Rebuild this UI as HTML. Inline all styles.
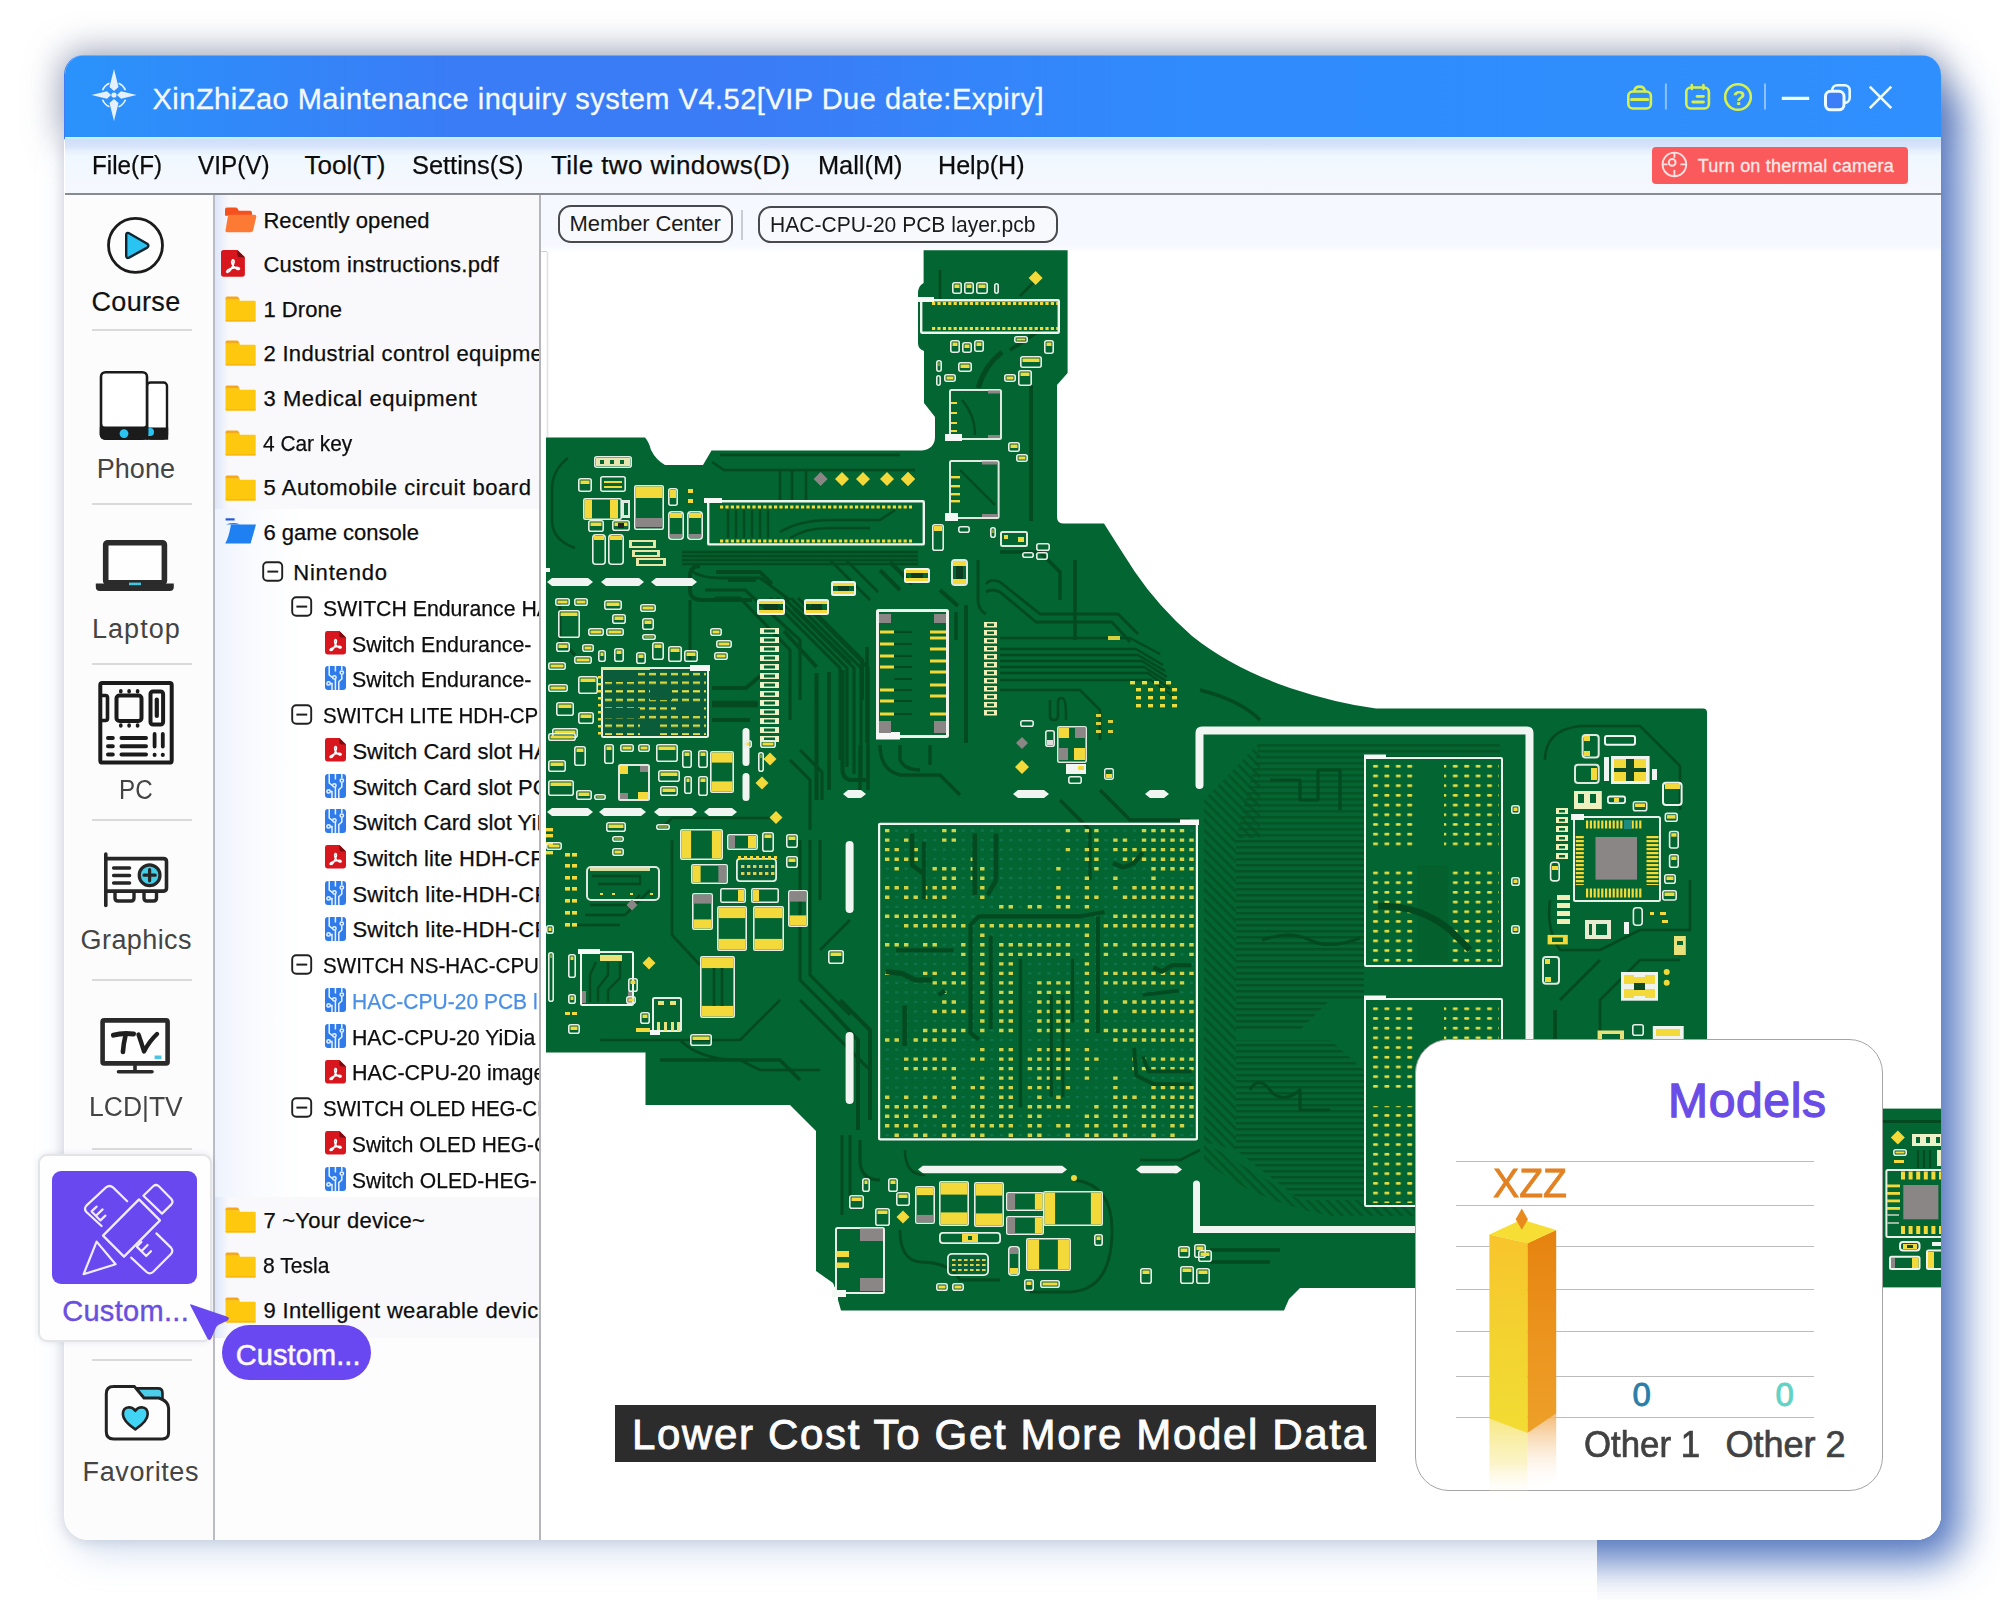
<!DOCTYPE html>
<html><head><meta charset="utf-8"><title>XinZhiZao</title>
<style>
html,body{margin:0;padding:0;}
body{width:2000px;height:1600px;background:#fff;position:relative;overflow:hidden;font-family:"Liberation Sans",sans-serif;}
.t{position:absolute;white-space:nowrap;font-family:"Liberation Sans",sans-serif;}
.b{position:absolute;box-sizing:border-box;}
svg{position:absolute;overflow:visible;}
</style></head><body>
<!-- shadows -->
<div class="b" style="left:64.00px;top:55.00px;width:1877.00px;height:84.00px;border-radius:20px 20px 0 0;box-shadow:0 -1px 34px 3px rgba(75,90,130,.58);background:#3a7df6;"></div>
<div class="b" style="left:64.00px;top:140.00px;width:1877.00px;height:1400.00px;border-radius:0 0 25px 24px;box-shadow:10px 12px 36px 0px rgba(150,178,220,.40),0 1px 13px 0 rgba(105,112,135,.30);background:#fff;"></div>
<div class="b" style="left:1900px;top:0;width:100px;height:1600px;overflow:hidden;"><div class="b" style="left:-503.00px;top:80.00px;width:544.00px;height:1460.00px;border-radius:0 20px 25px 0;box-shadow:12px 14px 40px 8px rgba(60,100,184,.8);background:#fff;"></div></div>
<div class="b" style="left:1597px;top:1500px;width:303px;height:100px;overflow:hidden;"><div class="b" style="left:-200.00px;top:-1420.00px;width:544.00px;height:1460.00px;border-radius:0 20px 25px 0;box-shadow:12px 14px 40px 8px rgba(60,100,184,.8);background:#fff;"></div></div>
<div class="b" id="win" style="left:64.5px;top:54.5px;width:1876.5px;height:1485.5px;border-radius:20px 20px 25px 24px;overflow:hidden;background:#fff;">
<div class="b" style="left:-64.5px;top:-54.5px;width:2000px;height:1600px;">
<div class="b" style="left:64.00px;top:54.00px;width:1877.00px;height:83.50px;background:linear-gradient(90deg,#2a93fb 0%,#3189f9 9%,#3a7cf6 21%,#3b7bf6 36%,#3584f9 48%,#308bfc 60%,#2f8ffd 100%);"></div>
<div class="b" style="left:64.00px;top:54.50px;width:1877.00px;height:1.50px;background:rgba(150,200,255,.55);"></div>
<div class="b" style="left:64.00px;top:137.50px;width:1877.00px;height:56.00px;background:linear-gradient(180deg,#cfddf8 0px,#d6e3fa 8px,#e6f0fd 13px,#eff7ff 18px,#f3f8fe 30px,#f5f8fe 100%);"></div>
<div class="b" style="left:64.00px;top:137.30px;width:1877.00px;height:2.00px;background:#cdeeff;"></div>
<div class="b" style="left:64.00px;top:192.80px;width:1877.00px;height:2.20px;background:#888b90;"></div>
<div class="b" style="left:64.00px;top:195.00px;width:149.00px;height:1345.00px;background:#fcfcfd;"></div>
<div class="b" style="left:212.60px;top:195.00px;width:2.00px;height:1345.00px;background:#b9bcc4;"></div>
<div class="b" style="left:214.60px;top:195.00px;width:325.00px;height:1345.00px;background:#f9f9fb;"></div>
<div class="b" style="left:539.20px;top:195.00px;width:2.00px;height:1345.00px;background:#b4b6bb;"></div>
<div class="b" style="left:541.20px;top:195.00px;width:1400.00px;height:58.00px;background:linear-gradient(180deg,#f5f8fe 0,#f5f8fe 50px,#ffffff 58px);"></div>
<div class="b" style="left:541.20px;top:253.00px;width:1400.00px;height:1287.00px;background:#fff;"></div>
<div class="b" style="left:541.20px;top:251.20px;width:6.00px;height:1.20px;background:#cfd1d6;"></div>
<div class="b" style="left:545.60px;top:252.00px;width:3.00px;height:185.00px;background:linear-gradient(90deg,rgba(225,226,230,0),rgba(222,224,228,.9) 50%,rgba(235,236,240,0));"></div>
<div class="t" style="left:152.50px;top:81.65px;font-size:29px;line-height:34.80px;color:#f4f9ff;letter-spacing:0.496px;-webkit-text-stroke:0.3px #f4f9ff;">XinZhiZao Maintenance inquiry system V4.52[VIP Due date:Expiry]</div>
<svg style="left:90px;top:68px" width="48" height="54" viewBox="0 0 48 54">
<g fill="#e6f1ff">
<path d="M24 1 L28.5 19 L24 23 L19.5 19 Z"/>
<path d="M24 53 L28.5 35 L24 31 L19.5 35 Z"/>
<path d="M1.5 27 L17 23.2 L21 27 L17 30.8 Z"/>
<path d="M46.5 27 L31 23.2 L27 27 L31 30.8 Z"/>
<circle cx="24" cy="27" r="2.6"/>
</g>
<g fill="none" stroke="#e6f1ff" stroke-width="1.7">
<path d="M12.6 22.2 A12.6 12.6 0 0 1 19.4 15.2"/>
<path d="M28.6 15.2 A12.6 12.6 0 0 1 35.4 22.2"/>
<path d="M35.4 31.8 A12.6 12.6 0 0 1 28.6 38.8"/>
<path d="M19.4 38.8 A12.6 12.6 0 0 1 12.6 31.8"/>
</g></svg>
<svg style="left:1620px;top:78px" width="290" height="40" viewBox="1620 78 290 40">
<g fill="none" stroke="#d6f04e" stroke-width="2.6" stroke-linejoin="round" stroke-linecap="round">
<rect x="1628.3" y="91.5" width="22.6" height="17" rx="4.5"/>
<path d="M1634.3 91 a5.4 5.4 0 0 1 10.6 0"/>
<path d="M1631.5 99.5 h16.2" stroke-width="3"/>
<rect x="1686.3" y="87.5" width="22.6" height="21" rx="4.5"/>
<path d="M1691.8 85 v4 M1703.4 85 v4" stroke-width="2.6"/>
<path d="M1697 96.3 h6.5 M1692.8 102 h10.7" stroke-width="2.8"/>
<circle cx="1738" cy="97" r="12.8"/>
</g>
<path d="M1665.9 83.5 v26" stroke="#8cc0ff" stroke-width="2"/>
<path d="M1765 83.5 v26" stroke="#8cc0ff" stroke-width="2"/>
<g fill="none" stroke="#ecfbff" stroke-linecap="butt">
<path d="M1781.8 98.3 h27.4" stroke-width="3.2"/>
<rect x="1832.2" y="85.3" width="17.5" height="17.5" rx="5" stroke-width="2.6"/>
<rect x="1825.5" y="91.3" width="18.5" height="18.5" rx="5" stroke-width="3" fill="#3c7df8"/>
<path d="M1869.8 86.6 L1891.3 108.2 M1891.3 86.6 L1869.8 108.2" stroke-width="2.6"/>
</g>
</svg>
<div class="t" style="left:1732.60px;top:85.12px;font-size:21px;line-height:25.20px;color:#d6f04e;letter-spacing:0.000px;font-weight:bold;">?</div>
<div class="t" style="left:91.50px;top:149.79px;font-size:26px;line-height:31.20px;color:#0c0c0c;letter-spacing:0.000px;-webkit-text-stroke:0.25px #0c0c0c;"><span style="display:inline-block;transform:scaleX(0.9322);transform-origin:0 50%;">File(F)</span></div>
<div class="t" style="left:198.00px;top:149.79px;font-size:26px;line-height:31.20px;color:#0c0c0c;letter-spacing:0.000px;-webkit-text-stroke:0.25px #0c0c0c;"><span style="display:inline-block;transform:scaleX(0.9338);transform-origin:0 50%;">VIP(V)</span></div>
<div class="t" style="left:304.50px;top:149.79px;font-size:26px;line-height:31.20px;color:#0c0c0c;letter-spacing:0.018px;-webkit-text-stroke:0.25px #0c0c0c;">Tool(T)</div>
<div class="t" style="left:412.00px;top:149.79px;font-size:26px;line-height:31.20px;color:#0c0c0c;letter-spacing:0.000px;-webkit-text-stroke:0.25px #0c0c0c;"><span style="display:inline-block;transform:scaleX(0.9769);transform-origin:0 50%;">Settins(S)</span></div>
<div class="t" style="left:551.00px;top:149.79px;font-size:26px;line-height:31.20px;color:#0c0c0c;letter-spacing:0.409px;-webkit-text-stroke:0.25px #0c0c0c;">Tile two windows(D)</div>
<div class="t" style="left:817.50px;top:149.79px;font-size:26px;line-height:31.20px;color:#0c0c0c;letter-spacing:0.000px;-webkit-text-stroke:0.25px #0c0c0c;"><span style="display:inline-block;transform:scaleX(0.9753);transform-origin:0 50%;">Mall(M)</span></div>
<div class="t" style="left:938.00px;top:149.79px;font-size:26px;line-height:31.20px;color:#0c0c0c;letter-spacing:0.000px;-webkit-text-stroke:0.25px #0c0c0c;"><span style="display:inline-block;transform:scaleX(0.9658);transform-origin:0 50%;">Help(H)</span></div>
<div class="b" style="left:1652.20px;top:147.20px;width:255.60px;height:36.60px;background:#fa5a5b;border-radius:4px;"></div>
<svg style="left:1660px;top:150px" width="30" height="30" viewBox="1660 150 30 30">
<g fill="none" stroke="#ffe3e3" stroke-width="1.9">
<circle cx="1674.4" cy="164.4" r="11.8"/>
<circle cx="1672.2" cy="162.4" r="3.4"/>
<path d="M1674.4 152.6 v5.2 M1674.4 170 v6.2 M1662.6 164.4 h5 M1680.4 164.4 h5.8"/>
</g></svg>
<div class="t" style="left:1697.70px;top:155.76px;font-size:18px;line-height:21.60px;color:#ffe9e9;letter-spacing:0.219px;-webkit-text-stroke:0.3px #ffe9e9;">Turn on thermal camera</div>
<div class="b" style="left:558.30px;top:205.30px;width:174.60px;height:37.40px;border:2px solid #47494d;border-radius:13px;background:#f7f9fd;"></div>
<div class="t" style="left:569.60px;top:211.38px;font-size:22px;line-height:26.40px;color:#1a1a1a;letter-spacing:-0.136px;">Member Center</div>
<div class="b" style="left:741.20px;top:209.50px;width:2.00px;height:30.50px;background:#c9cbd0;"></div>
<div class="b" style="left:757.80px;top:206.00px;width:299.80px;height:37.40px;border:2px solid #47494d;border-radius:13px;background:#f7f9fd;"></div>
<div class="t" style="left:769.80px;top:211.58px;font-size:22px;line-height:26.40px;color:#1a1a1a;letter-spacing:0.000px;"><span style="display:inline-block;transform:scaleX(0.9566);transform-origin:0 50%;">HAC-CPU-20 PCB layer.pcb</span></div>
<!-- sidebar -->
<div class="b" style="left:92.00px;top:328.80px;width:100.00px;height:2.00px;background:#dadada;"></div>
<div class="b" style="left:92.00px;top:502.80px;width:100.00px;height:2.00px;background:#dadada;"></div>
<div class="b" style="left:92.00px;top:662.60px;width:100.00px;height:2.00px;background:#dadada;"></div>
<div class="b" style="left:92.00px;top:818.70px;width:100.00px;height:2.00px;background:#dadada;"></div>
<div class="b" style="left:92.00px;top:978.90px;width:100.00px;height:2.00px;background:#dadada;"></div>
<div class="b" style="left:92.00px;top:1147.80px;width:100.00px;height:2.00px;background:#dadada;"></div>
<div class="b" style="left:92.00px;top:1358.80px;width:100.00px;height:2.00px;background:#dadada;"></div>
<svg style="left:100px;top:210px" width="72" height="72" viewBox="100 210 72 72">
<circle cx="135.5" cy="245.3" r="27" fill="#fdfdfd" stroke="#1b1b1b" stroke-width="2.8"/>
<path d="M126.2 235 L126.2 256 Q126.4 258.8 129 257.6 L147.2 247.6 Q149.6 245.6 147.2 243.8 L129 233.2 Q126.4 232 126.2 235 Z" fill="#29c4f2" stroke="#0d2530" stroke-width="2.4" stroke-linejoin="round"/>
</svg>
<div class="t" style="left:91.50px;top:285.84px;font-size:27px;line-height:32.40px;color:#111;letter-spacing:0.333px;-webkit-text-stroke:0.2px #111;">Course</div>
<svg style="left:96px;top:368px" width="78" height="76" viewBox="96 368 78 76">
<rect x="147" y="382.5" width="20" height="56" rx="3.5" fill="#fff" stroke="#1b1b1b" stroke-width="2.4"/>
<rect x="146" y="427.5" width="22.2" height="12.2" fill="#1b1b1b"/>
<path d="M148 428 h2 a4 4 0 0 1 0 8 h-2z" fill="#29c4f2"/>
<rect x="101" y="372.2" width="46" height="66.4" rx="4.5" fill="#fff" stroke="#1b1b1b" stroke-width="2.6"/>
<path d="M99.8 427 h48.4 v12.8 h-43.5 a5 5 0 0 1 -5 -5 z" fill="#1b1b1b"/>
<path d="M101.5 424 q0 3.2 3.4 3.2 h38.5 q3.4 0 3.4 -3.2" fill="none" stroke="#1b1b1b" stroke-width="1.4"/>
<circle cx="124" cy="433.6" r="4.4" fill="#29c4f2"/>
</svg>
<div class="t" style="left:96.70px;top:452.84px;font-size:27px;line-height:32.40px;color:#444;letter-spacing:0.057px;">Phone</div>
<svg style="left:94px;top:536px" width="84" height="60" viewBox="94 536 84 60">
<rect x="105.7" y="542.7" width="58.7" height="40" rx="2" fill="#fefefe" stroke="#2b2b2b" stroke-width="5.6"/>
<path d="M95.8 583.4 h78 v3.6 q0 4 -4 4 h-70 q-4 0 -4 -4 z" fill="#2b2b2b"/>
<rect x="129" y="582.6" width="12" height="2.6" fill="#41c8e0"/>
</svg>
<div class="t" style="left:92.00px;top:613.04px;font-size:27px;line-height:32.40px;color:#444;letter-spacing:1.044px;">Laptop</div>
<svg style="left:96px;top:678px" width="80" height="90" viewBox="96 678 80 90">
<g fill="none" stroke="#1b1b1b" stroke-linecap="round" stroke-linejoin="round">
<rect x="100.3" y="683" width="71.4" height="79.6" rx="2" stroke-width="4"/>
<path d="M101 695.5 h4.5 a2 2 0 0 1 2 2 v21 a2 2 0 0 1 -2 2 h-4.5" stroke-width="3.6"/>
<rect x="116.5" y="695.5" width="25" height="25.5" rx="3" stroke-width="4"/>
<rect x="150.5" y="691.5" width="12.6" height="33" rx="2.5" stroke-width="4"/>
<path d="M156.8 699.5 v16.5" stroke-width="4.2"/>
<path d="M120.8 690.8 v1 M129.1 690.8 v1 M137.6 690.8 v1 M120.8 725 v1 M129.1 725 v1 M137.6 725 v1" stroke-width="3.6"/>
<path d="M108 738 h4.8 M108 746.3 h4.8 M108 754.6 h4.8" stroke-width="4"/>
<path d="M121.5 738 h24.5 M121.5 746.3 h24.5 M121.5 754.6 h24.5" stroke-width="4"/>
<path d="M154.6 734 v12.5 M162.8 734 v12.5" stroke-width="3.8"/>
<path d="M154.6 754.8 v.2 M162.8 754.8 v.2" stroke-width="4"/>
</g></svg>
<div class="t" style="left:118.80px;top:773.94px;font-size:27px;line-height:32.40px;color:#444;letter-spacing:0.000px;"><span style="display:inline-block;transform:scaleX(0.8958);transform-origin:0 50%;">PC</span></div>
<svg style="left:100px;top:848px" width="72" height="64" viewBox="100 848 72 64">
<g fill="none" stroke="#262626" stroke-linecap="round" stroke-linejoin="round">
<path d="M105.8 854 v51.5" stroke-width="3.6"/>
<path d="M106 858.6 h57.5 q3 0 3 3 v26.5 q0 3 -3 3 h-57.5" stroke-width="3.6"/>
<path d="M113.6 868 h16 M113.6 875.5 h16 M113.6 883 h16" stroke-width="3.4"/>
<path d="M115 892 v6 q0 3 3 3 h13 q3 0 3 -3 v-6 M144 892 v6 q0 3 3 3 h6.5 q3 0 3 -3 v-6" stroke-width="3.4"/>
</g>
<circle cx="149.6" cy="875.2" r="10.4" fill="#43cde6" stroke="#262626" stroke-width="3.2"/>
<path d="M149.6 869.6 v11.2 M144 875.2 h11.2" stroke="#262626" stroke-width="3.2" stroke-linecap="round"/>
</svg>
<div class="t" style="left:80.60px;top:923.84px;font-size:27px;line-height:32.40px;color:#444;letter-spacing:0.409px;">Graphics</div>
<svg style="left:96px;top:1014px" width="80" height="64" viewBox="96 1014 80 64">
<rect x="102.6" y="1020.4" width="65" height="43" rx="1.5" fill="#fefefe" stroke="#2a2a2a" stroke-width="4.6"/>
<path d="M135 1065 v6.5 M118.5 1071.8 h33.5" stroke="#2a2a2a" stroke-width="3.6" stroke-linecap="round"/>
<g fill="none" stroke="#1f1f1f" stroke-linecap="round" stroke-linejoin="round">
<path d="M113.5 1035.2 q9 -2.6 20 -1.2" stroke-width="5"/>
<path d="M125.5 1035.5 q-2 8 -2.6 16.5" stroke-width="4.6"/>
<path d="M138.5 1034.5 q3 8.5 5.5 17 q5.5 -10.5 13 -17.5" stroke-width="4.4"/>
</g>
<rect x="154.6" y="1055.5" width="6.8" height="3.6" fill="#4cc4e2"/>
</svg>
<div class="t" style="left:88.90px;top:1090.84px;font-size:27px;line-height:32.40px;color:#444;letter-spacing:0.000px;"><span style="display:inline-block;transform:scaleX(0.9819);transform-origin:0 50%;">LCD|TV</span></div>
<svg style="left:100px;top:1380px" width="76" height="66" viewBox="100 1380 76 66">
<path d="M136.5 1388.4 h21.5 q4.5 0 4.5 4.5 v8 h-17 z" fill="#4ccdea" stroke="#222" stroke-width="2.6" stroke-linejoin="round"/>
<path d="M113.5 1386.6 h21 l9.5 11.4 h15 q9.6 3.4 9.6 10 v24.6 q0 6.4 -6.4 6.4 h-48.7 q-7.2 0 -7.2 -7.2 v-38 q0 -7.2 7.2 -7.2 z" fill="#fdfdfd" stroke="#222" stroke-width="3" stroke-linejoin="round"/>
<path d="M135.3 1429.4 q-12.4 -8.4 -12.4 -15.2 q0 -6.6 6 -7 q4 0 6.4 3.6 q2.4 -3.6 6.4 -3.6 q6 .4 6 7 q0 6.8 -12.4 15.2 z" fill="#42d4f4" stroke="#222" stroke-width="2.6" stroke-linejoin="round"/>
</svg>
<div class="t" style="left:82.60px;top:1455.84px;font-size:27px;line-height:32.40px;color:#444;letter-spacing:0.609px;">Favorites</div>
<!-- tree -->
<div class="b" style="left:214.60px;top:508.50px;width:324.60px;height:688.50px;background:linear-gradient(90deg,#eef3fd 0px,#fafbfe 40px,#ffffff 90px);"></div>
<div class="b" style="left:214.60px;top:195.00px;width:14.00px;height:313.50px;background:linear-gradient(90deg,rgba(214,226,250,.8),rgba(214,226,250,0));"></div>
<div class="b" style="left:214.60px;top:1197.00px;width:14.00px;height:343.00px;background:linear-gradient(90deg,rgba(214,226,250,.8),rgba(214,226,250,0));"></div>
<div class="b" style="left:214.60px;top:1338.00px;width:324.60px;height:202.00px;background:#fdfdfe;"></div>
<svg style="left:224px;top:207px" width="33" height="26" viewBox="0 0 33 26">
<path d="M1 2.6 q0 -2 2 -2 h8.4 q1.6 0 2.4 1.4 l1 1.8 h11.2 q2 0 2 2 v3 h-27z" fill="#f5511e"/>
<path d="M5.6 7.8 h24.8 q2.4 0 1.8 2.4 l-3 13 q-.6 2 -2.6 2 h-23.2 q-2.4 0 -1.8 -2.4 l2.2 -13 q.4 -2 1.8 -2z" fill="#fd7a35"/>
</svg>
<div class="t" style="left:263.40px;top:207.58px;font-size:22px;line-height:26.40px;color:#0d0d0d;letter-spacing:0.077px;-webkit-text-stroke:0.25px #0d0d0d;width:275.20px;overflow:hidden;">Recently opened</div>
<svg style="left:220.5px;top:250.4px" width="23.9" height="26.8" viewBox="0 0 21 23.5">
<path d="M2.4 0 h12 l6.6 6.4 v14.7 q0 2.4 -2.4 2.4 h-16.2 q-2.4 0 -2.4 -2.4 v-18.7 q0 -2.4 2.4 -2.4z" fill="#d8161e"/>
<path d="M14.4 0 l6.6 6.4 h-4.6 q-2 0 -2 -2z" fill="#7c0c10"/>
<path d="M10.2 8.6 q1.6 -.2 1.2 2.2 q-.4 2.6 -2.6 6.2 q-1.6 2.6 -3.2 2.6 q-1.2 -.4 .2 -1.8 q2.2 -1.8 6.6 -2.4 q3.4 -.4 3.8 .8 q0 1.2 -2 .6 q-2.4 -1 -4.2 -4.2 q-1 -2.6 .2 -4z" fill="none" stroke="#fff" stroke-width="1.5" stroke-linejoin="round"/>
</svg>
<div class="t" style="left:263.40px;top:252.18px;font-size:22px;line-height:26.40px;color:#0d0d0d;letter-spacing:0.251px;-webkit-text-stroke:0.25px #0d0d0d;width:275.20px;overflow:hidden;">Custom instructions.pdf</div>
<svg style="left:224.8px;top:295.79999999999995px" width="31" height="26" viewBox="0 0 31 26">
<path d="M0.5 2 q0 -1.6 1.6 -1.6 h9.6 q1.4 0 2 1.4 l1 2 h-14.2z" fill="#f6a71c"/>
<path d="M0.5 3.2 h13.2 l1.4 1.6 h14.6 q1 0 1 1 v18.6 q0 1 -1 1 h-28.2 q-1 0 -1 -1z" fill="#fec80f"/>
<path d="M0.5 24 h30.2 v.4 q0 1 -1 1 h-28.2 q-1 0 -1 -1z" fill="#f9b80f"/>
</svg>
<div class="t" style="left:263.40px;top:296.68px;font-size:22px;line-height:26.40px;color:#0d0d0d;letter-spacing:0.055px;-webkit-text-stroke:0.25px #0d0d0d;width:275.20px;overflow:hidden;">1 Drone</div>
<svg style="left:224.8px;top:340.4px" width="31" height="26" viewBox="0 0 31 26">
<path d="M0.5 2 q0 -1.6 1.6 -1.6 h9.6 q1.4 0 2 1.4 l1 2 h-14.2z" fill="#f6a71c"/>
<path d="M0.5 3.2 h13.2 l1.4 1.6 h14.6 q1 0 1 1 v18.6 q0 1 -1 1 h-28.2 q-1 0 -1 -1z" fill="#fec80f"/>
<path d="M0.5 24 h30.2 v.4 q0 1 -1 1 h-28.2 q-1 0 -1 -1z" fill="#f9b80f"/>
</svg>
<div class="t" style="left:263.40px;top:341.28px;font-size:22px;line-height:26.40px;color:#0d0d0d;letter-spacing:0.341px;-webkit-text-stroke:0.25px #0d0d0d;width:275.20px;overflow:hidden;">2 Industrial control equipment</div>
<svg style="left:224.8px;top:385.2px" width="31" height="26" viewBox="0 0 31 26">
<path d="M0.5 2 q0 -1.6 1.6 -1.6 h9.6 q1.4 0 2 1.4 l1 2 h-14.2z" fill="#f6a71c"/>
<path d="M0.5 3.2 h13.2 l1.4 1.6 h14.6 q1 0 1 1 v18.6 q0 1 -1 1 h-28.2 q-1 0 -1 -1z" fill="#fec80f"/>
<path d="M0.5 24 h30.2 v.4 q0 1 -1 1 h-28.2 q-1 0 -1 -1z" fill="#f9b80f"/>
</svg>
<div class="t" style="left:263.40px;top:386.08px;font-size:22px;line-height:26.40px;color:#0d0d0d;letter-spacing:0.583px;-webkit-text-stroke:0.25px #0d0d0d;width:275.20px;overflow:hidden;">3 Medical equipment</div>
<svg style="left:224.8px;top:430.2px" width="31" height="26" viewBox="0 0 31 26">
<path d="M0.5 2 q0 -1.6 1.6 -1.6 h9.6 q1.4 0 2 1.4 l1 2 h-14.2z" fill="#f6a71c"/>
<path d="M0.5 3.2 h13.2 l1.4 1.6 h14.6 q1 0 1 1 v18.6 q0 1 -1 1 h-28.2 q-1 0 -1 -1z" fill="#fec80f"/>
<path d="M0.5 24 h30.2 v.4 q0 1 -1 1 h-28.2 q-1 0 -1 -1z" fill="#f9b80f"/>
</svg>
<div class="t" style="left:263.40px;top:431.08px;font-size:22px;line-height:26.40px;color:#0d0d0d;letter-spacing:0.000px;-webkit-text-stroke:0.25px #0d0d0d;width:275.20px;overflow:hidden;"><span style="display:inline-block;transform:scaleX(0.9475);transform-origin:0 50%;">4 Car key</span></div>
<svg style="left:224.8px;top:474.59999999999997px" width="31" height="26" viewBox="0 0 31 26">
<path d="M0.5 2 q0 -1.6 1.6 -1.6 h9.6 q1.4 0 2 1.4 l1 2 h-14.2z" fill="#f6a71c"/>
<path d="M0.5 3.2 h13.2 l1.4 1.6 h14.6 q1 0 1 1 v18.6 q0 1 -1 1 h-28.2 q-1 0 -1 -1z" fill="#fec80f"/>
<path d="M0.5 24 h30.2 v.4 q0 1 -1 1 h-28.2 q-1 0 -1 -1z" fill="#f9b80f"/>
</svg>
<div class="t" style="left:263.40px;top:475.48px;font-size:22px;line-height:26.40px;color:#0d0d0d;letter-spacing:0.578px;-webkit-text-stroke:0.25px #0d0d0d;width:275.20px;overflow:hidden;">5 Automobile circuit board</div>
<svg style="left:224px;top:518px" width="33" height="28" viewBox="0 0 33 28">
<path d="M1.6 1.4 h9" stroke="#2456d8" stroke-width="2.2"/>
<path d="M2 6.4 q8 -2.6 14 0 h-14z" fill="#2c7ae8"/>
<path d="M7 6.4 h25 l-5.4 19 h-25.4 q3.6 -6 5.8 -19z" fill="#1f80f2"/>
</svg>
<div class="t" style="left:263.40px;top:519.88px;font-size:22px;line-height:26.40px;color:#0d0d0d;letter-spacing:0.021px;-webkit-text-stroke:0.25px #0d0d0d;width:275.20px;overflow:hidden;">6 game console</div>
<svg style="left:261.59999999999997px;top:560.6999999999999px" width="22" height="22" viewBox="0 0 22 22">
<rect x="1.2" y="1.2" width="19" height="18.6" rx="4" fill="#fff" stroke="#202020" stroke-width="1.9"/>
<path d="M5.4 10.6 h10.8" stroke="#202020" stroke-width="2"/></svg>
<div class="t" style="left:293.20px;top:560.18px;font-size:22px;line-height:26.40px;color:#0d0d0d;letter-spacing:0.818px;-webkit-text-stroke:0.25px #0d0d0d;width:245.40px;overflow:hidden;">Nintendo</div>
<svg style="left:291.2px;top:596.43px" width="22" height="22" viewBox="0 0 22 22">
<rect x="1.2" y="1.2" width="19" height="18.6" rx="4" fill="#fff" stroke="#202020" stroke-width="1.9"/>
<path d="M5.4 10.6 h10.8" stroke="#202020" stroke-width="2"/></svg>
<div class="t" style="left:322.60px;top:595.91px;font-size:22px;line-height:26.40px;color:#0d0d0d;letter-spacing:0.000px;-webkit-text-stroke:0.25px #0d0d0d;width:216.00px;overflow:hidden;"><span style="display:inline-block;transform:scaleX(0.9660);transform-origin:0 50%;">SWITCH Endurance HAC-CPU-01</span></div>
<svg style="left:324.8px;top:630.96px" width="21.0" height="23.5" viewBox="0 0 21 23.5">
<path d="M2.4 0 h12 l6.6 6.4 v14.7 q0 2.4 -2.4 2.4 h-16.2 q-2.4 0 -2.4 -2.4 v-18.7 q0 -2.4 2.4 -2.4z" fill="#d8161e"/>
<path d="M14.4 0 l6.6 6.4 h-4.6 q-2 0 -2 -2z" fill="#7c0c10"/>
<path d="M10.2 8.6 q1.6 -.2 1.2 2.2 q-.4 2.6 -2.6 6.2 q-1.6 2.6 -3.2 2.6 q-1.2 -.4 .2 -1.8 q2.2 -1.8 6.6 -2.4 q3.4 -.4 3.8 .8 q0 1.2 -2 .6 q-2.4 -1 -4.2 -4.2 q-1 -2.6 .2 -4z" fill="none" stroke="#fff" stroke-width="1.5" stroke-linejoin="round"/>
</svg>
<div class="t" style="left:352.40px;top:631.64px;font-size:22px;line-height:26.40px;color:#0d0d0d;letter-spacing:0.000px;-webkit-text-stroke:0.25px #0d0d0d;width:186.20px;overflow:hidden;"><span style="display:inline-block;transform:scaleX(0.9720);transform-origin:0 50%;">Switch Endurance-</span></div>
<svg style="left:324.8px;top:666.4899999999999px" width="21" height="24" viewBox="0 0 21 24">
<rect x="0" y="0" width="21" height="24" rx="3" fill="#2f7be9"/>
<g fill="none" stroke="#e8f2ff" stroke-width="1.5">
<path d="M4.2 0 v9 l3.4 2.6"/><path d="M10.4 0 v5.6 M10.4 13 v11"/><path d="M16.8 0 v4"/>
<path d="M16.8 9 v4 l-3 2.6 v8.4"/><path d="M7 24 v-6.6 h-2"/>
<circle cx="9.4" cy="11.4" r="1.7"/><circle cx="16.8" cy="6.6" r="1.7"/><circle cx="3.6" cy="17.4" r="1.7"/>
</g></svg>
<div class="t" style="left:352.40px;top:667.37px;font-size:22px;line-height:26.40px;color:#0d0d0d;letter-spacing:0.000px;-webkit-text-stroke:0.25px #0d0d0d;width:186.20px;overflow:hidden;"><span style="display:inline-block;transform:scaleX(0.9720);transform-origin:0 50%;">Switch Endurance-</span></div>
<svg style="left:291.2px;top:703.6199999999999px" width="22" height="22" viewBox="0 0 22 22">
<rect x="1.2" y="1.2" width="19" height="18.6" rx="4" fill="#fff" stroke="#202020" stroke-width="1.9"/>
<path d="M5.4 10.6 h10.8" stroke="#202020" stroke-width="2"/></svg>
<div class="t" style="left:322.60px;top:703.10px;font-size:22px;line-height:26.40px;color:#0d0d0d;letter-spacing:0.000px;-webkit-text-stroke:0.25px #0d0d0d;width:216.00px;overflow:hidden;"><span style="display:inline-block;transform:scaleX(0.9320);transform-origin:0 50%;">SWITCH LITE HDH-CPU-01</span></div>
<svg style="left:324.8px;top:738.15px" width="21.0" height="23.5" viewBox="0 0 21 23.5">
<path d="M2.4 0 h12 l6.6 6.4 v14.7 q0 2.4 -2.4 2.4 h-16.2 q-2.4 0 -2.4 -2.4 v-18.7 q0 -2.4 2.4 -2.4z" fill="#d8161e"/>
<path d="M14.4 0 l6.6 6.4 h-4.6 q-2 0 -2 -2z" fill="#7c0c10"/>
<path d="M10.2 8.6 q1.6 -.2 1.2 2.2 q-.4 2.6 -2.6 6.2 q-1.6 2.6 -3.2 2.6 q-1.2 -.4 .2 -1.8 q2.2 -1.8 6.6 -2.4 q3.4 -.4 3.8 .8 q0 1.2 -2 .6 q-2.4 -1 -4.2 -4.2 q-1 -2.6 .2 -4z" fill="none" stroke="#fff" stroke-width="1.5" stroke-linejoin="round"/>
</svg>
<div class="t" style="left:352.40px;top:738.83px;font-size:22px;line-height:26.40px;color:#0d0d0d;letter-spacing:0.033px;-webkit-text-stroke:0.25px #0d0d0d;width:186.20px;overflow:hidden;">Switch Card slot HAC</div>
<svg style="left:324.8px;top:773.68px" width="21" height="24" viewBox="0 0 21 24">
<rect x="0" y="0" width="21" height="24" rx="3" fill="#2f7be9"/>
<g fill="none" stroke="#e8f2ff" stroke-width="1.5">
<path d="M4.2 0 v9 l3.4 2.6"/><path d="M10.4 0 v5.6 M10.4 13 v11"/><path d="M16.8 0 v4"/>
<path d="M16.8 9 v4 l-3 2.6 v8.4"/><path d="M7 24 v-6.6 h-2"/>
<circle cx="9.4" cy="11.4" r="1.7"/><circle cx="16.8" cy="6.6" r="1.7"/><circle cx="3.6" cy="17.4" r="1.7"/>
</g></svg>
<div class="t" style="left:352.40px;top:774.56px;font-size:22px;line-height:26.40px;color:#0d0d0d;letter-spacing:0.033px;-webkit-text-stroke:0.25px #0d0d0d;width:186.20px;overflow:hidden;">Switch Card slot PCB</div>
<svg style="left:324.8px;top:809.41px" width="21" height="24" viewBox="0 0 21 24">
<rect x="0" y="0" width="21" height="24" rx="3" fill="#2f7be9"/>
<g fill="none" stroke="#e8f2ff" stroke-width="1.5">
<path d="M4.2 0 v9 l3.4 2.6"/><path d="M10.4 0 v5.6 M10.4 13 v11"/><path d="M16.8 0 v4"/>
<path d="M16.8 9 v4 l-3 2.6 v8.4"/><path d="M7 24 v-6.6 h-2"/>
<circle cx="9.4" cy="11.4" r="1.7"/><circle cx="16.8" cy="6.6" r="1.7"/><circle cx="3.6" cy="17.4" r="1.7"/>
</g></svg>
<div class="t" style="left:352.40px;top:810.29px;font-size:22px;line-height:26.40px;color:#0d0d0d;letter-spacing:0.031px;-webkit-text-stroke:0.25px #0d0d0d;width:186.20px;overflow:hidden;">Switch Card slot YiDian</div>
<svg style="left:324.8px;top:845.34px" width="21.0" height="23.5" viewBox="0 0 21 23.5">
<path d="M2.4 0 h12 l6.6 6.4 v14.7 q0 2.4 -2.4 2.4 h-16.2 q-2.4 0 -2.4 -2.4 v-18.7 q0 -2.4 2.4 -2.4z" fill="#d8161e"/>
<path d="M14.4 0 l6.6 6.4 h-4.6 q-2 0 -2 -2z" fill="#7c0c10"/>
<path d="M10.2 8.6 q1.6 -.2 1.2 2.2 q-.4 2.6 -2.6 6.2 q-1.6 2.6 -3.2 2.6 q-1.2 -.4 .2 -1.8 q2.2 -1.8 6.6 -2.4 q3.4 -.4 3.8 .8 q0 1.2 -2 .6 q-2.4 -1 -4.2 -4.2 q-1 -2.6 .2 -4z" fill="none" stroke="#fff" stroke-width="1.5" stroke-linejoin="round"/>
</svg>
<div class="t" style="left:352.40px;top:846.02px;font-size:22px;line-height:26.40px;color:#0d0d0d;letter-spacing:0.115px;-webkit-text-stroke:0.25px #0d0d0d;width:186.20px;overflow:hidden;">Switch lite HDH-CPU</div>
<svg style="left:324.8px;top:880.87px" width="21" height="24" viewBox="0 0 21 24">
<rect x="0" y="0" width="21" height="24" rx="3" fill="#2f7be9"/>
<g fill="none" stroke="#e8f2ff" stroke-width="1.5">
<path d="M4.2 0 v9 l3.4 2.6"/><path d="M10.4 0 v5.6 M10.4 13 v11"/><path d="M16.8 0 v4"/>
<path d="M16.8 9 v4 l-3 2.6 v8.4"/><path d="M7 24 v-6.6 h-2"/>
<circle cx="9.4" cy="11.4" r="1.7"/><circle cx="16.8" cy="6.6" r="1.7"/><circle cx="3.6" cy="17.4" r="1.7"/>
</g></svg>
<div class="t" style="left:352.40px;top:881.75px;font-size:22px;line-height:26.40px;color:#0d0d0d;letter-spacing:0.289px;-webkit-text-stroke:0.25px #0d0d0d;width:186.20px;overflow:hidden;">Switch lite-HDH-CPU</div>
<svg style="left:324.8px;top:916.5999999999999px" width="21" height="24" viewBox="0 0 21 24">
<rect x="0" y="0" width="21" height="24" rx="3" fill="#2f7be9"/>
<g fill="none" stroke="#e8f2ff" stroke-width="1.5">
<path d="M4.2 0 v9 l3.4 2.6"/><path d="M10.4 0 v5.6 M10.4 13 v11"/><path d="M16.8 0 v4"/>
<path d="M16.8 9 v4 l-3 2.6 v8.4"/><path d="M7 24 v-6.6 h-2"/>
<circle cx="9.4" cy="11.4" r="1.7"/><circle cx="16.8" cy="6.6" r="1.7"/><circle cx="3.6" cy="17.4" r="1.7"/>
</g></svg>
<div class="t" style="left:352.40px;top:917.48px;font-size:22px;line-height:26.40px;color:#0d0d0d;letter-spacing:0.289px;-webkit-text-stroke:0.25px #0d0d0d;width:186.20px;overflow:hidden;">Switch lite-HDH-CPU</div>
<svg style="left:291.2px;top:953.7299999999999px" width="22" height="22" viewBox="0 0 22 22">
<rect x="1.2" y="1.2" width="19" height="18.6" rx="4" fill="#fff" stroke="#202020" stroke-width="1.9"/>
<path d="M5.4 10.6 h10.8" stroke="#202020" stroke-width="2"/></svg>
<div class="t" style="left:322.60px;top:953.21px;font-size:22px;line-height:26.40px;color:#0d0d0d;letter-spacing:0.000px;-webkit-text-stroke:0.25px #0d0d0d;width:216.00px;overflow:hidden;"><span style="display:inline-block;transform:scaleX(0.9350);transform-origin:0 50%;">SWITCH NS-HAC-CPU-20</span></div>
<svg style="left:324.8px;top:988.06px" width="21" height="24" viewBox="0 0 21 24">
<rect x="0" y="0" width="21" height="24" rx="3" fill="#2f7be9"/>
<g fill="none" stroke="#e8f2ff" stroke-width="1.5">
<path d="M4.2 0 v9 l3.4 2.6"/><path d="M10.4 0 v5.6 M10.4 13 v11"/><path d="M16.8 0 v4"/>
<path d="M16.8 9 v4 l-3 2.6 v8.4"/><path d="M7 24 v-6.6 h-2"/>
<circle cx="9.4" cy="11.4" r="1.7"/><circle cx="16.8" cy="6.6" r="1.7"/><circle cx="3.6" cy="17.4" r="1.7"/>
</g></svg>
<div class="t" style="left:352.40px;top:988.94px;font-size:22px;line-height:26.40px;color:#4a8fe6;letter-spacing:0.000px;-webkit-text-stroke:0.25px #4a8fe6;width:186.20px;overflow:hidden;"><span style="display:inline-block;transform:scaleX(0.9550);transform-origin:0 50%;">HAC-CPU-20 PCB l</span></div>
<svg style="left:324.8px;top:1023.7899999999998px" width="21" height="24" viewBox="0 0 21 24">
<rect x="0" y="0" width="21" height="24" rx="3" fill="#2f7be9"/>
<g fill="none" stroke="#e8f2ff" stroke-width="1.5">
<path d="M4.2 0 v9 l3.4 2.6"/><path d="M10.4 0 v5.6 M10.4 13 v11"/><path d="M16.8 0 v4"/>
<path d="M16.8 9 v4 l-3 2.6 v8.4"/><path d="M7 24 v-6.6 h-2"/>
<circle cx="9.4" cy="11.4" r="1.7"/><circle cx="16.8" cy="6.6" r="1.7"/><circle cx="3.6" cy="17.4" r="1.7"/>
</g></svg>
<div class="t" style="left:352.40px;top:1024.67px;font-size:22px;line-height:26.40px;color:#0d0d0d;letter-spacing:0.000px;-webkit-text-stroke:0.25px #0d0d0d;width:186.20px;overflow:hidden;"><span style="display:inline-block;transform:scaleX(0.9670);transform-origin:0 50%;">HAC-CPU-20 YiDia</span></div>
<svg style="left:324.8px;top:1059.7199999999998px" width="21.0" height="23.5" viewBox="0 0 21 23.5">
<path d="M2.4 0 h12 l6.6 6.4 v14.7 q0 2.4 -2.4 2.4 h-16.2 q-2.4 0 -2.4 -2.4 v-18.7 q0 -2.4 2.4 -2.4z" fill="#d8161e"/>
<path d="M14.4 0 l6.6 6.4 h-4.6 q-2 0 -2 -2z" fill="#7c0c10"/>
<path d="M10.2 8.6 q1.6 -.2 1.2 2.2 q-.4 2.6 -2.6 6.2 q-1.6 2.6 -3.2 2.6 q-1.2 -.4 .2 -1.8 q2.2 -1.8 6.6 -2.4 q3.4 -.4 3.8 .8 q0 1.2 -2 .6 q-2.4 -1 -4.2 -4.2 q-1 -2.6 .2 -4z" fill="none" stroke="#fff" stroke-width="1.5" stroke-linejoin="round"/>
</svg>
<div class="t" style="left:352.40px;top:1060.40px;font-size:22px;line-height:26.40px;color:#0d0d0d;letter-spacing:0.000px;-webkit-text-stroke:0.25px #0d0d0d;width:186.20px;overflow:hidden;"><span style="display:inline-block;transform:scaleX(0.9770);transform-origin:0 50%;">HAC-CPU-20 image</span></div>
<svg style="left:291.2px;top:1096.6499999999999px" width="22" height="22" viewBox="0 0 22 22">
<rect x="1.2" y="1.2" width="19" height="18.6" rx="4" fill="#fff" stroke="#202020" stroke-width="1.9"/>
<path d="M5.4 10.6 h10.8" stroke="#202020" stroke-width="2"/></svg>
<div class="t" style="left:322.60px;top:1096.13px;font-size:22px;line-height:26.40px;color:#0d0d0d;letter-spacing:0.000px;-webkit-text-stroke:0.25px #0d0d0d;width:216.00px;overflow:hidden;"><span style="display:inline-block;transform:scaleX(0.9320);transform-origin:0 50%;">SWITCH OLED HEG-CPU</span></div>
<svg style="left:324.8px;top:1131.1799999999998px" width="21.0" height="23.5" viewBox="0 0 21 23.5">
<path d="M2.4 0 h12 l6.6 6.4 v14.7 q0 2.4 -2.4 2.4 h-16.2 q-2.4 0 -2.4 -2.4 v-18.7 q0 -2.4 2.4 -2.4z" fill="#d8161e"/>
<path d="M14.4 0 l6.6 6.4 h-4.6 q-2 0 -2 -2z" fill="#7c0c10"/>
<path d="M10.2 8.6 q1.6 -.2 1.2 2.2 q-.4 2.6 -2.6 6.2 q-1.6 2.6 -3.2 2.6 q-1.2 -.4 .2 -1.8 q2.2 -1.8 6.6 -2.4 q3.4 -.4 3.8 .8 q0 1.2 -2 .6 q-2.4 -1 -4.2 -4.2 q-1 -2.6 .2 -4z" fill="none" stroke="#fff" stroke-width="1.5" stroke-linejoin="round"/>
</svg>
<div class="t" style="left:352.40px;top:1131.86px;font-size:22px;line-height:26.40px;color:#0d0d0d;letter-spacing:0.000px;-webkit-text-stroke:0.25px #0d0d0d;width:186.20px;overflow:hidden;"><span style="display:inline-block;transform:scaleX(0.9480);transform-origin:0 50%;">Switch OLED HEG-CPU</span></div>
<svg style="left:324.8px;top:1166.71px" width="21" height="24" viewBox="0 0 21 24">
<rect x="0" y="0" width="21" height="24" rx="3" fill="#2f7be9"/>
<g fill="none" stroke="#e8f2ff" stroke-width="1.5">
<path d="M4.2 0 v9 l3.4 2.6"/><path d="M10.4 0 v5.6 M10.4 13 v11"/><path d="M16.8 0 v4"/>
<path d="M16.8 9 v4 l-3 2.6 v8.4"/><path d="M7 24 v-6.6 h-2"/>
<circle cx="9.4" cy="11.4" r="1.7"/><circle cx="16.8" cy="6.6" r="1.7"/><circle cx="3.6" cy="17.4" r="1.7"/>
</g></svg>
<div class="t" style="left:352.40px;top:1167.59px;font-size:22px;line-height:26.40px;color:#0d0d0d;letter-spacing:0.000px;-webkit-text-stroke:0.25px #0d0d0d;width:186.20px;overflow:hidden;"><span style="display:inline-block;transform:scaleX(0.9570);transform-origin:0 50%;">Switch OLED-HEG-</span></div>
<svg style="left:224.8px;top:1207.2px" width="31" height="26" viewBox="0 0 31 26">
<path d="M0.5 2 q0 -1.6 1.6 -1.6 h9.6 q1.4 0 2 1.4 l1 2 h-14.2z" fill="#f6a71c"/>
<path d="M0.5 3.2 h13.2 l1.4 1.6 h14.6 q1 0 1 1 v18.6 q0 1 -1 1 h-28.2 q-1 0 -1 -1z" fill="#fec80f"/>
<path d="M0.5 24 h30.2 v.4 q0 1 -1 1 h-28.2 q-1 0 -1 -1z" fill="#f9b80f"/>
</svg>
<div class="t" style="left:263.40px;top:1208.08px;font-size:22px;line-height:26.40px;color:#0d0d0d;letter-spacing:0.235px;-webkit-text-stroke:0.25px #0d0d0d;width:275.20px;overflow:hidden;">7 ~Your device~</div>
<svg style="left:224.8px;top:1251.8000000000002px" width="31" height="26" viewBox="0 0 31 26">
<path d="M0.5 2 q0 -1.6 1.6 -1.6 h9.6 q1.4 0 2 1.4 l1 2 h-14.2z" fill="#f6a71c"/>
<path d="M0.5 3.2 h13.2 l1.4 1.6 h14.6 q1 0 1 1 v18.6 q0 1 -1 1 h-28.2 q-1 0 -1 -1z" fill="#fec80f"/>
<path d="M0.5 24 h30.2 v.4 q0 1 -1 1 h-28.2 q-1 0 -1 -1z" fill="#f9b80f"/>
</svg>
<div class="t" style="left:263.40px;top:1252.68px;font-size:22px;line-height:26.40px;color:#0d0d0d;letter-spacing:0.000px;-webkit-text-stroke:0.25px #0d0d0d;width:275.20px;overflow:hidden;"><span style="display:inline-block;transform:scaleX(0.9594);transform-origin:0 50%;">8 Tesla</span></div>
<svg style="left:224.8px;top:1297.1000000000001px" width="31" height="26" viewBox="0 0 31 26">
<path d="M0.5 2 q0 -1.6 1.6 -1.6 h9.6 q1.4 0 2 1.4 l1 2 h-14.2z" fill="#f6a71c"/>
<path d="M0.5 3.2 h13.2 l1.4 1.6 h14.6 q1 0 1 1 v18.6 q0 1 -1 1 h-28.2 q-1 0 -1 -1z" fill="#fec80f"/>
<path d="M0.5 24 h30.2 v.4 q0 1 -1 1 h-28.2 q-1 0 -1 -1z" fill="#f9b80f"/>
</svg>
<div class="t" style="left:263.40px;top:1297.98px;font-size:22px;line-height:26.40px;color:#0d0d0d;letter-spacing:0.347px;-webkit-text-stroke:0.25px #0d0d0d;width:275.20px;overflow:hidden;">9 Intelligent wearable device</div>
<!-- pcb -->
<svg style="left:0;top:0;filter:blur(.65px)" width="2000" height="1600" viewBox="0 0 2000 1600"><path d="M546 437.5 H645 Q649 442 651 450 Q656 460 665 465 H703 L711.5 450.5 H922 Q934 449 935 438 V417 L924 403 V351 Q918 349 918 343 V293 Q918 286 923.6 283 V250.2 H1067.6 V373 L1057 385 V517 Q1057 523.6 1064 523.6 H1104 Q1118 546 1135 572 Q1158 606 1192 636 Q1232 668 1290 688 Q1335 703 1376 708.6 H1703 Q1707 708.6 1707 712.6 V1288 H1300 L1289 1299 L1284 1310.6 H841 L838 1300 V1295 L833 1283 L816 1271 V1131 L790 1105 H645.5 V1052.5 H546 Z" fill="#036531"/>
<rect x="1882.7" y="1108.6" width="60" height="178.8" fill="#036531"/>
<path d="M682 552 H918" fill="none" stroke="#034a20" stroke-width="2.34" stroke-linejoin="round"/>
<path d="M682 556 H918" fill="none" stroke="#034a20" stroke-width="2.34" stroke-linejoin="round"/>
<path d="M682 560 H918" fill="none" stroke="#034a20" stroke-width="2.34" stroke-linejoin="round"/>
<path d="M682 564 H918" fill="none" stroke="#034a20" stroke-width="2.34" stroke-linejoin="round"/>
<path d="M690 570 Q700 578 720 578 H760 L790 600" fill="none" stroke="#034a20" stroke-width="2.86" stroke-linejoin="round"/>
<path d="M705 590 H745 L800 640 V700" fill="none" stroke="#034a20" stroke-width="3.12" stroke-linejoin="round"/>
<path d="M715 598 H740 L790 650 V720" fill="none" stroke="#034a20" stroke-width="3.12" stroke-linejoin="round"/>
<path d="M830 560 L870 600" fill="none" stroke="#034a20" stroke-width="2.86" stroke-linejoin="round"/>
<path d="M846 560 L878 592" fill="none" stroke="#034a20" stroke-width="2.86" stroke-linejoin="round"/>
<path d="M720 455 H900" fill="none" stroke="#034a20" stroke-width="2.60" stroke-linejoin="round"/>
<path d="M712 462 L724 470 H915" fill="none" stroke="#034a20" stroke-width="2.60" stroke-linejoin="round"/>
<path d="M780 470 V500 M792 470 V500 M806 470 V500" fill="none" stroke="#034a20" stroke-width="2.60" stroke-linejoin="round"/>
<path d="M568 458 Q552 470 552 490 V520 Q552 540 575 548" fill="none" stroke="#034a20" stroke-width="2.60" stroke-linejoin="round"/>
<path d="M770 598 L840 668 V760" fill="none" stroke="#034a20" stroke-width="3.12" stroke-linejoin="round"/>
<path d="M777 598 L847 668 V767" fill="none" stroke="#034a20" stroke-width="3.12" stroke-linejoin="round"/>
<path d="M784 598 L854 668 V774" fill="none" stroke="#034a20" stroke-width="3.12" stroke-linejoin="round"/>
<path d="M791 598 L861 668 V781" fill="none" stroke="#034a20" stroke-width="3.12" stroke-linejoin="round"/>
<path d="M798 598 L868 668 V788" fill="none" stroke="#034a20" stroke-width="3.12" stroke-linejoin="round"/>
<path d="M1000 638 H1130 L1160 654" fill="none" stroke="#034a20" stroke-width="2.34" stroke-linejoin="round"/>
<path d="M1000 649 H1136 L1163 665" fill="none" stroke="#034a20" stroke-width="2.34" stroke-linejoin="round"/>
<path d="M1000 655 H1138 L1165 671" fill="none" stroke="#034a20" stroke-width="2.34" stroke-linejoin="round"/>
<path d="M1000 661 H1142 L1167 677" fill="none" stroke="#034a20" stroke-width="2.34" stroke-linejoin="round"/>
<path d="M1000 667 H1144 L1169 683" fill="none" stroke="#034a20" stroke-width="2.34" stroke-linejoin="round"/>
<path d="M1000 673 H1148 L1170 689" fill="none" stroke="#034a20" stroke-width="2.34" stroke-linejoin="round"/>
<path d="M1000 680 H1151 L1173 696" fill="none" stroke="#034a20" stroke-width="2.34" stroke-linejoin="round"/>
<path d="M986 584 Q990 578 1000 582 L1040 614 H1118 L1138 634" fill="none" stroke="#034a20" stroke-width="2.86" stroke-linejoin="round"/>
<path d="M986 592 Q992 588 1000 592 L1036 622 H1112 L1130 642" fill="none" stroke="#034a20" stroke-width="2.86" stroke-linejoin="round"/>
<path d="M978 560 V600 Q978 610 986 614" fill="none" stroke="#034a20" stroke-width="2.86" stroke-linejoin="round"/>
<path d="M1000 690 H1080 L1100 710 V740" fill="none" stroke="#034a20" stroke-width="2.60" stroke-linejoin="round"/>
<path d="M1050 700 V716 Q1050 720 1054 720 Q1058 720 1058 716 V702 Q1058 698 1062 698 Q1066 698 1066 716 V720" fill="none" stroke="#034a20" stroke-width="2.60" stroke-linejoin="round"/>
<path d="M1031 385 V521" fill="none" stroke="#034a20" stroke-width="3.90" stroke-linejoin="round"/>
<path d="M940 270 V300" fill="none" stroke="#034a20" stroke-width="2.60" stroke-linejoin="round"/>
<path d="M1020 296 L1034 282" fill="none" stroke="#034a20" stroke-width="2.60" stroke-linejoin="round"/>
<path d="M1002 352 Q985 365 978 388" fill="none" stroke="#034a20" stroke-width="5.20" stroke-linejoin="round"/>
<path d="M1040 330 L1010 350" fill="none" stroke="#034a20" stroke-width="3.90" stroke-linejoin="round"/>
<path d="M660 830 L672 818 H770" fill="none" stroke="#034a20" stroke-width="2.60" stroke-linejoin="round"/>
<path d="M672 840 V935 L700 965" fill="none" stroke="#034a20" stroke-width="2.60" stroke-linejoin="round"/>
<path d="M590 905 H630 L640 895" fill="none" stroke="#034a20" stroke-width="2.60" stroke-linejoin="round"/>
<path d="M585 915 H625 L650 890" fill="none" stroke="#034a20" stroke-width="2.60" stroke-linejoin="round"/>
<path d="M575 925 H620" fill="none" stroke="#034a20" stroke-width="2.60" stroke-linejoin="round"/>
<path d="M600 1040 H740 L780 1000" fill="none" stroke="#034a20" stroke-width="2.60" stroke-linejoin="round"/>
<path d="M800 840 V980 L830 1010" fill="none" stroke="#034a20" stroke-width="3.12" stroke-linejoin="round"/>
<path d="M810 840 V975 L850 1015" fill="none" stroke="#034a20" stroke-width="3.12" stroke-linejoin="round"/>
<path d="M820 840 V900" fill="none" stroke="#034a20" stroke-width="3.12" stroke-linejoin="round"/>
<path d="M790 760 L810 780 V830" fill="none" stroke="#034a20" stroke-width="3.12" stroke-linejoin="round"/>
<path d="M800 750 L822 772 V800" fill="none" stroke="#034a20" stroke-width="3.12" stroke-linejoin="round"/>
<path d="M850 920 L820 950" fill="none" stroke="#034a20" stroke-width="2.86" stroke-linejoin="round"/>
<path d="M800 1000 L870 1070 V1100" fill="none" stroke="#034a20" stroke-width="3.12" stroke-linejoin="round"/>
<path d="M680 1040 Q700 1060 740 1060 L760 1070 H820" fill="none" stroke="#034a20" stroke-width="2.60" stroke-linejoin="round"/>
<path d="M860 1140 V1160 Q860 1180 880 1180" fill="none" stroke="#034a20" stroke-width="3.12" stroke-linejoin="round"/>
<path d="M850 1135 V1200" fill="none" stroke="#034a20" stroke-width="2.86" stroke-linejoin="round"/>
<path d="M842 1135 V1215" fill="none" stroke="#034a20" stroke-width="2.86" stroke-linejoin="round"/>
<path d="M905 1150 Q905 1175 925 1175" fill="none" stroke="#034a20" stroke-width="2.60" stroke-linejoin="round"/>
<path d="M900 1230 Q900 1260 920 1262 Q950 1262 960 1280 H1000" fill="none" stroke="#034a20" stroke-width="2.86" stroke-linejoin="round"/>
<path d="M1075 1180 Q1112 1185 1112 1230 Q1112 1290 1070 1292 H1030" fill="none" stroke="#034a20" stroke-width="2.86" stroke-linejoin="round"/>
<path d="M1200 1150 L1180 1160 H1140" fill="none" stroke="#034a20" stroke-width="2.60" stroke-linejoin="round"/>
<path d="M816.5 673 V800" fill="none" stroke="#034a20" stroke-width="4.16" stroke-linejoin="round"/>
<path d="M842.5 670 V770 Q842.5 778 850 780 H866" fill="none" stroke="#034a20" stroke-width="4.16" stroke-linejoin="round"/>
<path d="M829 672 V790" fill="none" stroke="#034a20" stroke-width="3.90" stroke-linejoin="round"/>
<path d="M784 631 L816.5 667" fill="none" stroke="#034a20" stroke-width="3.90" stroke-linejoin="round"/>
<path d="M794 608 L850 663" fill="none" stroke="#034a20" stroke-width="3.90" stroke-linejoin="round"/>
<path d="M806 604 L862 660 V700" fill="none" stroke="#034a20" stroke-width="3.90" stroke-linejoin="round"/>
<path d="M966 605 V743" fill="none" stroke="#034a20" stroke-width="3.90" stroke-linejoin="round"/>
<path d="M956 612 V640" fill="none" stroke="#034a20" stroke-width="3.38" stroke-linejoin="round"/>
<path d="M867 647 V743" fill="none" stroke="#034a20" stroke-width="3.38" stroke-linejoin="round"/>
<path d="M712 704 H758" fill="none" stroke="#034a20" stroke-width="6.50" stroke-linejoin="round"/>
<path d="M712 688 H746 L760 676" fill="none" stroke="#034a20" stroke-width="3.90" stroke-linejoin="round"/>
<path d="M712 720 H750" fill="none" stroke="#034a20" stroke-width="3.90" stroke-linejoin="round"/>
<path d="M700 566 Q690 566 690 576 V590 Q690 600 702 600 H752" fill="none" stroke="#034a20" stroke-width="3.90" stroke-linejoin="round"/>
<path d="M716 572 H760 L772 584" fill="none" stroke="#034a20" stroke-width="3.90" stroke-linejoin="round"/>
<path d="M728 580 H756" fill="none" stroke="#034a20" stroke-width="3.90" stroke-linejoin="round"/>
<path d="M880 570 L900 590 M890 562 L912 584" fill="none" stroke="#034a20" stroke-width="3.90" stroke-linejoin="round"/>
<path d="M940 590 L958 606" fill="none" stroke="#034a20" stroke-width="3.90" stroke-linejoin="round"/>
<path d="M1000 552 H1040 L1060 572 V600" fill="none" stroke="#034a20" stroke-width="3.38" stroke-linejoin="round"/>
<path d="M1075 560 V640" fill="none" stroke="#034a20" stroke-width="3.38" stroke-linejoin="round"/>
<path d="M860 745 V790 M868 745 V790" fill="none" stroke="#034a20" stroke-width="3.38" stroke-linejoin="round"/>
<path d="M880 745 Q880 770 900 775 H940 L960 795" fill="none" stroke="#034a20" stroke-width="3.38" stroke-linejoin="round"/>
<path d="M900 745 V760 Q905 770 920 770 M930 745 V765" fill="none" stroke="#034a20" stroke-width="3.38" stroke-linejoin="round"/>
<path d="M1100 790 L1130 820 H1190" fill="none" stroke="#034a20" stroke-width="3.38" stroke-linejoin="round"/>
<path d="M1060 800 L1090 830 V880" fill="none" stroke="#034a20" stroke-width="3.38" stroke-linejoin="round"/>
<path d="M1200 690 Q1240 700 1260 720" fill="none" stroke="#034a20" stroke-width="3.38" stroke-linejoin="round"/>
<path d="M560 600 V640 L575 655" fill="none" stroke="#034a20" stroke-width="3.12" stroke-linejoin="round"/>
<path d="M690 600 V660" fill="none" stroke="#034a20" stroke-width="3.12" stroke-linejoin="round"/>
<path d="M840 1000 L870 1030 V1120" fill="none" stroke="#034a20" stroke-width="3.90" stroke-linejoin="round"/>
<path d="M830 1010 L858 1040 V1130" fill="none" stroke="#034a20" stroke-width="3.90" stroke-linejoin="round"/>
<path d="M660 1060 H780 L800 1080" fill="none" stroke="#034a20" stroke-width="3.38" stroke-linejoin="round"/>
<path d="M1210 1250 H1280 M1210 1262 H1270" fill="none" stroke="#034a20" stroke-width="3.38" stroke-linejoin="round"/>
<path d="M1560 1060 V1280" fill="none" stroke="#034a20" stroke-width="3.12" stroke-linejoin="round"/>
<path d="M1600 1060 V1200 L1640 1240" fill="none" stroke="#034a20" stroke-width="3.12" stroke-linejoin="round"/>
<path d="M1660 1050 V1150" fill="none" stroke="#034a20" stroke-width="3.12" stroke-linejoin="round"/>
<defs><pattern id="hl" width="6" height="6" patternUnits="userSpaceOnUse"><rect x="0" y="0" width="6" height="2.6" fill="#044f23"/></pattern><pattern id="vl" width="6" height="6" patternUnits="userSpaceOnUse"><rect x="0" y="0" width="2.4" height="6" fill="#045225"/></pattern><pattern id="dl" width="7" height="7" patternUnits="userSpaceOnUse" patternTransform="rotate(45)"><rect x="0" y="0" width="7" height="2.8" fill="#044f23"/></pattern></defs>
<path d="M1236 838 H1364 V1000 H1330 L1300 1030 H1236 Z" fill="url(#hl)" opacity=".85"/>
<path d="M1236 1040 H1330 L1364 1070 V1200 H1300 L1236 1150 Z" fill="url(#hl)" opacity=".8"/>
<path d="M1204 838 H1236 V1150 L1204 1142 Z" fill="url(#dl)" opacity=".75"/>
<path d="M1260 742 H1500 V757 H1364 V838 H1236 Z" fill="url(#hl)" opacity=".7"/>
<path d="M1204 1142 L1300 1200 H1415 V1216 H1330 Q1250 1200 1204 1160 Z" fill="url(#dl)" opacity=".7"/>
<path d="M1204 800 L1260 742 V838 H1204 Z" fill="url(#dl)" opacity=".7"/>
<path d="M1270 780 H1300 V800 H1318 V770 H1340 V810" fill="none" stroke="#034a20" stroke-width="3.12" stroke-linejoin="round"/>
<path d="M1262 940 Q1290 930 1310 940 T1360 938" fill="none" stroke="#034a20" stroke-width="3.12" stroke-linejoin="round"/>
<path d="M1250 1090 Q1258 1075 1270 1090 T1300 1090 V1110 H1330" fill="none" stroke="#034a20" stroke-width="3.12" stroke-linejoin="round"/>
<path d="M1545 760 Q1545 730 1580 726 H1640 L1680 766 V810" fill="none" stroke="#034a20" stroke-width="2.60" stroke-linejoin="round"/>
<path d="M1550 900 Q1546 930 1560 950 H1600 L1640 930 H1690 V880" fill="none" stroke="#034a20" stroke-width="2.60" stroke-linejoin="round"/>
<path d="M1560 1000 L1600 960" fill="none" stroke="#034a20" stroke-width="2.86" stroke-linejoin="round"/>
<path d="M1600 1040 V1000 L1640 960 H1680" fill="none" stroke="#034a20" stroke-width="2.60" stroke-linejoin="round"/>
<path d="M1555 1010 V1039" fill="none" stroke="#034a20" stroke-width="3.90" stroke-linejoin="round"/>
<path d="M1199.5 785 V733 Q1199.5 730.5 1202 730.5 H1527 Q1529.5 730.5 1529.5 733 V1040" fill="none" stroke="#f2f6f2" stroke-width="8" stroke-linecap="round"/>
<path d="M1196.5 1184 V1229.5 H1416" fill="none" stroke="#f2f6f2" stroke-width="7" stroke-linecap="round"/>
<defs><pattern id="bga" x="880.6" y="825.6" width="9.56" height="9.56" patternUnits="userSpaceOnUse"><rect x="2.6" y="3" width="4" height="3" rx="1" fill="#c9cf4c"/></pattern><pattern id="bgat" x="880.6" y="825.6" width="9.56" height="9.56" patternUnits="userSpaceOnUse"><rect x="2.8" y="3.2" width="3.6" height="2.4" rx="1" fill="#1d7d5a"/></pattern><pattern id="mem" x="1371" y="762" width="11.4" height="9.7" patternUnits="userSpaceOnUse"><rect x="2" y="3" width="5" height="2.6" rx="1" fill="#e4de45"/></pattern></defs>
<path d="M895.1 829.5h3.2v2.2h-3.2zM904.6 829.5h3.2v2.2h-3.2zM914.1 829.5h3.2v2.2h-3.2zM923.6 829.5h3.2v2.2h-3.2zM933.1 829.5h3.2v2.2h-3.2zM961.7 829.5h3.2v2.2h-3.2zM971.2 829.5h3.2v2.2h-3.2zM980.7 829.5h3.2v2.2h-3.2zM990.2 829.5h3.2v2.2h-3.2zM999.7 829.5h3.2v2.2h-3.2zM1009.2 829.5h3.2v2.2h-3.2zM1018.7 829.5h3.2v2.2h-3.2zM1028.2 829.5h3.2v2.2h-3.2zM1037.8 829.5h3.2v2.2h-3.2zM1047.3 829.5h3.2v2.2h-3.2zM1056.8 829.5h3.2v2.2h-3.2zM1075.8 829.5h3.2v2.2h-3.2zM1104.3 829.5h3.2v2.2h-3.2zM1113.8 829.5h3.2v2.2h-3.2zM1123.3 829.5h3.2v2.2h-3.2zM1132.9 829.5h3.2v2.2h-3.2zM1189.9 829.5h3.2v2.2h-3.2zM895.1 839.0h3.2v2.2h-3.2zM914.1 839.0h3.2v2.2h-3.2zM923.6 839.0h3.2v2.2h-3.2zM933.1 839.0h3.2v2.2h-3.2zM961.7 839.0h3.2v2.2h-3.2zM971.2 839.0h3.2v2.2h-3.2zM980.7 839.0h3.2v2.2h-3.2zM990.2 839.0h3.2v2.2h-3.2zM999.7 839.0h3.2v2.2h-3.2zM1009.2 839.0h3.2v2.2h-3.2zM1018.7 839.0h3.2v2.2h-3.2zM1028.2 839.0h3.2v2.2h-3.2zM1037.8 839.0h3.2v2.2h-3.2zM1047.3 839.0h3.2v2.2h-3.2zM1056.8 839.0h3.2v2.2h-3.2zM1066.3 839.0h3.2v2.2h-3.2zM1075.8 839.0h3.2v2.2h-3.2zM1085.3 839.0h3.2v2.2h-3.2zM1104.3 839.0h3.2v2.2h-3.2zM1132.9 839.0h3.2v2.2h-3.2zM904.6 848.5h3.2v2.2h-3.2zM923.6 848.5h3.2v2.2h-3.2zM933.1 848.5h3.2v2.2h-3.2zM942.7 848.5h3.2v2.2h-3.2zM952.2 848.5h3.2v2.2h-3.2zM961.7 848.5h3.2v2.2h-3.2zM971.2 848.5h3.2v2.2h-3.2zM980.7 848.5h3.2v2.2h-3.2zM990.2 848.5h3.2v2.2h-3.2zM999.7 848.5h3.2v2.2h-3.2zM1009.2 848.5h3.2v2.2h-3.2zM1018.7 848.5h3.2v2.2h-3.2zM1028.2 848.5h3.2v2.2h-3.2zM1037.8 848.5h3.2v2.2h-3.2zM1047.3 848.5h3.2v2.2h-3.2zM1056.8 848.5h3.2v2.2h-3.2zM1075.8 848.5h3.2v2.2h-3.2zM1104.3 848.5h3.2v2.2h-3.2zM923.6 858.1h3.2v2.2h-3.2zM933.1 858.1h3.2v2.2h-3.2zM942.7 858.1h3.2v2.2h-3.2zM952.2 858.1h3.2v2.2h-3.2zM961.7 858.1h3.2v2.2h-3.2zM980.7 858.1h3.2v2.2h-3.2zM990.2 858.1h3.2v2.2h-3.2zM999.7 858.1h3.2v2.2h-3.2zM1009.2 858.1h3.2v2.2h-3.2zM1018.7 858.1h3.2v2.2h-3.2zM1028.2 858.1h3.2v2.2h-3.2zM1037.8 858.1h3.2v2.2h-3.2zM1047.3 858.1h3.2v2.2h-3.2zM1056.8 858.1h3.2v2.2h-3.2zM1066.3 858.1h3.2v2.2h-3.2zM1075.8 858.1h3.2v2.2h-3.2zM1104.3 858.1h3.2v2.2h-3.2zM1113.8 858.1h3.2v2.2h-3.2zM885.6 867.6h3.2v2.2h-3.2zM904.6 867.6h3.2v2.2h-3.2zM914.1 867.6h3.2v2.2h-3.2zM923.6 867.6h3.2v2.2h-3.2zM961.7 867.6h3.2v2.2h-3.2zM990.2 867.6h3.2v2.2h-3.2zM999.7 867.6h3.2v2.2h-3.2zM1009.2 867.6h3.2v2.2h-3.2zM1018.7 867.6h3.2v2.2h-3.2zM1028.2 867.6h3.2v2.2h-3.2zM1037.8 867.6h3.2v2.2h-3.2zM1047.3 867.6h3.2v2.2h-3.2zM1066.3 867.6h3.2v2.2h-3.2zM1075.8 867.6h3.2v2.2h-3.2zM1085.3 867.6h3.2v2.2h-3.2zM1104.3 867.6h3.2v2.2h-3.2zM1113.8 867.6h3.2v2.2h-3.2zM1123.3 867.6h3.2v2.2h-3.2zM1132.9 867.6h3.2v2.2h-3.2zM1142.4 867.6h3.2v2.2h-3.2zM885.6 877.1h3.2v2.2h-3.2zM895.1 877.1h3.2v2.2h-3.2zM904.6 877.1h3.2v2.2h-3.2zM914.1 877.1h3.2v2.2h-3.2zM923.6 877.1h3.2v2.2h-3.2zM933.1 877.1h3.2v2.2h-3.2zM961.7 877.1h3.2v2.2h-3.2zM990.2 877.1h3.2v2.2h-3.2zM999.7 877.1h3.2v2.2h-3.2zM1009.2 877.1h3.2v2.2h-3.2zM1018.7 877.1h3.2v2.2h-3.2zM1028.2 877.1h3.2v2.2h-3.2zM1037.8 877.1h3.2v2.2h-3.2zM1047.3 877.1h3.2v2.2h-3.2zM1056.8 877.1h3.2v2.2h-3.2zM1066.3 877.1h3.2v2.2h-3.2zM1075.8 877.1h3.2v2.2h-3.2zM1094.8 877.1h3.2v2.2h-3.2zM1104.3 877.1h3.2v2.2h-3.2zM1123.3 877.1h3.2v2.2h-3.2zM1132.9 877.1h3.2v2.2h-3.2zM1142.4 877.1h3.2v2.2h-3.2zM1161.4 877.1h3.2v2.2h-3.2zM1170.9 877.1h3.2v2.2h-3.2zM1180.4 877.1h3.2v2.2h-3.2zM1189.9 877.1h3.2v2.2h-3.2zM914.1 886.6h3.2v2.2h-3.2zM961.7 886.6h3.2v2.2h-3.2zM971.2 886.6h3.2v2.2h-3.2zM990.2 886.6h3.2v2.2h-3.2zM999.7 886.6h3.2v2.2h-3.2zM1009.2 886.6h3.2v2.2h-3.2zM1018.7 886.6h3.2v2.2h-3.2zM1028.2 886.6h3.2v2.2h-3.2zM1037.8 886.6h3.2v2.2h-3.2zM1047.3 886.6h3.2v2.2h-3.2zM1066.3 886.6h3.2v2.2h-3.2zM1075.8 886.6h3.2v2.2h-3.2zM1094.8 886.6h3.2v2.2h-3.2zM1104.3 886.6h3.2v2.2h-3.2zM1123.3 886.6h3.2v2.2h-3.2zM895.1 896.1h3.2v2.2h-3.2zM952.2 896.1h3.2v2.2h-3.2zM961.7 896.1h3.2v2.2h-3.2zM971.2 896.1h3.2v2.2h-3.2zM990.2 896.1h3.2v2.2h-3.2zM999.7 896.1h3.2v2.2h-3.2zM1009.2 896.1h3.2v2.2h-3.2zM1018.7 896.1h3.2v2.2h-3.2zM1028.2 896.1h3.2v2.2h-3.2zM1037.8 896.1h3.2v2.2h-3.2zM1047.3 896.1h3.2v2.2h-3.2zM1075.8 896.1h3.2v2.2h-3.2zM1104.3 896.1h3.2v2.2h-3.2zM1113.8 896.1h3.2v2.2h-3.2zM885.6 905.7h3.2v2.2h-3.2zM895.1 905.7h3.2v2.2h-3.2zM904.6 905.7h3.2v2.2h-3.2zM914.1 905.7h3.2v2.2h-3.2zM923.6 905.7h3.2v2.2h-3.2zM933.1 905.7h3.2v2.2h-3.2zM942.7 905.7h3.2v2.2h-3.2zM952.2 905.7h3.2v2.2h-3.2zM961.7 905.7h3.2v2.2h-3.2zM971.2 905.7h3.2v2.2h-3.2zM980.7 905.7h3.2v2.2h-3.2zM990.2 905.7h3.2v2.2h-3.2zM1018.7 905.7h3.2v2.2h-3.2zM1047.3 905.7h3.2v2.2h-3.2zM1075.8 905.7h3.2v2.2h-3.2zM1094.8 905.7h3.2v2.2h-3.2zM1104.3 905.7h3.2v2.2h-3.2zM1113.8 905.7h3.2v2.2h-3.2zM1123.3 905.7h3.2v2.2h-3.2zM1132.9 905.7h3.2v2.2h-3.2zM1142.4 905.7h3.2v2.2h-3.2zM1151.9 905.7h3.2v2.2h-3.2zM1161.4 905.7h3.2v2.2h-3.2zM1170.9 905.7h3.2v2.2h-3.2zM1180.4 905.7h3.2v2.2h-3.2zM1189.9 905.7h3.2v2.2h-3.2zM961.7 915.2h3.2v2.2h-3.2zM971.2 915.2h3.2v2.2h-3.2zM980.7 915.2h3.2v2.2h-3.2zM990.2 915.2h3.2v2.2h-3.2zM999.7 915.2h3.2v2.2h-3.2zM1009.2 915.2h3.2v2.2h-3.2zM1018.7 915.2h3.2v2.2h-3.2zM1028.2 915.2h3.2v2.2h-3.2zM1037.8 915.2h3.2v2.2h-3.2zM1047.3 915.2h3.2v2.2h-3.2zM1056.8 915.2h3.2v2.2h-3.2zM1066.3 915.2h3.2v2.2h-3.2zM1075.8 915.2h3.2v2.2h-3.2zM1085.3 915.2h3.2v2.2h-3.2zM1094.8 915.2h3.2v2.2h-3.2zM1104.3 915.2h3.2v2.2h-3.2zM885.6 924.7h3.2v2.2h-3.2zM895.1 924.7h3.2v2.2h-3.2zM971.2 924.7h3.2v2.2h-3.2zM1094.8 924.7h3.2v2.2h-3.2zM885.6 934.2h3.2v2.2h-3.2zM895.1 934.2h3.2v2.2h-3.2zM904.6 934.2h3.2v2.2h-3.2zM914.1 934.2h3.2v2.2h-3.2zM923.6 934.2h3.2v2.2h-3.2zM933.1 934.2h3.2v2.2h-3.2zM942.7 934.2h3.2v2.2h-3.2zM952.2 934.2h3.2v2.2h-3.2zM961.7 934.2h3.2v2.2h-3.2zM971.2 934.2h3.2v2.2h-3.2zM990.2 934.2h3.2v2.2h-3.2zM999.7 934.2h3.2v2.2h-3.2zM1009.2 934.2h3.2v2.2h-3.2zM1018.7 934.2h3.2v2.2h-3.2zM1028.2 934.2h3.2v2.2h-3.2zM1037.8 934.2h3.2v2.2h-3.2zM1047.3 934.2h3.2v2.2h-3.2zM1056.8 934.2h3.2v2.2h-3.2zM1066.3 934.2h3.2v2.2h-3.2zM1075.8 934.2h3.2v2.2h-3.2zM1094.8 934.2h3.2v2.2h-3.2zM1104.3 934.2h3.2v2.2h-3.2zM1113.8 934.2h3.2v2.2h-3.2zM1123.3 934.2h3.2v2.2h-3.2zM1132.9 934.2h3.2v2.2h-3.2zM1142.4 934.2h3.2v2.2h-3.2zM1151.9 934.2h3.2v2.2h-3.2zM1161.4 934.2h3.2v2.2h-3.2zM1170.9 934.2h3.2v2.2h-3.2zM1180.4 934.2h3.2v2.2h-3.2zM1189.9 934.2h3.2v2.2h-3.2zM914.1 943.7h3.2v2.2h-3.2zM942.7 943.7h3.2v2.2h-3.2zM952.2 943.7h3.2v2.2h-3.2zM971.2 943.7h3.2v2.2h-3.2zM990.2 943.7h3.2v2.2h-3.2zM1075.8 943.7h3.2v2.2h-3.2zM1094.8 943.7h3.2v2.2h-3.2zM1123.3 943.7h3.2v2.2h-3.2zM885.6 953.3h3.2v2.2h-3.2zM895.1 953.3h3.2v2.2h-3.2zM904.6 953.3h3.2v2.2h-3.2zM914.1 953.3h3.2v2.2h-3.2zM923.6 953.3h3.2v2.2h-3.2zM933.1 953.3h3.2v2.2h-3.2zM942.7 953.3h3.2v2.2h-3.2zM952.2 953.3h3.2v2.2h-3.2zM971.2 953.3h3.2v2.2h-3.2zM990.2 953.3h3.2v2.2h-3.2zM1075.8 953.3h3.2v2.2h-3.2zM1094.8 953.3h3.2v2.2h-3.2zM1113.8 953.3h3.2v2.2h-3.2zM1180.4 953.3h3.2v2.2h-3.2zM885.6 962.8h3.2v2.2h-3.2zM895.1 962.8h3.2v2.2h-3.2zM904.6 962.8h3.2v2.2h-3.2zM914.1 962.8h3.2v2.2h-3.2zM923.6 962.8h3.2v2.2h-3.2zM933.1 962.8h3.2v2.2h-3.2zM942.7 962.8h3.2v2.2h-3.2zM952.2 962.8h3.2v2.2h-3.2zM961.7 962.8h3.2v2.2h-3.2zM971.2 962.8h3.2v2.2h-3.2zM990.2 962.8h3.2v2.2h-3.2zM1018.7 962.8h3.2v2.2h-3.2zM1028.2 962.8h3.2v2.2h-3.2zM1037.8 962.8h3.2v2.2h-3.2zM1047.3 962.8h3.2v2.2h-3.2zM1056.8 962.8h3.2v2.2h-3.2zM1066.3 962.8h3.2v2.2h-3.2zM1075.8 962.8h3.2v2.2h-3.2zM1094.8 962.8h3.2v2.2h-3.2zM1104.3 962.8h3.2v2.2h-3.2zM1113.8 962.8h3.2v2.2h-3.2zM1123.3 962.8h3.2v2.2h-3.2zM1132.9 962.8h3.2v2.2h-3.2zM1142.4 962.8h3.2v2.2h-3.2zM1151.9 962.8h3.2v2.2h-3.2zM1161.4 962.8h3.2v2.2h-3.2zM1170.9 962.8h3.2v2.2h-3.2zM1180.4 962.8h3.2v2.2h-3.2zM1189.9 962.8h3.2v2.2h-3.2zM904.6 972.3h3.2v2.2h-3.2zM914.1 972.3h3.2v2.2h-3.2zM942.7 972.3h3.2v2.2h-3.2zM971.2 972.3h3.2v2.2h-3.2zM990.2 972.3h3.2v2.2h-3.2zM1018.7 972.3h3.2v2.2h-3.2zM1028.2 972.3h3.2v2.2h-3.2zM1037.8 972.3h3.2v2.2h-3.2zM1047.3 972.3h3.2v2.2h-3.2zM1056.8 972.3h3.2v2.2h-3.2zM1066.3 972.3h3.2v2.2h-3.2zM1075.8 972.3h3.2v2.2h-3.2zM1094.8 972.3h3.2v2.2h-3.2zM885.6 981.8h3.2v2.2h-3.2zM895.1 981.8h3.2v2.2h-3.2zM904.6 981.8h3.2v2.2h-3.2zM914.1 981.8h3.2v2.2h-3.2zM923.6 981.8h3.2v2.2h-3.2zM971.2 981.8h3.2v2.2h-3.2zM990.2 981.8h3.2v2.2h-3.2zM1018.7 981.8h3.2v2.2h-3.2zM1028.2 981.8h3.2v2.2h-3.2zM1075.8 981.8h3.2v2.2h-3.2zM1094.8 981.8h3.2v2.2h-3.2zM1189.9 981.8h3.2v2.2h-3.2zM885.6 991.3h3.2v2.2h-3.2zM895.1 991.3h3.2v2.2h-3.2zM904.6 991.3h3.2v2.2h-3.2zM914.1 991.3h3.2v2.2h-3.2zM923.6 991.3h3.2v2.2h-3.2zM933.1 991.3h3.2v2.2h-3.2zM952.2 991.3h3.2v2.2h-3.2zM961.7 991.3h3.2v2.2h-3.2zM971.2 991.3h3.2v2.2h-3.2zM990.2 991.3h3.2v2.2h-3.2zM1018.7 991.3h3.2v2.2h-3.2zM1028.2 991.3h3.2v2.2h-3.2zM1075.8 991.3h3.2v2.2h-3.2zM1094.8 991.3h3.2v2.2h-3.2zM1104.3 991.3h3.2v2.2h-3.2zM1113.8 991.3h3.2v2.2h-3.2zM1123.3 991.3h3.2v2.2h-3.2zM1132.9 991.3h3.2v2.2h-3.2zM1142.4 991.3h3.2v2.2h-3.2zM1151.9 991.3h3.2v2.2h-3.2zM1161.4 991.3h3.2v2.2h-3.2zM1170.9 991.3h3.2v2.2h-3.2zM1180.4 991.3h3.2v2.2h-3.2zM1189.9 991.3h3.2v2.2h-3.2zM885.6 1000.9h3.2v2.2h-3.2zM895.1 1000.9h3.2v2.2h-3.2zM904.6 1000.9h3.2v2.2h-3.2zM914.1 1000.9h3.2v2.2h-3.2zM923.6 1000.9h3.2v2.2h-3.2zM933.1 1000.9h3.2v2.2h-3.2zM961.7 1000.9h3.2v2.2h-3.2zM971.2 1000.9h3.2v2.2h-3.2zM990.2 1000.9h3.2v2.2h-3.2zM1018.7 1000.9h3.2v2.2h-3.2zM1028.2 1000.9h3.2v2.2h-3.2zM1075.8 1000.9h3.2v2.2h-3.2zM1094.8 1000.9h3.2v2.2h-3.2zM1113.8 1000.9h3.2v2.2h-3.2zM885.6 1010.4h3.2v2.2h-3.2zM895.1 1010.4h3.2v2.2h-3.2zM904.6 1010.4h3.2v2.2h-3.2zM914.1 1010.4h3.2v2.2h-3.2zM923.6 1010.4h3.2v2.2h-3.2zM971.2 1010.4h3.2v2.2h-3.2zM990.2 1010.4h3.2v2.2h-3.2zM1018.7 1010.4h3.2v2.2h-3.2zM1028.2 1010.4h3.2v2.2h-3.2zM1075.8 1010.4h3.2v2.2h-3.2zM1094.8 1010.4h3.2v2.2h-3.2zM1123.3 1010.4h3.2v2.2h-3.2zM885.6 1019.9h3.2v2.2h-3.2zM895.1 1019.9h3.2v2.2h-3.2zM904.6 1019.9h3.2v2.2h-3.2zM914.1 1019.9h3.2v2.2h-3.2zM923.6 1019.9h3.2v2.2h-3.2zM933.1 1019.9h3.2v2.2h-3.2zM942.7 1019.9h3.2v2.2h-3.2zM952.2 1019.9h3.2v2.2h-3.2zM961.7 1019.9h3.2v2.2h-3.2zM971.2 1019.9h3.2v2.2h-3.2zM990.2 1019.9h3.2v2.2h-3.2zM1018.7 1019.9h3.2v2.2h-3.2zM1028.2 1019.9h3.2v2.2h-3.2zM1075.8 1019.9h3.2v2.2h-3.2zM1094.8 1019.9h3.2v2.2h-3.2zM1104.3 1019.9h3.2v2.2h-3.2zM1113.8 1019.9h3.2v2.2h-3.2zM1123.3 1019.9h3.2v2.2h-3.2zM1132.9 1019.9h3.2v2.2h-3.2zM1142.4 1019.9h3.2v2.2h-3.2zM1151.9 1019.9h3.2v2.2h-3.2zM1161.4 1019.9h3.2v2.2h-3.2zM1170.9 1019.9h3.2v2.2h-3.2zM1180.4 1019.9h3.2v2.2h-3.2zM1189.9 1019.9h3.2v2.2h-3.2zM885.6 1029.4h3.2v2.2h-3.2zM895.1 1029.4h3.2v2.2h-3.2zM904.6 1029.4h3.2v2.2h-3.2zM914.1 1029.4h3.2v2.2h-3.2zM971.2 1029.4h3.2v2.2h-3.2zM990.2 1029.4h3.2v2.2h-3.2zM1018.7 1029.4h3.2v2.2h-3.2zM1028.2 1029.4h3.2v2.2h-3.2zM1075.8 1029.4h3.2v2.2h-3.2zM1094.8 1029.4h3.2v2.2h-3.2zM904.6 1038.9h3.2v2.2h-3.2zM961.7 1038.9h3.2v2.2h-3.2zM971.2 1038.9h3.2v2.2h-3.2zM980.7 1038.9h3.2v2.2h-3.2zM990.2 1038.9h3.2v2.2h-3.2zM999.7 1038.9h3.2v2.2h-3.2zM1009.2 1038.9h3.2v2.2h-3.2zM1018.7 1038.9h3.2v2.2h-3.2zM1028.2 1038.9h3.2v2.2h-3.2zM1037.8 1038.9h3.2v2.2h-3.2zM1047.3 1038.9h3.2v2.2h-3.2zM1056.8 1038.9h3.2v2.2h-3.2zM1066.3 1038.9h3.2v2.2h-3.2zM1075.8 1038.9h3.2v2.2h-3.2zM1085.3 1038.9h3.2v2.2h-3.2zM1094.8 1038.9h3.2v2.2h-3.2zM1104.3 1038.9h3.2v2.2h-3.2zM885.6 1048.5h3.2v2.2h-3.2zM895.1 1048.5h3.2v2.2h-3.2zM904.6 1048.5h3.2v2.2h-3.2zM914.1 1048.5h3.2v2.2h-3.2zM923.6 1048.5h3.2v2.2h-3.2zM933.1 1048.5h3.2v2.2h-3.2zM942.7 1048.5h3.2v2.2h-3.2zM952.2 1048.5h3.2v2.2h-3.2zM961.7 1048.5h3.2v2.2h-3.2zM971.2 1048.5h3.2v2.2h-3.2zM990.2 1048.5h3.2v2.2h-3.2zM1018.7 1048.5h3.2v2.2h-3.2zM1028.2 1048.5h3.2v2.2h-3.2zM1075.8 1048.5h3.2v2.2h-3.2zM1094.8 1048.5h3.2v2.2h-3.2zM1104.3 1048.5h3.2v2.2h-3.2zM1113.8 1048.5h3.2v2.2h-3.2zM1123.3 1048.5h3.2v2.2h-3.2zM1132.9 1048.5h3.2v2.2h-3.2zM1142.4 1048.5h3.2v2.2h-3.2zM1151.9 1048.5h3.2v2.2h-3.2zM1161.4 1048.5h3.2v2.2h-3.2zM1170.9 1048.5h3.2v2.2h-3.2zM1180.4 1048.5h3.2v2.2h-3.2zM1189.9 1048.5h3.2v2.2h-3.2zM885.6 1058.0h3.2v2.2h-3.2zM895.1 1058.0h3.2v2.2h-3.2zM952.2 1058.0h3.2v2.2h-3.2zM961.7 1058.0h3.2v2.2h-3.2zM990.2 1058.0h3.2v2.2h-3.2zM1018.7 1058.0h3.2v2.2h-3.2zM1075.8 1058.0h3.2v2.2h-3.2zM1104.3 1058.0h3.2v2.2h-3.2zM1113.8 1058.0h3.2v2.2h-3.2zM1123.3 1058.0h3.2v2.2h-3.2zM885.6 1067.5h3.2v2.2h-3.2zM895.1 1067.5h3.2v2.2h-3.2zM961.7 1067.5h3.2v2.2h-3.2zM971.2 1067.5h3.2v2.2h-3.2zM980.7 1067.5h3.2v2.2h-3.2zM990.2 1067.5h3.2v2.2h-3.2zM1018.7 1067.5h3.2v2.2h-3.2zM1075.8 1067.5h3.2v2.2h-3.2zM1094.8 1067.5h3.2v2.2h-3.2zM1104.3 1067.5h3.2v2.2h-3.2zM1113.8 1067.5h3.2v2.2h-3.2zM1123.3 1067.5h3.2v2.2h-3.2zM885.6 1077.0h3.2v2.2h-3.2zM895.1 1077.0h3.2v2.2h-3.2zM904.6 1077.0h3.2v2.2h-3.2zM914.1 1077.0h3.2v2.2h-3.2zM923.6 1077.0h3.2v2.2h-3.2zM933.1 1077.0h3.2v2.2h-3.2zM942.7 1077.0h3.2v2.2h-3.2zM961.7 1077.0h3.2v2.2h-3.2zM971.2 1077.0h3.2v2.2h-3.2zM990.2 1077.0h3.2v2.2h-3.2zM1018.7 1077.0h3.2v2.2h-3.2zM1028.2 1077.0h3.2v2.2h-3.2zM1066.3 1077.0h3.2v2.2h-3.2zM1075.8 1077.0h3.2v2.2h-3.2zM1094.8 1077.0h3.2v2.2h-3.2zM1104.3 1077.0h3.2v2.2h-3.2zM1123.3 1077.0h3.2v2.2h-3.2zM1132.9 1077.0h3.2v2.2h-3.2zM1142.4 1077.0h3.2v2.2h-3.2zM1151.9 1077.0h3.2v2.2h-3.2zM1161.4 1077.0h3.2v2.2h-3.2zM1170.9 1077.0h3.2v2.2h-3.2zM1180.4 1077.0h3.2v2.2h-3.2zM1189.9 1077.0h3.2v2.2h-3.2zM885.6 1086.5h3.2v2.2h-3.2zM895.1 1086.5h3.2v2.2h-3.2zM904.6 1086.5h3.2v2.2h-3.2zM914.1 1086.5h3.2v2.2h-3.2zM923.6 1086.5h3.2v2.2h-3.2zM933.1 1086.5h3.2v2.2h-3.2zM942.7 1086.5h3.2v2.2h-3.2zM961.7 1086.5h3.2v2.2h-3.2zM990.2 1086.5h3.2v2.2h-3.2zM1018.7 1086.5h3.2v2.2h-3.2zM1056.8 1086.5h3.2v2.2h-3.2zM1075.8 1086.5h3.2v2.2h-3.2zM1085.3 1086.5h3.2v2.2h-3.2zM1094.8 1086.5h3.2v2.2h-3.2zM1104.3 1086.5h3.2v2.2h-3.2zM1123.3 1086.5h3.2v2.2h-3.2zM1132.9 1086.5h3.2v2.2h-3.2zM1142.4 1086.5h3.2v2.2h-3.2zM895.1 1096.1h3.2v2.2h-3.2zM914.1 1096.1h3.2v2.2h-3.2zM942.7 1096.1h3.2v2.2h-3.2zM961.7 1096.1h3.2v2.2h-3.2zM971.2 1096.1h3.2v2.2h-3.2zM990.2 1096.1h3.2v2.2h-3.2zM1018.7 1096.1h3.2v2.2h-3.2zM1028.2 1096.1h3.2v2.2h-3.2zM1047.3 1096.1h3.2v2.2h-3.2zM1066.3 1096.1h3.2v2.2h-3.2zM1075.8 1096.1h3.2v2.2h-3.2zM1085.3 1096.1h3.2v2.2h-3.2zM1094.8 1096.1h3.2v2.2h-3.2zM1104.3 1096.1h3.2v2.2h-3.2zM1142.4 1096.1h3.2v2.2h-3.2zM933.1 1105.6h3.2v2.2h-3.2zM952.2 1105.6h3.2v2.2h-3.2zM961.7 1105.6h3.2v2.2h-3.2zM990.2 1105.6h3.2v2.2h-3.2zM1018.7 1105.6h3.2v2.2h-3.2zM1075.8 1105.6h3.2v2.2h-3.2zM1085.3 1105.6h3.2v2.2h-3.2zM1104.3 1105.6h3.2v2.2h-3.2zM1132.9 1105.6h3.2v2.2h-3.2zM1161.4 1105.6h3.2v2.2h-3.2zM914.1 1115.1h3.2v2.2h-3.2zM942.7 1115.1h3.2v2.2h-3.2zM961.7 1115.1h3.2v2.2h-3.2zM990.2 1115.1h3.2v2.2h-3.2zM1018.7 1115.1h3.2v2.2h-3.2zM1047.3 1115.1h3.2v2.2h-3.2zM1056.8 1115.1h3.2v2.2h-3.2zM1066.3 1115.1h3.2v2.2h-3.2zM1075.8 1115.1h3.2v2.2h-3.2zM1104.3 1115.1h3.2v2.2h-3.2zM1132.9 1115.1h3.2v2.2h-3.2zM923.6 1124.6h3.2v2.2h-3.2zM933.1 1124.6h3.2v2.2h-3.2zM961.7 1124.6h3.2v2.2h-3.2zM1018.7 1124.6h3.2v2.2h-3.2zM1047.3 1124.6h3.2v2.2h-3.2zM1075.8 1124.6h3.2v2.2h-3.2zM1104.3 1124.6h3.2v2.2h-3.2zM1132.9 1124.6h3.2v2.2h-3.2zM1161.4 1124.6h3.2v2.2h-3.2zM1189.9 1124.6h3.2v2.2h-3.2zM885.6 1134.1h3.2v2.2h-3.2zM904.6 1134.1h3.2v2.2h-3.2zM933.1 1134.1h3.2v2.2h-3.2zM961.7 1134.1h3.2v2.2h-3.2zM990.2 1134.1h3.2v2.2h-3.2zM999.7 1134.1h3.2v2.2h-3.2zM1018.7 1134.1h3.2v2.2h-3.2zM1047.3 1134.1h3.2v2.2h-3.2zM1056.8 1134.1h3.2v2.2h-3.2zM1075.8 1134.1h3.2v2.2h-3.2zM1104.3 1134.1h3.2v2.2h-3.2zM1132.9 1134.1h3.2v2.2h-3.2zM1142.4 1134.1h3.2v2.2h-3.2zM1161.4 1134.1h3.2v2.2h-3.2zM1180.4 1134.1h3.2v2.2h-3.2zM1189.9 1134.1h3.2v2.2h-3.2z" fill="#147a58" opacity=".75"/>
<path d="M885.0 828.9h4.4v3.4h-4.4zM942.1 828.9h4.4v3.4h-4.4zM951.6 828.9h4.4v3.4h-4.4zM1065.7 828.9h4.4v3.4h-4.4zM1084.7 828.9h4.4v3.4h-4.4zM1094.2 828.9h4.4v3.4h-4.4zM1141.8 828.9h4.4v3.4h-4.4zM1151.3 828.9h4.4v3.4h-4.4zM1160.8 828.9h4.4v3.4h-4.4zM1170.3 828.9h4.4v3.4h-4.4zM1179.8 828.9h4.4v3.4h-4.4zM885.0 838.4h4.4v3.4h-4.4zM904.0 838.4h4.4v3.4h-4.4zM942.1 838.4h4.4v3.4h-4.4zM951.6 838.4h4.4v3.4h-4.4zM1094.2 838.4h4.4v3.4h-4.4zM1113.2 838.4h4.4v3.4h-4.4zM1122.8 838.4h4.4v3.4h-4.4zM1141.8 838.4h4.4v3.4h-4.4zM1151.3 838.4h4.4v3.4h-4.4zM1160.8 838.4h4.4v3.4h-4.4zM1170.3 838.4h4.4v3.4h-4.4zM1179.8 838.4h4.4v3.4h-4.4zM1189.3 838.4h4.4v3.4h-4.4zM885.0 847.9h4.4v3.4h-4.4zM894.5 847.9h4.4v3.4h-4.4zM913.5 847.9h4.4v3.4h-4.4zM1065.7 847.9h4.4v3.4h-4.4zM1084.7 847.9h4.4v3.4h-4.4zM1094.2 847.9h4.4v3.4h-4.4zM1113.2 847.9h4.4v3.4h-4.4zM1122.8 847.9h4.4v3.4h-4.4zM1132.3 847.9h4.4v3.4h-4.4zM1141.8 847.9h4.4v3.4h-4.4zM1151.3 847.9h4.4v3.4h-4.4zM1160.8 847.9h4.4v3.4h-4.4zM1170.3 847.9h4.4v3.4h-4.4zM1179.8 847.9h4.4v3.4h-4.4zM1189.3 847.9h4.4v3.4h-4.4zM885.0 857.5h4.4v3.4h-4.4zM894.5 857.5h4.4v3.4h-4.4zM904.0 857.5h4.4v3.4h-4.4zM913.5 857.5h4.4v3.4h-4.4zM970.6 857.5h4.4v3.4h-4.4zM1084.7 857.5h4.4v3.4h-4.4zM1094.2 857.5h4.4v3.4h-4.4zM1122.8 857.5h4.4v3.4h-4.4zM1132.3 857.5h4.4v3.4h-4.4zM1141.8 857.5h4.4v3.4h-4.4zM1151.3 857.5h4.4v3.4h-4.4zM1160.8 857.5h4.4v3.4h-4.4zM1170.3 857.5h4.4v3.4h-4.4zM1179.8 857.5h4.4v3.4h-4.4zM1189.3 857.5h4.4v3.4h-4.4zM894.5 867.0h4.4v3.4h-4.4zM932.5 867.0h4.4v3.4h-4.4zM942.1 867.0h4.4v3.4h-4.4zM951.6 867.0h4.4v3.4h-4.4zM970.6 867.0h4.4v3.4h-4.4zM980.1 867.0h4.4v3.4h-4.4zM1056.2 867.0h4.4v3.4h-4.4zM1094.2 867.0h4.4v3.4h-4.4zM1151.3 867.0h4.4v3.4h-4.4zM1160.8 867.0h4.4v3.4h-4.4zM1170.3 867.0h4.4v3.4h-4.4zM1179.8 867.0h4.4v3.4h-4.4zM1189.3 867.0h4.4v3.4h-4.4zM942.1 876.5h4.4v3.4h-4.4zM951.6 876.5h4.4v3.4h-4.4zM970.6 876.5h4.4v3.4h-4.4zM980.1 876.5h4.4v3.4h-4.4zM1084.7 876.5h4.4v3.4h-4.4zM1113.2 876.5h4.4v3.4h-4.4zM1151.3 876.5h4.4v3.4h-4.4zM885.0 886.0h4.4v3.4h-4.4zM894.5 886.0h4.4v3.4h-4.4zM904.0 886.0h4.4v3.4h-4.4zM923.0 886.0h4.4v3.4h-4.4zM932.5 886.0h4.4v3.4h-4.4zM942.1 886.0h4.4v3.4h-4.4zM951.6 886.0h4.4v3.4h-4.4zM980.1 886.0h4.4v3.4h-4.4zM1056.2 886.0h4.4v3.4h-4.4zM1084.7 886.0h4.4v3.4h-4.4zM1113.2 886.0h4.4v3.4h-4.4zM1132.3 886.0h4.4v3.4h-4.4zM1141.8 886.0h4.4v3.4h-4.4zM1151.3 886.0h4.4v3.4h-4.4zM1160.8 886.0h4.4v3.4h-4.4zM1170.3 886.0h4.4v3.4h-4.4zM1179.8 886.0h4.4v3.4h-4.4zM1189.3 886.0h4.4v3.4h-4.4zM885.0 895.5h4.4v3.4h-4.4zM904.0 895.5h4.4v3.4h-4.4zM913.5 895.5h4.4v3.4h-4.4zM923.0 895.5h4.4v3.4h-4.4zM932.5 895.5h4.4v3.4h-4.4zM942.1 895.5h4.4v3.4h-4.4zM980.1 895.5h4.4v3.4h-4.4zM1056.2 895.5h4.4v3.4h-4.4zM1065.7 895.5h4.4v3.4h-4.4zM1084.7 895.5h4.4v3.4h-4.4zM1094.2 895.5h4.4v3.4h-4.4zM1122.8 895.5h4.4v3.4h-4.4zM1132.3 895.5h4.4v3.4h-4.4zM1141.8 895.5h4.4v3.4h-4.4zM1151.3 895.5h4.4v3.4h-4.4zM1160.8 895.5h4.4v3.4h-4.4zM1170.3 895.5h4.4v3.4h-4.4zM1179.8 895.5h4.4v3.4h-4.4zM1189.3 895.5h4.4v3.4h-4.4zM999.1 905.1h4.4v3.4h-4.4zM1008.6 905.1h4.4v3.4h-4.4zM1027.7 905.1h4.4v3.4h-4.4zM1037.2 905.1h4.4v3.4h-4.4zM1056.2 905.1h4.4v3.4h-4.4zM1065.7 905.1h4.4v3.4h-4.4zM1084.7 905.1h4.4v3.4h-4.4zM885.0 914.6h4.4v3.4h-4.4zM894.5 914.6h4.4v3.4h-4.4zM904.0 914.6h4.4v3.4h-4.4zM913.5 914.6h4.4v3.4h-4.4zM923.0 914.6h4.4v3.4h-4.4zM932.5 914.6h4.4v3.4h-4.4zM942.1 914.6h4.4v3.4h-4.4zM951.6 914.6h4.4v3.4h-4.4zM1113.2 914.6h4.4v3.4h-4.4zM1122.8 914.6h4.4v3.4h-4.4zM1132.3 914.6h4.4v3.4h-4.4zM1141.8 914.6h4.4v3.4h-4.4zM1151.3 914.6h4.4v3.4h-4.4zM1160.8 914.6h4.4v3.4h-4.4zM1170.3 914.6h4.4v3.4h-4.4zM1179.8 914.6h4.4v3.4h-4.4zM1189.3 914.6h4.4v3.4h-4.4zM904.0 924.1h4.4v3.4h-4.4zM913.5 924.1h4.4v3.4h-4.4zM923.0 924.1h4.4v3.4h-4.4zM932.5 924.1h4.4v3.4h-4.4zM942.1 924.1h4.4v3.4h-4.4zM951.6 924.1h4.4v3.4h-4.4zM961.1 924.1h4.4v3.4h-4.4zM980.1 924.1h4.4v3.4h-4.4zM989.6 924.1h4.4v3.4h-4.4zM999.1 924.1h4.4v3.4h-4.4zM1008.6 924.1h4.4v3.4h-4.4zM1018.1 924.1h4.4v3.4h-4.4zM1027.7 924.1h4.4v3.4h-4.4zM1037.2 924.1h4.4v3.4h-4.4zM1046.7 924.1h4.4v3.4h-4.4zM1056.2 924.1h4.4v3.4h-4.4zM1065.7 924.1h4.4v3.4h-4.4zM1075.2 924.1h4.4v3.4h-4.4zM1084.7 924.1h4.4v3.4h-4.4zM1103.7 924.1h4.4v3.4h-4.4zM1113.2 924.1h4.4v3.4h-4.4zM1122.8 924.1h4.4v3.4h-4.4zM1132.3 924.1h4.4v3.4h-4.4zM1141.8 924.1h4.4v3.4h-4.4zM1151.3 924.1h4.4v3.4h-4.4zM1160.8 924.1h4.4v3.4h-4.4zM1170.3 924.1h4.4v3.4h-4.4zM1179.8 924.1h4.4v3.4h-4.4zM1189.3 924.1h4.4v3.4h-4.4zM980.1 933.6h4.4v3.4h-4.4zM1084.7 933.6h4.4v3.4h-4.4zM885.0 943.1h4.4v3.4h-4.4zM894.5 943.1h4.4v3.4h-4.4zM904.0 943.1h4.4v3.4h-4.4zM923.0 943.1h4.4v3.4h-4.4zM932.5 943.1h4.4v3.4h-4.4zM961.1 943.1h4.4v3.4h-4.4zM980.1 943.1h4.4v3.4h-4.4zM999.1 943.1h4.4v3.4h-4.4zM1008.6 943.1h4.4v3.4h-4.4zM1018.1 943.1h4.4v3.4h-4.4zM1027.7 943.1h4.4v3.4h-4.4zM1037.2 943.1h4.4v3.4h-4.4zM1046.7 943.1h4.4v3.4h-4.4zM1056.2 943.1h4.4v3.4h-4.4zM1065.7 943.1h4.4v3.4h-4.4zM1084.7 943.1h4.4v3.4h-4.4zM1103.7 943.1h4.4v3.4h-4.4zM1113.2 943.1h4.4v3.4h-4.4zM1132.3 943.1h4.4v3.4h-4.4zM1141.8 943.1h4.4v3.4h-4.4zM1151.3 943.1h4.4v3.4h-4.4zM1160.8 943.1h4.4v3.4h-4.4zM1170.3 943.1h4.4v3.4h-4.4zM1179.8 943.1h4.4v3.4h-4.4zM1189.3 943.1h4.4v3.4h-4.4zM961.1 952.7h4.4v3.4h-4.4zM980.1 952.7h4.4v3.4h-4.4zM999.1 952.7h4.4v3.4h-4.4zM1008.6 952.7h4.4v3.4h-4.4zM1018.1 952.7h4.4v3.4h-4.4zM1027.7 952.7h4.4v3.4h-4.4zM1037.2 952.7h4.4v3.4h-4.4zM1046.7 952.7h4.4v3.4h-4.4zM1056.2 952.7h4.4v3.4h-4.4zM1065.7 952.7h4.4v3.4h-4.4zM1084.7 952.7h4.4v3.4h-4.4zM1103.7 952.7h4.4v3.4h-4.4zM1122.8 952.7h4.4v3.4h-4.4zM1132.3 952.7h4.4v3.4h-4.4zM1141.8 952.7h4.4v3.4h-4.4zM1151.3 952.7h4.4v3.4h-4.4zM1160.8 952.7h4.4v3.4h-4.4zM1170.3 952.7h4.4v3.4h-4.4zM1189.3 952.7h4.4v3.4h-4.4zM980.1 962.2h4.4v3.4h-4.4zM999.1 962.2h4.4v3.4h-4.4zM1008.6 962.2h4.4v3.4h-4.4zM1084.7 962.2h4.4v3.4h-4.4zM885.0 971.7h4.4v3.4h-4.4zM894.5 971.7h4.4v3.4h-4.4zM923.0 971.7h4.4v3.4h-4.4zM932.5 971.7h4.4v3.4h-4.4zM951.6 971.7h4.4v3.4h-4.4zM961.1 971.7h4.4v3.4h-4.4zM980.1 971.7h4.4v3.4h-4.4zM999.1 971.7h4.4v3.4h-4.4zM1008.6 971.7h4.4v3.4h-4.4zM1084.7 971.7h4.4v3.4h-4.4zM1103.7 971.7h4.4v3.4h-4.4zM1113.2 971.7h4.4v3.4h-4.4zM1122.8 971.7h4.4v3.4h-4.4zM1132.3 971.7h4.4v3.4h-4.4zM1141.8 971.7h4.4v3.4h-4.4zM1151.3 971.7h4.4v3.4h-4.4zM1160.8 971.7h4.4v3.4h-4.4zM1170.3 971.7h4.4v3.4h-4.4zM1179.8 971.7h4.4v3.4h-4.4zM1189.3 971.7h4.4v3.4h-4.4zM932.5 981.2h4.4v3.4h-4.4zM942.1 981.2h4.4v3.4h-4.4zM951.6 981.2h4.4v3.4h-4.4zM961.1 981.2h4.4v3.4h-4.4zM980.1 981.2h4.4v3.4h-4.4zM999.1 981.2h4.4v3.4h-4.4zM1008.6 981.2h4.4v3.4h-4.4zM1037.2 981.2h4.4v3.4h-4.4zM1046.7 981.2h4.4v3.4h-4.4zM1056.2 981.2h4.4v3.4h-4.4zM1065.7 981.2h4.4v3.4h-4.4zM1084.7 981.2h4.4v3.4h-4.4zM1103.7 981.2h4.4v3.4h-4.4zM1113.2 981.2h4.4v3.4h-4.4zM1122.8 981.2h4.4v3.4h-4.4zM1132.3 981.2h4.4v3.4h-4.4zM1141.8 981.2h4.4v3.4h-4.4zM1151.3 981.2h4.4v3.4h-4.4zM1160.8 981.2h4.4v3.4h-4.4zM1170.3 981.2h4.4v3.4h-4.4zM1179.8 981.2h4.4v3.4h-4.4zM942.1 990.7h4.4v3.4h-4.4zM980.1 990.7h4.4v3.4h-4.4zM999.1 990.7h4.4v3.4h-4.4zM1008.6 990.7h4.4v3.4h-4.4zM1037.2 990.7h4.4v3.4h-4.4zM1046.7 990.7h4.4v3.4h-4.4zM1056.2 990.7h4.4v3.4h-4.4zM1065.7 990.7h4.4v3.4h-4.4zM1084.7 990.7h4.4v3.4h-4.4zM942.1 1000.3h4.4v3.4h-4.4zM951.6 1000.3h4.4v3.4h-4.4zM980.1 1000.3h4.4v3.4h-4.4zM999.1 1000.3h4.4v3.4h-4.4zM1008.6 1000.3h4.4v3.4h-4.4zM1037.2 1000.3h4.4v3.4h-4.4zM1046.7 1000.3h4.4v3.4h-4.4zM1056.2 1000.3h4.4v3.4h-4.4zM1065.7 1000.3h4.4v3.4h-4.4zM1084.7 1000.3h4.4v3.4h-4.4zM1103.7 1000.3h4.4v3.4h-4.4zM1122.8 1000.3h4.4v3.4h-4.4zM1132.3 1000.3h4.4v3.4h-4.4zM1141.8 1000.3h4.4v3.4h-4.4zM1151.3 1000.3h4.4v3.4h-4.4zM1160.8 1000.3h4.4v3.4h-4.4zM1170.3 1000.3h4.4v3.4h-4.4zM1179.8 1000.3h4.4v3.4h-4.4zM1189.3 1000.3h4.4v3.4h-4.4zM932.5 1009.8h4.4v3.4h-4.4zM942.1 1009.8h4.4v3.4h-4.4zM951.6 1009.8h4.4v3.4h-4.4zM961.1 1009.8h4.4v3.4h-4.4zM980.1 1009.8h4.4v3.4h-4.4zM999.1 1009.8h4.4v3.4h-4.4zM1008.6 1009.8h4.4v3.4h-4.4zM1037.2 1009.8h4.4v3.4h-4.4zM1046.7 1009.8h4.4v3.4h-4.4zM1056.2 1009.8h4.4v3.4h-4.4zM1065.7 1009.8h4.4v3.4h-4.4zM1084.7 1009.8h4.4v3.4h-4.4zM1103.7 1009.8h4.4v3.4h-4.4zM1113.2 1009.8h4.4v3.4h-4.4zM1132.3 1009.8h4.4v3.4h-4.4zM1141.8 1009.8h4.4v3.4h-4.4zM1151.3 1009.8h4.4v3.4h-4.4zM1160.8 1009.8h4.4v3.4h-4.4zM1170.3 1009.8h4.4v3.4h-4.4zM1179.8 1009.8h4.4v3.4h-4.4zM1189.3 1009.8h4.4v3.4h-4.4zM980.1 1019.3h4.4v3.4h-4.4zM999.1 1019.3h4.4v3.4h-4.4zM1008.6 1019.3h4.4v3.4h-4.4zM1037.2 1019.3h4.4v3.4h-4.4zM1046.7 1019.3h4.4v3.4h-4.4zM1056.2 1019.3h4.4v3.4h-4.4zM1065.7 1019.3h4.4v3.4h-4.4zM1084.7 1019.3h4.4v3.4h-4.4zM923.0 1028.8h4.4v3.4h-4.4zM932.5 1028.8h4.4v3.4h-4.4zM942.1 1028.8h4.4v3.4h-4.4zM951.6 1028.8h4.4v3.4h-4.4zM961.1 1028.8h4.4v3.4h-4.4zM980.1 1028.8h4.4v3.4h-4.4zM999.1 1028.8h4.4v3.4h-4.4zM1008.6 1028.8h4.4v3.4h-4.4zM1037.2 1028.8h4.4v3.4h-4.4zM1046.7 1028.8h4.4v3.4h-4.4zM1056.2 1028.8h4.4v3.4h-4.4zM1065.7 1028.8h4.4v3.4h-4.4zM1084.7 1028.8h4.4v3.4h-4.4zM1103.7 1028.8h4.4v3.4h-4.4zM1113.2 1028.8h4.4v3.4h-4.4zM1122.8 1028.8h4.4v3.4h-4.4zM1132.3 1028.8h4.4v3.4h-4.4zM1141.8 1028.8h4.4v3.4h-4.4zM1151.3 1028.8h4.4v3.4h-4.4zM1160.8 1028.8h4.4v3.4h-4.4zM1170.3 1028.8h4.4v3.4h-4.4zM1179.8 1028.8h4.4v3.4h-4.4zM1189.3 1028.8h4.4v3.4h-4.4zM885.0 1038.3h4.4v3.4h-4.4zM894.5 1038.3h4.4v3.4h-4.4zM913.5 1038.3h4.4v3.4h-4.4zM923.0 1038.3h4.4v3.4h-4.4zM932.5 1038.3h4.4v3.4h-4.4zM942.1 1038.3h4.4v3.4h-4.4zM951.6 1038.3h4.4v3.4h-4.4zM1113.2 1038.3h4.4v3.4h-4.4zM1122.8 1038.3h4.4v3.4h-4.4zM1132.3 1038.3h4.4v3.4h-4.4zM1141.8 1038.3h4.4v3.4h-4.4zM1151.3 1038.3h4.4v3.4h-4.4zM1160.8 1038.3h4.4v3.4h-4.4zM1170.3 1038.3h4.4v3.4h-4.4zM1179.8 1038.3h4.4v3.4h-4.4zM1189.3 1038.3h4.4v3.4h-4.4zM980.1 1047.9h4.4v3.4h-4.4zM999.1 1047.9h4.4v3.4h-4.4zM1008.6 1047.9h4.4v3.4h-4.4zM1037.2 1047.9h4.4v3.4h-4.4zM1046.7 1047.9h4.4v3.4h-4.4zM1056.2 1047.9h4.4v3.4h-4.4zM1065.7 1047.9h4.4v3.4h-4.4zM1084.7 1047.9h4.4v3.4h-4.4zM904.0 1057.4h4.4v3.4h-4.4zM913.5 1057.4h4.4v3.4h-4.4zM923.0 1057.4h4.4v3.4h-4.4zM932.5 1057.4h4.4v3.4h-4.4zM942.1 1057.4h4.4v3.4h-4.4zM970.6 1057.4h4.4v3.4h-4.4zM980.1 1057.4h4.4v3.4h-4.4zM999.1 1057.4h4.4v3.4h-4.4zM1008.6 1057.4h4.4v3.4h-4.4zM1027.7 1057.4h4.4v3.4h-4.4zM1037.2 1057.4h4.4v3.4h-4.4zM1046.7 1057.4h4.4v3.4h-4.4zM1056.2 1057.4h4.4v3.4h-4.4zM1065.7 1057.4h4.4v3.4h-4.4zM1084.7 1057.4h4.4v3.4h-4.4zM1094.2 1057.4h4.4v3.4h-4.4zM1132.3 1057.4h4.4v3.4h-4.4zM1141.8 1057.4h4.4v3.4h-4.4zM1151.3 1057.4h4.4v3.4h-4.4zM1160.8 1057.4h4.4v3.4h-4.4zM1170.3 1057.4h4.4v3.4h-4.4zM1179.8 1057.4h4.4v3.4h-4.4zM1189.3 1057.4h4.4v3.4h-4.4zM904.0 1066.9h4.4v3.4h-4.4zM913.5 1066.9h4.4v3.4h-4.4zM923.0 1066.9h4.4v3.4h-4.4zM932.5 1066.9h4.4v3.4h-4.4zM942.1 1066.9h4.4v3.4h-4.4zM951.6 1066.9h4.4v3.4h-4.4zM999.1 1066.9h4.4v3.4h-4.4zM1008.6 1066.9h4.4v3.4h-4.4zM1027.7 1066.9h4.4v3.4h-4.4zM1037.2 1066.9h4.4v3.4h-4.4zM1046.7 1066.9h4.4v3.4h-4.4zM1056.2 1066.9h4.4v3.4h-4.4zM1065.7 1066.9h4.4v3.4h-4.4zM1084.7 1066.9h4.4v3.4h-4.4zM1132.3 1066.9h4.4v3.4h-4.4zM1141.8 1066.9h4.4v3.4h-4.4zM1151.3 1066.9h4.4v3.4h-4.4zM1160.8 1066.9h4.4v3.4h-4.4zM1170.3 1066.9h4.4v3.4h-4.4zM1179.8 1066.9h4.4v3.4h-4.4zM1189.3 1066.9h4.4v3.4h-4.4zM951.6 1076.4h4.4v3.4h-4.4zM980.1 1076.4h4.4v3.4h-4.4zM999.1 1076.4h4.4v3.4h-4.4zM1008.6 1076.4h4.4v3.4h-4.4zM1037.2 1076.4h4.4v3.4h-4.4zM1046.7 1076.4h4.4v3.4h-4.4zM1056.2 1076.4h4.4v3.4h-4.4zM1084.7 1076.4h4.4v3.4h-4.4zM1113.2 1076.4h4.4v3.4h-4.4zM951.6 1085.9h4.4v3.4h-4.4zM970.6 1085.9h4.4v3.4h-4.4zM980.1 1085.9h4.4v3.4h-4.4zM999.1 1085.9h4.4v3.4h-4.4zM1008.6 1085.9h4.4v3.4h-4.4zM1027.7 1085.9h4.4v3.4h-4.4zM1037.2 1085.9h4.4v3.4h-4.4zM1046.7 1085.9h4.4v3.4h-4.4zM1065.7 1085.9h4.4v3.4h-4.4zM1113.2 1085.9h4.4v3.4h-4.4zM1151.3 1085.9h4.4v3.4h-4.4zM1160.8 1085.9h4.4v3.4h-4.4zM1170.3 1085.9h4.4v3.4h-4.4zM1179.8 1085.9h4.4v3.4h-4.4zM1189.3 1085.9h4.4v3.4h-4.4zM885.0 1095.5h4.4v3.4h-4.4zM904.0 1095.5h4.4v3.4h-4.4zM923.0 1095.5h4.4v3.4h-4.4zM932.5 1095.5h4.4v3.4h-4.4zM951.6 1095.5h4.4v3.4h-4.4zM980.1 1095.5h4.4v3.4h-4.4zM999.1 1095.5h4.4v3.4h-4.4zM1008.6 1095.5h4.4v3.4h-4.4zM1037.2 1095.5h4.4v3.4h-4.4zM1056.2 1095.5h4.4v3.4h-4.4zM1113.2 1095.5h4.4v3.4h-4.4zM1122.8 1095.5h4.4v3.4h-4.4zM1132.3 1095.5h4.4v3.4h-4.4zM1151.3 1095.5h4.4v3.4h-4.4zM1160.8 1095.5h4.4v3.4h-4.4zM1170.3 1095.5h4.4v3.4h-4.4zM1179.8 1095.5h4.4v3.4h-4.4zM1189.3 1095.5h4.4v3.4h-4.4zM885.0 1105.0h4.4v3.4h-4.4zM894.5 1105.0h4.4v3.4h-4.4zM904.0 1105.0h4.4v3.4h-4.4zM913.5 1105.0h4.4v3.4h-4.4zM923.0 1105.0h4.4v3.4h-4.4zM942.1 1105.0h4.4v3.4h-4.4zM970.6 1105.0h4.4v3.4h-4.4zM980.1 1105.0h4.4v3.4h-4.4zM999.1 1105.0h4.4v3.4h-4.4zM1008.6 1105.0h4.4v3.4h-4.4zM1027.7 1105.0h4.4v3.4h-4.4zM1037.2 1105.0h4.4v3.4h-4.4zM1046.7 1105.0h4.4v3.4h-4.4zM1056.2 1105.0h4.4v3.4h-4.4zM1065.7 1105.0h4.4v3.4h-4.4zM1094.2 1105.0h4.4v3.4h-4.4zM1113.2 1105.0h4.4v3.4h-4.4zM1122.8 1105.0h4.4v3.4h-4.4zM1141.8 1105.0h4.4v3.4h-4.4zM1151.3 1105.0h4.4v3.4h-4.4zM1170.3 1105.0h4.4v3.4h-4.4zM1179.8 1105.0h4.4v3.4h-4.4zM1189.3 1105.0h4.4v3.4h-4.4zM885.0 1114.5h4.4v3.4h-4.4zM894.5 1114.5h4.4v3.4h-4.4zM904.0 1114.5h4.4v3.4h-4.4zM923.0 1114.5h4.4v3.4h-4.4zM932.5 1114.5h4.4v3.4h-4.4zM951.6 1114.5h4.4v3.4h-4.4zM970.6 1114.5h4.4v3.4h-4.4zM980.1 1114.5h4.4v3.4h-4.4zM999.1 1114.5h4.4v3.4h-4.4zM1008.6 1114.5h4.4v3.4h-4.4zM1027.7 1114.5h4.4v3.4h-4.4zM1037.2 1114.5h4.4v3.4h-4.4zM1084.7 1114.5h4.4v3.4h-4.4zM1094.2 1114.5h4.4v3.4h-4.4zM1113.2 1114.5h4.4v3.4h-4.4zM1122.8 1114.5h4.4v3.4h-4.4zM1141.8 1114.5h4.4v3.4h-4.4zM1151.3 1114.5h4.4v3.4h-4.4zM1160.8 1114.5h4.4v3.4h-4.4zM1170.3 1114.5h4.4v3.4h-4.4zM1179.8 1114.5h4.4v3.4h-4.4zM1189.3 1114.5h4.4v3.4h-4.4zM885.0 1124.0h4.4v3.4h-4.4zM894.5 1124.0h4.4v3.4h-4.4zM904.0 1124.0h4.4v3.4h-4.4zM913.5 1124.0h4.4v3.4h-4.4zM942.1 1124.0h4.4v3.4h-4.4zM951.6 1124.0h4.4v3.4h-4.4zM970.6 1124.0h4.4v3.4h-4.4zM980.1 1124.0h4.4v3.4h-4.4zM989.6 1124.0h4.4v3.4h-4.4zM999.1 1124.0h4.4v3.4h-4.4zM1008.6 1124.0h4.4v3.4h-4.4zM1027.7 1124.0h4.4v3.4h-4.4zM1037.2 1124.0h4.4v3.4h-4.4zM1056.2 1124.0h4.4v3.4h-4.4zM1065.7 1124.0h4.4v3.4h-4.4zM1084.7 1124.0h4.4v3.4h-4.4zM1094.2 1124.0h4.4v3.4h-4.4zM1113.2 1124.0h4.4v3.4h-4.4zM1122.8 1124.0h4.4v3.4h-4.4zM1141.8 1124.0h4.4v3.4h-4.4zM1151.3 1124.0h4.4v3.4h-4.4zM1170.3 1124.0h4.4v3.4h-4.4zM1179.8 1124.0h4.4v3.4h-4.4zM894.5 1133.5h4.4v3.4h-4.4zM913.5 1133.5h4.4v3.4h-4.4zM923.0 1133.5h4.4v3.4h-4.4zM942.1 1133.5h4.4v3.4h-4.4zM951.6 1133.5h4.4v3.4h-4.4zM970.6 1133.5h4.4v3.4h-4.4zM980.1 1133.5h4.4v3.4h-4.4zM1008.6 1133.5h4.4v3.4h-4.4zM1027.7 1133.5h4.4v3.4h-4.4zM1037.2 1133.5h4.4v3.4h-4.4zM1065.7 1133.5h4.4v3.4h-4.4zM1084.7 1133.5h4.4v3.4h-4.4zM1094.2 1133.5h4.4v3.4h-4.4zM1113.2 1133.5h4.4v3.4h-4.4zM1122.8 1133.5h4.4v3.4h-4.4zM1151.3 1133.5h4.4v3.4h-4.4zM1170.3 1133.5h4.4v3.4h-4.4z" fill="#d0d44a"/>
<path d="M912.1 833.4 L912.1 865.3 L923.8 873.8" fill="none" stroke="#034a20" stroke-width="4.42" stroke-linejoin="round"/>
<path d="M974.8 833.4 L974.8 895.0" fill="none" stroke="#034a20" stroke-width="4.68" stroke-linejoin="round"/>
<path d="M996.0 833.4 L996.0 880.1 L987.5 895.0" fill="none" stroke="#034a20" stroke-width="4.68" stroke-linejoin="round"/>
<path d="M923.8 841.9 L923.8 899.3" fill="none" stroke="#034a20" stroke-width="3.90" stroke-linejoin="round"/>
<path d="M896.1 950.3 L953.5 950.3" fill="none" stroke="#034a20" stroke-width="3.90" stroke-linejoin="round"/>
<path d="M885.5 971.5 L902.5 973.6 L915.3 980.0 L932.3 980.0" fill="none" stroke="#034a20" stroke-width="5.20" stroke-linejoin="round"/>
<path d="M938.6 994.9 L945.0 990.6" fill="none" stroke="#034a20" stroke-width="4.42" stroke-linejoin="round"/>
<path d="M904.6 1005.5 L904.6 1045.9" fill="none" stroke="#034a20" stroke-width="4.42" stroke-linejoin="round"/>
<path d="M1112.9 863.1 L1123.5 867.4 L1134.1 863.1 L1142.6 852.5" fill="none" stroke="#034a20" stroke-width="4.42" stroke-linejoin="round"/>
<path d="M1153.3 967.3 L1161.8 971.5 L1172.4 965.1 L1191.5 965.1" fill="none" stroke="#034a20" stroke-width="4.42" stroke-linejoin="round"/>
<path d="M1142.6 994.9 L1178.8 990.6" fill="none" stroke="#034a20" stroke-width="3.90" stroke-linejoin="round"/>
<path d="M1134.1 1048.0 L1136.3 1075.6 L1153.3 1084.1 L1191.5 1084.1" fill="none" stroke="#034a20" stroke-width="3.90" stroke-linejoin="round"/>
<path d="M1142.6 1056.5 L1149.0 1071.4 L1191.5 1071.4" fill="none" stroke="#034a20" stroke-width="3.90" stroke-linejoin="round"/>
<path d="M1104.4 912.0 L1081.0 916.3 L979.0 916.3 L970.5 924.8 L970.5 1033.1 L979.0 1039.5" fill="none" stroke="#034a20" stroke-width="4.16" stroke-linejoin="round"/>
<path d="M990.7 935.4 L990.7 1028.9" fill="none" stroke="#034a20" stroke-width="3.90" stroke-linejoin="round"/>
<path d="M1020.4 958.8 L1020.4 1107.5" fill="none" stroke="#034a20" stroke-width="3.38" stroke-linejoin="round"/>
<path d="M1051.3 994.9 L1051.3 1096.9" fill="none" stroke="#034a20" stroke-width="3.12" stroke-linejoin="round"/>
<path d="M1062.9 994.9 L1062.9 1096.9" fill="none" stroke="#034a20" stroke-width="3.12" stroke-linejoin="round"/>
<path d="M1098.0 916.3 L1098.0 1033.1" fill="none" stroke="#034a20" stroke-width="3.90" stroke-linejoin="round"/>
<path d="M1072.5 958.8 L1072.5 1022.5" fill="none" stroke="#034a20" stroke-width="3.12" stroke-linejoin="round"/>
<rect x="879.1" y="823.8" width="317.8" height="315.6" rx="1" fill="none" stroke="#f3f7f3" stroke-width="2.2"/>
<rect x="1180.0" y="819.5" width="19.0" height="5.5" fill="#f6f9f6"/>
<rect x="1369.0" y="762.0" width="130.0" height="201.0" fill="url(#mem)"/>
<rect x="1417.0" y="761.0" width="27.0" height="202.0" fill="#036531"/>
<rect x="1368.0" y="851.0" width="131.0" height="14.0" fill="#036531"/>
<rect x="1417.0" y="865.0" width="31.0" height="98.0" fill="#04602c"/>
<rect x="1365.0" y="758.0" width="137.0" height="208.0" rx="1" fill="none" stroke="#eef4ee" stroke-width="2"/>
<rect x="1364.0" y="754.5" width="22.0" height="4.5" fill="#f6f9f6"/>
<rect x="1369.0" y="1003.0" width="130.0" height="200.0" fill="url(#mem)"/>
<rect x="1417.0" y="1002.0" width="27.0" height="201.0" fill="#036531"/>
<rect x="1368.0" y="1092.0" width="131.0" height="14.0" fill="#036531"/>
<rect x="1417.0" y="1106.0" width="31.0" height="97.0" fill="#04602c"/>
<rect x="1365.0" y="999.0" width="137.0" height="207.0" rx="1" fill="none" stroke="#eef4ee" stroke-width="2"/>
<rect x="1364.0" y="995.5" width="22.0" height="4.5" fill="#f6f9f6"/>
<path d="M1378 906 Q1420 905 1450 930 L1470 950" fill="none" stroke="#034a20" stroke-width="6.50" stroke-linejoin="round"/>
<rect x="708.2" y="501.2" width="215.6" height="43.2" rx="1" fill="none" stroke="#eef4ee" stroke-width="2.4"/>
<path d="M720 507 H912" stroke="#f4d93a" stroke-width="3" stroke-dasharray="3.2 2.2" fill="none"/>
<path d="M720 541 H912" stroke="#f4d93a" stroke-width="3" stroke-dasharray="3.2 2.2" fill="none"/>
<rect x="704.0" y="498.0" width="18.0" height="5.0" fill="#f6f9f6"/>
<path d="M728 510 V538" fill="none" stroke="#034a20" stroke-width="2.34" stroke-linejoin="round"/>
<path d="M736 510 V538" fill="none" stroke="#034a20" stroke-width="2.34" stroke-linejoin="round"/>
<path d="M744 510 V538" fill="none" stroke="#034a20" stroke-width="2.34" stroke-linejoin="round"/>
<path d="M752 510 V538" fill="none" stroke="#034a20" stroke-width="2.34" stroke-linejoin="round"/>
<path d="M760 510 V538" fill="none" stroke="#034a20" stroke-width="2.34" stroke-linejoin="round"/>
<path d="M768 510 V538" fill="none" stroke="#034a20" stroke-width="2.34" stroke-linejoin="round"/>
<path d="M780 532 Q800 520 830 520 H880 L895 510" fill="none" stroke="#034a20" stroke-width="2.60" stroke-linejoin="round"/>
<path d="M790 538 Q805 528 830 528 H870" fill="none" stroke="#034a20" stroke-width="2.60" stroke-linejoin="round"/>
<rect x="921.2" y="300.2" width="137.6" height="32.6" rx="1" fill="none" stroke="#eef4ee" stroke-width="2.4"/>
<path d="M932 303.5 H1058" stroke="#f4d93a" stroke-width="3" stroke-dasharray="3.2 2.2" fill="none"/>
<path d="M932 328.5 H1058" stroke="#f4d93a" stroke-width="3" stroke-dasharray="3.2 2.2" fill="none"/>
<rect x="918.0" y="297.0" width="16.0" height="5.0" fill="#f6f9f6"/>
<rect x="877.5" y="610.5" width="70.0" height="126.0" rx="1" fill="none" stroke="#eef3ee" stroke-width="3"/>
<rect x="876.0" y="732.0" width="24.0" height="7.5" fill="#f6f9f6"/>
<rect x="879.0" y="614.0" width="12.0" height="9.0" fill="#8b8686"/>
<rect x="934.0" y="614.0" width="12.0" height="9.0" fill="#8b8686"/>
<rect x="879.0" y="721.0" width="12.0" height="12.0" fill="#8b8686"/>
<rect x="934.0" y="721.0" width="12.0" height="12.0" fill="#8b8686"/>
<rect x="880.0" y="630.5" width="14.0" height="3.0" fill="#f4d93a"/>
<rect x="880.0" y="642.5" width="14.0" height="3.0" fill="#f4d93a"/>
<rect x="880.0" y="654.5" width="14.0" height="3.0" fill="#f4d93a"/>
<rect x="880.0" y="665.5" width="14.0" height="3.0" fill="#f4d93a"/>
<rect x="880.0" y="688.5" width="14.0" height="3.0" fill="#f4d93a"/>
<rect x="880.0" y="699.5" width="14.0" height="3.0" fill="#f4d93a"/>
<rect x="880.0" y="712.5" width="14.0" height="3.0" fill="#f4d93a"/>
<rect x="930.0" y="630.5" width="16.0" height="3.0" fill="#f4d93a"/>
<rect x="930.0" y="636.5" width="16.0" height="3.0" fill="#f4d93a"/>
<rect x="930.0" y="647.5" width="16.0" height="3.0" fill="#f4d93a"/>
<rect x="930.0" y="659.5" width="16.0" height="3.0" fill="#f4d93a"/>
<rect x="930.0" y="670.5" width="16.0" height="3.0" fill="#f4d93a"/>
<rect x="930.0" y="683.5" width="16.0" height="3.0" fill="#f4d93a"/>
<rect x="930.0" y="694.5" width="16.0" height="3.0" fill="#f4d93a"/>
<rect x="930.0" y="712.5" width="16.0" height="3.0" fill="#f4d93a"/>
<path d="M894 632 H912" fill="none" stroke="#034a20" stroke-width="2.08" stroke-linejoin="round"/>
<path d="M894 644 H912" fill="none" stroke="#034a20" stroke-width="2.08" stroke-linejoin="round"/>
<path d="M894 656 H912" fill="none" stroke="#034a20" stroke-width="2.08" stroke-linejoin="round"/>
<path d="M894 667 H912" fill="none" stroke="#034a20" stroke-width="2.08" stroke-linejoin="round"/>
<path d="M894 679 H912" fill="none" stroke="#034a20" stroke-width="2.08" stroke-linejoin="round"/>
<path d="M894 690 H912" fill="none" stroke="#034a20" stroke-width="2.08" stroke-linejoin="round"/>
<path d="M894 701 H912" fill="none" stroke="#034a20" stroke-width="2.08" stroke-linejoin="round"/>
<path d="M894 714 H912" fill="none" stroke="#034a20" stroke-width="2.08" stroke-linejoin="round"/>
<rect x="950.0" y="390.0" width="51.0" height="49.0" rx="1.5" fill="none" stroke="#dfe9e0" stroke-width="2"/>
<rect x="988.0" y="390.5" width="12.0" height="3.0" fill="#8b8686"/>
<rect x="988.0" y="435.0" width="12.0" height="3.0" fill="#8b8686"/>
<rect x="951.0" y="402.0" width="6.0" height="2.0" fill="#f4d93a"/>
<rect x="951.0" y="412.0" width="6.0" height="2.0" fill="#f4d93a"/>
<rect x="951.0" y="422.0" width="6.0" height="2.0" fill="#f4d93a"/>
<rect x="951.0" y="430.0" width="6.0" height="2.0" fill="#f4d93a"/>
<rect x="945.0" y="434.0" width="17.0" height="7.0" fill="#f4f8f4"/>
<rect x="950.0" y="461.0" width="48.6" height="57.0" rx="1.5" fill="none" stroke="#dfe9e0" stroke-width="2"/>
<rect x="982.0" y="461.5" width="15.0" height="3.0" fill="#8b8686"/>
<rect x="982.0" y="514.0" width="15.0" height="3.0" fill="#8b8686"/>
<rect x="951.0" y="476.0" width="9.0" height="2.4" fill="#f4d93a"/>
<rect x="951.0" y="485.0" width="9.0" height="2.4" fill="#f4d93a"/>
<rect x="951.0" y="493.0" width="9.0" height="2.4" fill="#f4d93a"/>
<rect x="951.0" y="500.0" width="9.0" height="2.4" fill="#f4d93a"/>
<rect x="945.0" y="513.0" width="13.0" height="8.0" fill="#f4f8f4"/>
<path d="M960 470 L995 505" fill="none" stroke="#034a20" stroke-width="2.34" stroke-linejoin="round"/>
<path d="M962 400 Q975 415 975 435" fill="none" stroke="#034a20" stroke-width="2.34" stroke-linejoin="round"/>
<path d="M820.6 472.0 L827.6 479.0 L820.6 486.0 L813.6 479.0Z" fill="#8b8686"/>
<path d="M842.0 472.0 L849.0 479.0 L842.0 486.0 L835.0 479.0Z" fill="#f4d93a"/>
<path d="M863.0 472.0 L870.0 479.0 L863.0 486.0 L856.0 479.0Z" fill="#f4d93a"/>
<path d="M887.0 472.0 L894.0 479.0 L887.0 486.0 L880.0 479.0Z" fill="#f4d93a"/>
<path d="M908.0 472.0 L915.0 479.0 L908.0 486.0 L901.0 479.0Z" fill="#f4d93a"/>
<path d="M1035.6 271.0 L1042.6 278.0 L1035.6 285.0 L1028.6 278.0Z" fill="#f4d93a"/>
<path d="M908.0 472.0 L915.0 479.0 L908.0 486.0 L901.0 479.0Z" fill="#f4d93a"/>
<rect x="634.8" y="485.8" width="28.4" height="43.4" rx="1.5" fill="none" stroke="#e6eee7" stroke-width="1.6"/>
<rect x="635.6" y="486.6" width="26.8" height="11.4" fill="#f4d93a"/>
<rect x="635.6" y="518.0" width="26.8" height="9.0" fill="#8b8686"/>
<rect x="583.8" y="498.8" width="37.4" height="20.4" rx="1.5" fill="none" stroke="#e6eee7" stroke-width="1.6"/>
<rect x="584.6" y="499.6" width="7.4" height="18.8" fill="#f4d93a"/>
<rect x="610.0" y="499.6" width="8.0" height="18.8" fill="#f4d93a"/>
<rect x="622.0" y="500.0" width="8.0" height="18.0" fill="#dfe9e0"/>
<rect x="624.0" y="503.0" width="4.0" height="12.0" fill="#036531"/>
<rect x="594.8" y="456.8" width="36.4" height="10.4" rx="2" fill="none" stroke="#e6eee7" stroke-width="1.6"/>
<rect x="596.5" y="458.5" width="33.0" height="3.5" fill="#f4d93a"/>
<rect x="596.0" y="458.0" width="34.0" height="8.0" fill="#e8e6b0"/>
<rect x="600.0" y="460.0" width="4.0" height="4.0" fill="#036531"/>
<rect x="610.0" y="460.0" width="4.0" height="4.0" fill="#036531"/>
<rect x="620.0" y="460.0" width="4.0" height="4.0" fill="#036531"/>
<rect x="578.8" y="478.8" width="12.4" height="12.4" rx="2" fill="none" stroke="#e6eee7" stroke-width="1.6"/>
<rect x="580.5" y="480.5" width="9.0" height="3.5" fill="#f4d93a"/>
<rect x="600.8" y="476.8" width="24.4" height="14.4" rx="2" fill="none" stroke="#e6eee7" stroke-width="1.6"/>
<rect x="604.0" y="481.0" width="18.0" height="2.0" fill="#f4d93a"/>
<rect x="604.0" y="486.0" width="18.0" height="2.0" fill="#f4d93a"/>
<rect x="668.8" y="488.8" width="8.4" height="16.4" rx="2" fill="none" stroke="#e6eee7" stroke-width="1.6"/>
<rect x="670.5" y="490.5" width="5.0" height="3.5" fill="#f4d93a"/>
<rect x="670.0" y="490.0" width="6.0" height="8.0" fill="#f4d93a"/>
<rect x="688.0" y="489.0" width="5.0" height="4.0" fill="#f4d93a"/>
<rect x="688.0" y="499.0" width="5.0" height="4.0" fill="#f4d93a"/>
<rect x="668.8" y="511.8" width="14.4" height="27.4" rx="3" fill="none" stroke="#e6eee7" stroke-width="1.6"/>
<rect x="670.0" y="513.0" width="12.0" height="5.0" fill="#f4d93a"/>
<rect x="670.0" y="534.0" width="12.0" height="4.0" fill="#8b8686"/>
<rect x="687.8" y="511.8" width="14.4" height="27.4" rx="3" fill="none" stroke="#e6eee7" stroke-width="1.6"/>
<rect x="689.0" y="513.0" width="12.0" height="5.0" fill="#f4d93a"/>
<rect x="689.0" y="534.0" width="12.0" height="4.0" fill="#8b8686"/>
<rect x="592.8" y="534.8" width="12.4" height="29.4" rx="3" fill="none" stroke="#e6eee7" stroke-width="1.6"/>
<rect x="594.0" y="536.0" width="10.0" height="4.0" fill="#f4d93a"/>
<rect x="608.8" y="534.8" width="14.4" height="29.4" rx="3" fill="none" stroke="#e6eee7" stroke-width="1.6"/>
<rect x="610.0" y="536.0" width="12.0" height="4.0" fill="#f4d93a"/>
<rect x="588.8" y="520.8" width="14.4" height="10.4" rx="2" fill="none" stroke="#e6eee7" stroke-width="1.6"/>
<rect x="590.5" y="522.5" width="11.0" height="3.5" fill="#f4d93a"/>
<rect x="612.8" y="520.8" width="16.4" height="9.4" rx="2" fill="none" stroke="#e6eee7" stroke-width="1.6"/>
<rect x="614.5" y="522.5" width="13.0" height="3.5" fill="#f4d93a"/>
<rect x="618.0" y="523.0" width="6.0" height="5.0" fill="#222"/>
<rect x="629.0" y="540.0" width="27.0" height="8.0" fill="#e9e7a8"/>
<rect x="632.0" y="542.0" width="21.0" height="4.0" fill="#036531"/>
<rect x="632.0" y="550.0" width="28.0" height="7.0" fill="#e9e7a8"/>
<rect x="635.0" y="552.0" width="22.0" height="3.0" fill="#036531"/>
<rect x="636.0" y="558.0" width="30.0" height="8.0" fill="#e9e7a8"/>
<rect x="639.0" y="560.0" width="24.0" height="4.0" fill="#036531"/>
<rect x="546.0" y="568.0" width="4.0" height="4.0" fill="#f1f5f1"/>
<path d="M547.0 582.0 L552.0 578.0 H588.0 L593.0 582.0 L588.0 586.0 H552.0Z" fill="#f1f5f1"/>
<path d="M601.0 582.0 L606.0 578.0 H639.0 L644.0 582.0 L639.0 586.0 H606.0Z" fill="#f1f5f1"/>
<path d="M651.0 582.0 L656.0 578.0 H692.0 L697.0 582.0 L692.0 586.0 H656.0Z" fill="#f1f5f1"/>
<rect x="555.8" y="598.8" width="13.4" height="6.4" rx="2" fill="none" stroke="#e6eee7" stroke-width="1.6"/>
<rect x="557.5" y="600.5" width="10.0" height="3.0" fill="#f4d93a"/>
<rect x="574.8" y="598.8" width="12.4" height="6.4" rx="2" fill="none" stroke="#e6eee7" stroke-width="1.6"/>
<rect x="576.5" y="600.5" width="9.0" height="3.0" fill="#f4d93a"/>
<rect x="558.8" y="610.8" width="20.4" height="26.4" rx="2" fill="none" stroke="#e6eee7" stroke-width="1.6"/>
<rect x="560.5" y="612.5" width="17.0" height="3.5" fill="#f4d93a"/>
<rect x="588.8" y="628.8" width="14.4" height="6.4" rx="2" fill="none" stroke="#e6eee7" stroke-width="1.6"/>
<rect x="590.5" y="630.5" width="11.0" height="3.0" fill="#f4d93a"/>
<rect x="606.8" y="628.8" width="16.4" height="6.4" rx="2" fill="none" stroke="#e6eee7" stroke-width="1.6"/>
<rect x="608.5" y="630.5" width="13.0" height="3.0" fill="#f4d93a"/>
<rect x="604.8" y="600.8" width="16.4" height="8.4" rx="2" fill="none" stroke="#e6eee7" stroke-width="1.6"/>
<rect x="606.5" y="602.5" width="13.0" height="3.5" fill="#f4d93a"/>
<rect x="612.8" y="614.8" width="12.4" height="8.4" rx="2" fill="none" stroke="#e6eee7" stroke-width="1.6"/>
<rect x="614.5" y="616.5" width="9.0" height="3.5" fill="#f4d93a"/>
<rect x="640.8" y="604.8" width="14.4" height="6.4" rx="2" fill="none" stroke="#e6eee7" stroke-width="1.6"/>
<rect x="642.5" y="606.5" width="11.0" height="3.0" fill="#f4d93a"/>
<rect x="642.8" y="618.8" width="10.4" height="10.4" rx="2" fill="none" stroke="#e6eee7" stroke-width="1.6"/>
<rect x="644.5" y="620.5" width="7.0" height="3.5" fill="#f4d93a"/>
<rect x="642.8" y="634.8" width="12.4" height="4.4" rx="2" fill="none" stroke="#e6eee7" stroke-width="1.6"/>
<rect x="644.5" y="636.5" width="9.0" height="1.0" fill="#f4d93a"/>
<rect x="556.8" y="642.8" width="12.4" height="8.4" rx="2" fill="none" stroke="#e6eee7" stroke-width="1.6"/>
<rect x="558.5" y="644.5" width="9.0" height="3.5" fill="#f4d93a"/>
<rect x="582.8" y="644.8" width="10.4" height="6.4" rx="2" fill="none" stroke="#e6eee7" stroke-width="1.6"/>
<rect x="584.5" y="646.5" width="7.0" height="3.0" fill="#f4d93a"/>
<rect x="574.8" y="656.8" width="16.4" height="6.4" rx="2" fill="none" stroke="#e6eee7" stroke-width="1.6"/>
<rect x="576.5" y="658.5" width="13.0" height="3.0" fill="#f4d93a"/>
<rect x="598.8" y="650.8" width="6.4" height="10.4" rx="2" fill="none" stroke="#e6eee7" stroke-width="1.6"/>
<rect x="600.5" y="652.5" width="3.0" height="3.5" fill="#f4d93a"/>
<rect x="614.8" y="648.8" width="8.4" height="12.4" rx="2" fill="none" stroke="#e6eee7" stroke-width="1.6"/>
<rect x="616.5" y="650.5" width="5.0" height="3.5" fill="#f4d93a"/>
<rect x="636.8" y="652.8" width="8.4" height="10.4" rx="2" fill="none" stroke="#e6eee7" stroke-width="1.6"/>
<rect x="638.5" y="654.5" width="5.0" height="3.5" fill="#f4d93a"/>
<rect x="652.8" y="642.8" width="10.4" height="16.4" rx="2" fill="none" stroke="#e6eee7" stroke-width="1.6"/>
<rect x="654.5" y="644.5" width="7.0" height="3.5" fill="#f4d93a"/>
<rect x="668.8" y="646.8" width="12.4" height="14.4" rx="2" fill="none" stroke="#e6eee7" stroke-width="1.6"/>
<rect x="670.5" y="648.5" width="9.0" height="3.5" fill="#f4d93a"/>
<rect x="684.8" y="650.8" width="12.4" height="10.4" rx="2" fill="none" stroke="#e6eee7" stroke-width="1.6"/>
<rect x="686.5" y="652.5" width="9.0" height="3.5" fill="#f4d93a"/>
<rect x="548.8" y="662.8" width="16.4" height="6.4" rx="2" fill="none" stroke="#e6eee7" stroke-width="1.6"/>
<rect x="550.5" y="664.5" width="13.0" height="3.0" fill="#f4d93a"/>
<rect x="548.8" y="684.8" width="18.4" height="6.4" rx="2" fill="none" stroke="#e6eee7" stroke-width="1.6"/>
<rect x="550.5" y="686.5" width="15.0" height="3.0" fill="#f4d93a"/>
<rect x="578.8" y="676.8" width="18.4" height="16.4" rx="2" fill="none" stroke="#e6eee7" stroke-width="1.6"/>
<rect x="580.5" y="678.5" width="15.0" height="3.5" fill="#f4d93a"/>
<rect x="556.8" y="702.8" width="16.4" height="12.4" rx="2" fill="none" stroke="#e6eee7" stroke-width="1.6"/>
<rect x="558.5" y="704.5" width="13.0" height="3.5" fill="#f4d93a"/>
<rect x="578.8" y="712.8" width="14.4" height="10.4" rx="2" fill="none" stroke="#e6eee7" stroke-width="1.6"/>
<rect x="580.5" y="714.5" width="11.0" height="3.5" fill="#f4d93a"/>
<rect x="552.8" y="728.8" width="24.4" height="8.4" rx="2" fill="none" stroke="#e6eee7" stroke-width="1.6"/>
<rect x="554.5" y="730.5" width="21.0" height="3.5" fill="#f4d93a"/>
<rect x="710.8" y="628.8" width="10.4" height="6.4" rx="2" fill="none" stroke="#e6eee7" stroke-width="1.6"/>
<rect x="712.5" y="630.5" width="7.0" height="3.0" fill="#f4d93a"/>
<rect x="716.8" y="640.8" width="14.4" height="6.4" rx="2" fill="none" stroke="#e6eee7" stroke-width="1.6"/>
<rect x="718.5" y="642.5" width="11.0" height="3.0" fill="#f4d93a"/>
<rect x="714.8" y="652.8" width="12.4" height="6.4" rx="2" fill="none" stroke="#e6eee7" stroke-width="1.6"/>
<rect x="716.5" y="654.5" width="9.0" height="3.0" fill="#f4d93a"/>
<rect x="603.0" y="669.0" width="105.0" height="68.0" fill="#0a5c3a"/>
<defs><pattern id="cd" x="604" y="670" width="11" height="8.6" patternUnits="userSpaceOnUse"><rect x="1" y="3" width="7" height="2.2" fill="#e6df45"/></pattern></defs>
<rect x="605.0" y="672.0" width="101.0" height="63.0" fill="url(#cd)"/>
<rect x="605.0" y="672.0" width="31.0" height="10.0" fill="#0a5c3a"/>
<rect x="650.0" y="690.0" width="22.0" height="10.0" fill="#0a5c3a"/>
<rect x="605.0" y="708.0" width="35.0" height="10.0" fill="#0a5c3a"/>
<rect x="676.0" y="706.0" width="24.0" height="10.0" fill="#0a5c3a"/>
<rect x="640.0" y="724.0" width="20.0" height="11.0" fill="#0a5c3a"/>
<rect x="602.0" y="668.0" width="106.0" height="69.0" rx="1.5" fill="none" stroke="#e8f0e8" stroke-width="2"/>
<rect x="601.0" y="667.0" width="49.0" height="3.0" fill="#e9e6a0"/>
<rect x="690.0" y="665.0" width="20.0" height="6.0" fill="#f4f8f4"/>
<rect x="598.0" y="676.0" width="4.0" height="2.5" fill="#f4d93a"/>
<rect x="598.0" y="683.0" width="4.0" height="2.5" fill="#f4d93a"/>
<rect x="598.0" y="690.0" width="4.0" height="2.5" fill="#f4d93a"/>
<rect x="598.0" y="697.0" width="4.0" height="2.5" fill="#f4d93a"/>
<rect x="598.0" y="704.0" width="4.0" height="2.5" fill="#f4d93a"/>
<rect x="598.0" y="711.0" width="4.0" height="2.5" fill="#f4d93a"/>
<rect x="598.0" y="718.0" width="4.0" height="2.5" fill="#f4d93a"/>
<rect x="598.0" y="725.0" width="4.0" height="2.5" fill="#f4d93a"/>
<rect x="598.0" y="732.0" width="4.0" height="2.5" fill="#f4d93a"/>
<rect x="758.0" y="600.0" width="26.0" height="14.0" rx="1.5" fill="none" stroke="#eef3ee" stroke-width="2"/>
<rect x="759.0" y="601.0" width="24.0" height="3.0" fill="#f4d93a"/>
<rect x="759.0" y="610.0" width="24.0" height="3.0" fill="#f4d93a"/>
<rect x="764.0" y="604.0" width="14.0" height="6.0" fill="#0d3d20"/>
<rect x="805.0" y="600.0" width="23.0" height="14.0" rx="1.5" fill="none" stroke="#eef3ee" stroke-width="2"/>
<rect x="806.0" y="601.0" width="21.0" height="3.0" fill="#f4d93a"/>
<rect x="806.0" y="610.0" width="21.0" height="3.0" fill="#f4d93a"/>
<rect x="811.0" y="604.0" width="11.0" height="6.0" fill="#0d3d20"/>
<rect x="832.0" y="582.0" width="23.0" height="13.0" rx="1.5" fill="none" stroke="#eef3ee" stroke-width="2"/>
<rect x="833.0" y="583.0" width="21.0" height="3.0" fill="#f4d93a"/>
<rect x="833.0" y="591.0" width="21.0" height="3.0" fill="#f4d93a"/>
<rect x="838.0" y="586.0" width="11.0" height="5.0" fill="#0d3d20"/>
<rect x="905.0" y="569.0" width="24.0" height="13.0" rx="1.5" fill="none" stroke="#eef3ee" stroke-width="2"/>
<rect x="906.0" y="570.0" width="22.0" height="3.0" fill="#f4d93a"/>
<rect x="906.0" y="578.0" width="22.0" height="3.0" fill="#f4d93a"/>
<rect x="911.0" y="573.0" width="12.0" height="5.0" fill="#0d3d20"/>
<rect x="952.0" y="560.0" width="15.0" height="25.0" rx="3" fill="none" stroke="#dfe9e0" stroke-width="2"/>
<rect x="953.0" y="561.0" width="13.0" height="5.0" fill="#f4d93a"/>
<rect x="953.0" y="579.0" width="13.0" height="5.0" fill="#f4d93a"/>
<rect x="956.0" y="566.0" width="7.0" height="13.0" fill="#0d3d20"/>
<rect x="760.0" y="628.0" width="19.0" height="6.0" fill="#eef0c8"/>
<rect x="764.0" y="629.5" width="11.0" height="3.0" fill="#036531"/>
<rect x="760.0" y="637.0" width="19.0" height="6.0" fill="#eef0c8"/>
<rect x="764.0" y="638.5" width="11.0" height="3.0" fill="#036531"/>
<rect x="760.0" y="646.0" width="19.0" height="6.0" fill="#eef0c8"/>
<rect x="764.0" y="647.5" width="11.0" height="3.0" fill="#036531"/>
<rect x="760.0" y="655.0" width="19.0" height="6.0" fill="#eef0c8"/>
<rect x="764.0" y="656.5" width="11.0" height="3.0" fill="#036531"/>
<rect x="760.0" y="664.0" width="19.0" height="6.0" fill="#eef0c8"/>
<rect x="764.0" y="665.5" width="11.0" height="3.0" fill="#036531"/>
<rect x="760.0" y="673.0" width="19.0" height="6.0" fill="#eef0c8"/>
<rect x="764.0" y="674.5" width="11.0" height="3.0" fill="#036531"/>
<rect x="760.0" y="682.0" width="19.0" height="6.0" fill="#eef0c8"/>
<rect x="764.0" y="683.5" width="11.0" height="3.0" fill="#036531"/>
<rect x="760.0" y="691.0" width="19.0" height="6.0" fill="#eef0c8"/>
<rect x="764.0" y="692.5" width="11.0" height="3.0" fill="#036531"/>
<rect x="760.0" y="700.0" width="19.0" height="6.0" fill="#eef0c8"/>
<rect x="764.0" y="701.5" width="11.0" height="3.0" fill="#036531"/>
<rect x="760.0" y="709.0" width="19.0" height="6.0" fill="#eef0c8"/>
<rect x="764.0" y="710.5" width="11.0" height="3.0" fill="#036531"/>
<rect x="760.0" y="718.0" width="19.0" height="6.0" fill="#eef0c8"/>
<rect x="764.0" y="719.5" width="11.0" height="3.0" fill="#036531"/>
<rect x="760.0" y="727.0" width="19.0" height="6.0" fill="#eef0c8"/>
<rect x="764.0" y="728.5" width="11.0" height="3.0" fill="#036531"/>
<rect x="760.0" y="736.0" width="19.0" height="6.0" fill="#eef0c8"/>
<rect x="764.0" y="737.5" width="11.0" height="3.0" fill="#036531"/>
<rect x="984.0" y="622.0" width="13.0" height="5.5" fill="#f0efb8"/>
<rect x="987.0" y="623.5" width="7.0" height="2.5" fill="#036531"/>
<rect x="984.0" y="630.0" width="13.0" height="5.5" fill="#f0efb8"/>
<rect x="987.0" y="631.5" width="7.0" height="2.5" fill="#036531"/>
<rect x="984.0" y="638.0" width="13.0" height="5.5" fill="#f0efb8"/>
<rect x="987.0" y="639.5" width="7.0" height="2.5" fill="#036531"/>
<rect x="984.0" y="646.0" width="13.0" height="5.5" fill="#f0efb8"/>
<rect x="987.0" y="647.5" width="7.0" height="2.5" fill="#036531"/>
<rect x="984.0" y="654.0" width="13.0" height="5.5" fill="#f0efb8"/>
<rect x="987.0" y="655.5" width="7.0" height="2.5" fill="#036531"/>
<rect x="984.0" y="662.0" width="13.0" height="5.5" fill="#f0efb8"/>
<rect x="987.0" y="663.5" width="7.0" height="2.5" fill="#036531"/>
<rect x="984.0" y="670.0" width="13.0" height="5.5" fill="#f0efb8"/>
<rect x="987.0" y="671.5" width="7.0" height="2.5" fill="#036531"/>
<rect x="984.0" y="678.0" width="13.0" height="5.5" fill="#f0efb8"/>
<rect x="987.0" y="679.5" width="7.0" height="2.5" fill="#036531"/>
<rect x="984.0" y="686.0" width="13.0" height="5.5" fill="#f0efb8"/>
<rect x="987.0" y="687.5" width="7.0" height="2.5" fill="#036531"/>
<rect x="984.0" y="694.0" width="13.0" height="5.5" fill="#f0efb8"/>
<rect x="987.0" y="695.5" width="7.0" height="2.5" fill="#036531"/>
<rect x="984.0" y="702.0" width="13.0" height="5.5" fill="#f0efb8"/>
<rect x="987.0" y="703.5" width="7.0" height="2.5" fill="#036531"/>
<rect x="984.0" y="710.0" width="13.0" height="5.5" fill="#f0efb8"/>
<rect x="987.0" y="711.5" width="7.0" height="2.5" fill="#036531"/>
<rect x="1001.0" y="532.0" width="26.0" height="14.0" rx="1.5" fill="none" stroke="#dfe9e0" stroke-width="2"/>
<rect x="1004.0" y="535.0" width="4.0" height="4.0" fill="#f4d93a"/>
<rect x="1018.0" y="537.0" width="6.0" height="5.0" fill="#f4d93a"/>
<rect x="1036.8" y="543.8" width="12.4" height="6.4" rx="2" fill="none" stroke="#e6eee7" stroke-width="1.6"/>
<rect x="1022.8" y="552.8" width="10.4" height="4.4" rx="2" fill="none" stroke="#e6eee7" stroke-width="1.6"/>
<rect x="1036.8" y="552.8" width="10.4" height="6.4" rx="2" fill="none" stroke="#e6eee7" stroke-width="1.6"/>
<rect x="990.8" y="527.8" width="4.4" height="9.4" rx="2" fill="none" stroke="#e6eee7" stroke-width="1.6"/>
<rect x="992.5" y="529.5" width="1.0" height="3.5" fill="#f4d93a"/>
<rect x="958.8" y="526.8" width="10.4" height="5.4" rx="2" fill="none" stroke="#e6eee7" stroke-width="1.6"/>
<rect x="932.8" y="524.8" width="10.4" height="25.4" rx="2" fill="none" stroke="#e6eee7" stroke-width="1.6"/>
<rect x="934.0" y="526.0" width="8.0" height="5.0" fill="#f4d93a"/>
<rect x="952.8" y="282.8" width="8.4" height="10.4" rx="2" fill="none" stroke="#e6eee7" stroke-width="1.6"/>
<rect x="954.5" y="284.5" width="5.0" height="3.5" fill="#f4d93a"/>
<rect x="964.8" y="282.8" width="8.4" height="10.4" rx="2" fill="none" stroke="#e6eee7" stroke-width="1.6"/>
<rect x="966.5" y="284.5" width="5.0" height="3.5" fill="#f4d93a"/>
<rect x="976.8" y="282.8" width="10.4" height="10.4" rx="2" fill="none" stroke="#e6eee7" stroke-width="1.6"/>
<rect x="978.5" y="284.5" width="7.0" height="3.5" fill="#f4d93a"/>
<rect x="994.8" y="283.8" width="3.4" height="9.4" rx="2" fill="none" stroke="#e6eee7" stroke-width="1.6"/>
<rect x="996.5" y="285.5" width="0.0" height="3.5" fill="#f4d93a"/>
<rect x="950.8" y="340.8" width="8.4" height="11.4" rx="2" fill="none" stroke="#e6eee7" stroke-width="1.6"/>
<rect x="952.5" y="342.5" width="5.0" height="3.5" fill="#f4d93a"/>
<rect x="962.8" y="342.8" width="8.4" height="9.4" rx="2" fill="none" stroke="#e6eee7" stroke-width="1.6"/>
<rect x="964.5" y="344.5" width="5.0" height="3.5" fill="#f4d93a"/>
<rect x="974.8" y="340.8" width="8.4" height="10.4" rx="2" fill="none" stroke="#e6eee7" stroke-width="1.6"/>
<rect x="976.5" y="342.5" width="5.0" height="3.5" fill="#f4d93a"/>
<rect x="1044.8" y="340.8" width="8.4" height="12.4" rx="2" fill="none" stroke="#e6eee7" stroke-width="1.6"/>
<rect x="1046.5" y="342.5" width="5.0" height="3.5" fill="#f4d93a"/>
<rect x="1014.8" y="336.8" width="12.4" height="5.4" rx="2" fill="none" stroke="#e6eee7" stroke-width="1.6"/>
<rect x="1016.5" y="338.5" width="9.0" height="2.0" fill="#f4d93a"/>
<rect x="936.8" y="360.8" width="4.4" height="10.4" rx="2" fill="none" stroke="#e6eee7" stroke-width="1.6"/>
<rect x="938.5" y="362.5" width="1.0" height="3.5" fill="#f4d93a"/>
<rect x="944.8" y="374.8" width="10.4" height="6.4" rx="2" fill="none" stroke="#e6eee7" stroke-width="1.6"/>
<rect x="946.5" y="376.5" width="7.0" height="3.0" fill="#f4d93a"/>
<rect x="936.8" y="375.8" width="3.4" height="9.4" rx="2" fill="none" stroke="#e6eee7" stroke-width="1.6"/>
<rect x="938.5" y="377.5" width="0.0" height="3.5" fill="#f4d93a"/>
<rect x="958.8" y="362.8" width="12.4" height="8.4" rx="2" fill="none" stroke="#e6eee7" stroke-width="1.6"/>
<rect x="960.5" y="364.5" width="9.0" height="3.5" fill="#f4d93a"/>
<rect x="1020.8" y="356.8" width="20.4" height="10.4" rx="2" fill="none" stroke="#e6eee7" stroke-width="1.6"/>
<rect x="1022.5" y="358.5" width="17.0" height="3.5" fill="#f4d93a"/>
<rect x="1004.8" y="374.8" width="10.4" height="6.4" rx="2" fill="none" stroke="#e6eee7" stroke-width="1.6"/>
<rect x="1006.5" y="376.5" width="7.0" height="3.0" fill="#f4d93a"/>
<rect x="1018.8" y="370.8" width="12.4" height="14.4" rx="2" fill="none" stroke="#e6eee7" stroke-width="1.6"/>
<rect x="1020.5" y="372.5" width="9.0" height="3.5" fill="#f4d93a"/>
<rect x="1008.8" y="442.8" width="10.4" height="8.4" rx="2" fill="none" stroke="#e6eee7" stroke-width="1.6"/>
<rect x="1010.5" y="444.5" width="7.0" height="3.5" fill="#f4d93a"/>
<rect x="1016.8" y="454.8" width="10.4" height="6.4" rx="2" fill="none" stroke="#e6eee7" stroke-width="1.6"/>
<rect x="1018.5" y="456.5" width="7.0" height="3.0" fill="#f4d93a"/>
<rect x="1130.0" y="681.0" width="5.0" height="3.4" fill="#e9dc40"/>
<rect x="1142.0" y="681.0" width="5.0" height="3.4" fill="#e9dc40"/>
<rect x="1154.0" y="681.0" width="5.0" height="3.4" fill="#e9dc40"/>
<rect x="1166.0" y="681.0" width="5.0" height="3.4" fill="#e9dc40"/>
<rect x="1136.0" y="688.0" width="5.0" height="3.4" fill="#e9dc40"/>
<rect x="1148.0" y="688.0" width="5.0" height="3.4" fill="#e9dc40"/>
<rect x="1160.0" y="688.0" width="5.0" height="3.4" fill="#e9dc40"/>
<rect x="1172.0" y="688.0" width="5.0" height="3.4" fill="#e9dc40"/>
<rect x="1136.0" y="696.0" width="5.0" height="3.4" fill="#e9dc40"/>
<rect x="1148.0" y="696.0" width="5.0" height="3.4" fill="#e9dc40"/>
<rect x="1160.0" y="696.0" width="5.0" height="3.4" fill="#e9dc40"/>
<rect x="1172.0" y="696.0" width="5.0" height="3.4" fill="#e9dc40"/>
<rect x="1136.0" y="704.0" width="5.0" height="3.4" fill="#e9dc40"/>
<rect x="1148.0" y="704.0" width="5.0" height="3.4" fill="#e9dc40"/>
<rect x="1160.0" y="704.0" width="5.0" height="3.4" fill="#e9dc40"/>
<rect x="1172.0" y="704.0" width="5.0" height="3.4" fill="#e9dc40"/>
<rect x="1108.0" y="636.0" width="12.0" height="4.0" fill="#d9d040"/>
<rect x="1057.8" y="726.8" width="28.4" height="35.4" rx="1.5" fill="none" stroke="#dfe9e0" stroke-width="1.6"/>
<rect x="1058.6" y="727.6" width="10.4" height="10.4" fill="#f4d93a"/>
<rect x="1075.0" y="727.6" width="10.4" height="10.4" fill="#8b8686"/>
<rect x="1058.6" y="748.0" width="9.4" height="12.0" fill="#8b8686"/>
<rect x="1074.0" y="748.0" width="11.0" height="12.0" fill="#f4d93a"/>
<rect x="1045.8" y="730.8" width="8.4" height="15.4" rx="2" fill="none" stroke="#e6eee7" stroke-width="1.6"/>
<rect x="1047.0" y="740.0" width="6.0" height="5.0" fill="#ddd"/>
<rect x="1066.0" y="764.0" width="20.0" height="10.0" fill="#f1f5f1"/>
<rect x="1078.0" y="766.0" width="6.0" height="4.0" fill="#f4d93a"/>
<rect x="1068.8" y="776.8" width="12.4" height="6.4" rx="2" fill="none" stroke="#e6eee7" stroke-width="1.6"/>
<rect x="1104.7" y="768.7" width="8.6" height="10.6" rx="2" fill="none" stroke="#e6eee7" stroke-width="1.4"/>
<rect x="1106.0" y="774.0" width="6.0" height="4.0" fill="#f4d93a"/>
<rect x="1096.0" y="714.0" width="5.0" height="3.0" fill="#d9d040"/>
<rect x="1096.0" y="722.0" width="5.0" height="3.0" fill="#d9d040"/>
<rect x="1096.0" y="730.0" width="5.0" height="3.0" fill="#d9d040"/>
<rect x="1108.0" y="720.0" width="5.0" height="3.0" fill="#d9d040"/>
<rect x="1108.0" y="730.0" width="5.0" height="3.0" fill="#d9d040"/>
<rect x="1020.8" y="720.8" width="12.4" height="5.4" rx="2" fill="none" stroke="#e6eee7" stroke-width="1.6"/>
<path d="M1022.0 737.0 L1028.0 743.0 L1022.0 749.0 L1016.0 743.0Z" fill="#8b8686"/>
<path d="M1022.0 760.0 L1029.0 767.0 L1022.0 774.0 L1015.0 767.0Z" fill="#f4d93a"/>
<path d="M1013.0 794.0 L1018.0 790.0 H1044.0 L1049.0 794.0 L1044.0 798.0 H1018.0Z" fill="#f1f5f1"/>
<path d="M1145.0 794.0 L1150.0 790.0 H1164.0 L1169.0 794.0 L1164.0 798.0 H1150.0Z" fill="#f1f5f1"/>
<path d="M856.0 794.0 L861.0 790.0 H861.0 L866.0 794.0 L861.0 798.0 H861.0Z" fill="#f1f5f1"/>
<path d="M547.0 812.0 L552.0 808.0 H588.0 L593.0 812.0 L588.0 816.0 H552.0Z" fill="#f1f5f1"/>
<path d="M599.0 812.0 L604.0 808.0 H641.0 L646.0 812.0 L641.0 816.0 H604.0Z" fill="#f1f5f1"/>
<path d="M654.0 812.0 L659.0 808.0 H692.0 L697.0 812.0 L692.0 816.0 H659.0Z" fill="#f1f5f1"/>
<path d="M704.0 812.0 L709.0 808.0 H732.0 L737.0 812.0 L732.0 816.0 H709.0Z" fill="#f1f5f1"/>
<rect x="742.5" y="728.0" width="7" height="38.0" rx="3.5" fill="#f1f5f1"/>
<rect x="742.5" y="773.0" width="7" height="28.0" rx="3.5" fill="#f1f5f1"/>
<rect x="845.6" y="841.0" width="8" height="72.0" rx="4.0" fill="#f1f5f1"/>
<rect x="845.6" y="1032.0" width="8" height="72.0" rx="4.0" fill="#f1f5f1"/>
<path d="M843.0 794.0 L848.0 790.0 H860.0 L865.0 794.0 L860.0 798.0 H848.0Z" fill="#f1f5f1"/>
<path d="M770.0 752.5 L776.5 759.0 L770.0 765.5 L763.5 759.0Z" fill="#f4d93a"/>
<path d="M762.0 776.5 L768.5 783.0 L762.0 789.5 L755.5 783.0Z" fill="#f4d93a"/>
<path d="M776.0 810.9 L782.5 817.4 L776.0 823.9 L769.5 817.4Z" fill="#f4d93a"/>
<path d="M649.0 956.5 L655.5 963.0 L649.0 969.5 L642.5 963.0Z" fill="#f4d93a"/>
<rect x="710.8" y="751.8" width="22.4" height="40.4" rx="1.5" fill="none" stroke="#e6eee7" stroke-width="1.6"/>
<rect x="711.6" y="752.6" width="20.8" height="10.0" fill="#f4d93a"/>
<rect x="711.6" y="781.4" width="20.8" height="10.0" fill="#f4d93a"/>
<rect x="680.8" y="829.8" width="41.4" height="29.4" rx="1.5" fill="none" stroke="#e6eee7" stroke-width="1.6"/>
<rect x="681.6" y="830.6" width="9.5" height="27.8" fill="#f4d93a"/>
<rect x="711.9" y="830.6" width="9.5" height="27.8" fill="#f4d93a"/>
<rect x="727.8" y="834.8" width="29.4" height="14.4" rx="1.5" fill="none" stroke="#e6eee7" stroke-width="1.6"/>
<rect x="729.0" y="836.0" width="6.0" height="12.0" fill="#8b8686"/>
<rect x="748.0" y="836.0" width="8.0" height="12.0" fill="#f4d93a"/>
<rect x="691.8" y="864.8" width="35.4" height="18.4" rx="1.5" fill="none" stroke="#e6eee7" stroke-width="1.6"/>
<rect x="692.6" y="865.6" width="8.0" height="16.8" fill="#f4d93a"/>
<rect x="718.4" y="865.6" width="8.0" height="16.8" fill="#8b8686"/>
<rect x="717.8" y="906.8" width="28.4" height="43.4" rx="1.5" fill="none" stroke="#e6eee7" stroke-width="1.6"/>
<rect x="718.6" y="907.6" width="26.8" height="10.5" fill="#f4d93a"/>
<rect x="718.6" y="938.9" width="26.8" height="10.5" fill="#f4d93a"/>
<rect x="753.8" y="906.8" width="29.4" height="43.4" rx="1.5" fill="none" stroke="#e6eee7" stroke-width="1.6"/>
<rect x="754.6" y="907.6" width="27.8" height="10.5" fill="#f4d93a"/>
<rect x="754.6" y="938.9" width="27.8" height="10.5" fill="#f4d93a"/>
<rect x="700.8" y="956.8" width="33.4" height="60.4" rx="1.5" fill="none" stroke="#e6eee7" stroke-width="1.6"/>
<rect x="701.6" y="957.6" width="31.8" height="10.5" fill="#f4d93a"/>
<rect x="701.6" y="1005.9" width="31.8" height="10.5" fill="#f4d93a"/>
<path d="M714 968 V1006 M722 968 V1006" fill="none" stroke="#034a20" stroke-width="2.60" stroke-linejoin="round"/>
<rect x="692.8" y="893.8" width="19.4" height="35.4" rx="1.5" fill="none" stroke="#e6eee7" stroke-width="1.6"/>
<rect x="693.6" y="894.6" width="17.8" height="9.0" fill="#8b8686"/>
<rect x="693.6" y="919.4" width="17.8" height="9.0" fill="#f4d93a"/>
<rect x="788.8" y="890.8" width="18.4" height="35.4" rx="1.5" fill="none" stroke="#e6eee7" stroke-width="1.6"/>
<rect x="789.6" y="891.6" width="16.8" height="10.0" fill="#8b8686"/>
<rect x="789.6" y="915.4" width="16.8" height="10.0" fill="#f4d93a"/>
<rect x="720.8" y="888.8" width="24.4" height="13.4" rx="1.5" fill="none" stroke="#e6eee7" stroke-width="1.6"/>
<rect x="738.0" y="890.0" width="6.0" height="11.0" fill="#f4d93a"/>
<rect x="751.8" y="888.8" width="26.4" height="13.4" rx="1.5" fill="none" stroke="#e6eee7" stroke-width="1.6"/>
<rect x="753.0" y="890.0" width="6.0" height="11.0" fill="#f4d93a"/>
<rect x="736.9" y="858.9" width="39.2" height="22.2" rx="3" fill="none" stroke="#e4ede5" stroke-width="1.8"/>
<rect x="740.0" y="863.0" width="33.0" height="15.0" fill="#0a5c3a"/>
<rect x="741.0" y="865.0" width="3.4" height="3.0" fill="#d8d24a"/>
<rect x="741.0" y="872.0" width="3.4" height="3.0" fill="#d8d24a"/>
<rect x="747.0" y="865.0" width="3.4" height="3.0" fill="#d8d24a"/>
<rect x="747.0" y="872.0" width="3.4" height="3.0" fill="#d8d24a"/>
<rect x="753.0" y="865.0" width="3.4" height="3.0" fill="#d8d24a"/>
<rect x="753.0" y="872.0" width="3.4" height="3.0" fill="#d8d24a"/>
<rect x="759.0" y="865.0" width="3.4" height="3.0" fill="#d8d24a"/>
<rect x="759.0" y="872.0" width="3.4" height="3.0" fill="#d8d24a"/>
<rect x="765.0" y="865.0" width="3.4" height="3.0" fill="#d8d24a"/>
<rect x="765.0" y="872.0" width="3.4" height="3.0" fill="#d8d24a"/>
<rect x="771.0" y="865.0" width="3.4" height="3.0" fill="#d8d24a"/>
<rect x="771.0" y="872.0" width="3.4" height="3.0" fill="#d8d24a"/>
<rect x="738.0" y="856.0" width="3.0" height="3.0" fill="#f4d93a"/>
<rect x="744.0" y="856.0" width="3.0" height="3.0" fill="#f4d93a"/>
<rect x="750.0" y="856.0" width="3.0" height="3.0" fill="#f4d93a"/>
<rect x="756.0" y="856.0" width="3.0" height="3.0" fill="#f4d93a"/>
<rect x="762.0" y="856.0" width="3.0" height="3.0" fill="#f4d93a"/>
<rect x="768.0" y="856.0" width="3.0" height="3.0" fill="#f4d93a"/>
<rect x="774.0" y="856.0" width="3.0" height="3.0" fill="#f4d93a"/>
<rect x="587.0" y="867.0" width="72.0" height="33.0" rx="4" fill="none" stroke="#dde8de" stroke-width="2"/>
<rect x="590.0" y="868.0" width="60.0" height="3.0" fill="#d8dca0"/>
<rect x="600.0" y="893.0" width="3.0" height="2.0" fill="#f4d93a"/>
<rect x="612.0" y="893.0" width="3.0" height="2.0" fill="#f4d93a"/>
<rect x="630.0" y="893.0" width="3.0" height="2.0" fill="#f4d93a"/>
<rect x="650.0" y="893.0" width="3.0" height="2.0" fill="#f4d93a"/>
<path d="M592 876 H640 V884 H598" fill="none" stroke="#034a20" stroke-width="2.34" stroke-linejoin="round"/>
<rect x="581.0" y="952.0" width="52.0" height="53.0" rx="1.5" fill="none" stroke="#f0f5f0" stroke-width="2"/>
<rect x="578.0" y="949.0" width="22.0" height="5.0" fill="#f6f9f6"/>
<rect x="600.0" y="955.0" width="22.0" height="6.0" fill="#e9e27a"/>
<rect x="582.0" y="991.0" width="4.0" height="12.0" fill="#8b8686"/>
<rect x="628.0" y="991.0" width="4.0" height="12.0" fill="#8b8686"/>
<path d="M596 962 L590 975 V1002 M608 962 V975 L598 988 V1002 M620 962 V978 L608 990 V1002" fill="none" stroke="#034a20" stroke-width="2.34" stroke-linejoin="round"/>
<rect x="653.0" y="998.0" width="28.0" height="33.0" rx="1.5" fill="none" stroke="#e6eee7" stroke-width="2"/>
<rect x="657.0" y="1022.0" width="3.0" height="9.0" fill="#e9e27a"/>
<rect x="664.0" y="1022.0" width="3.0" height="9.0" fill="#e9e27a"/>
<rect x="671.0" y="1022.0" width="3.0" height="9.0" fill="#e9e27a"/>
<rect x="677.0" y="1022.0" width="3.0" height="9.0" fill="#e9e27a"/>
<rect x="658.0" y="1001.0" width="6.0" height="4.0" fill="#e9e27a"/>
<rect x="670.0" y="1001.0" width="6.0" height="4.0" fill="#e9e27a"/>
<rect x="650.0" y="1030.0" width="10.0" height="5.0" fill="#f4f8f4"/>
<rect x="619.0" y="765.0" width="30.0" height="35.0" rx="1.5" fill="none" stroke="#dfe9e0" stroke-width="2"/>
<rect x="620.0" y="766.0" width="8.0" height="8.0" fill="#f4d93a"/>
<rect x="640.0" y="766.0" width="8.0" height="6.0" fill="#8b8686"/>
<rect x="620.0" y="793.0" width="8.0" height="6.0" fill="#8b8686"/>
<rect x="638.0" y="792.0" width="10.0" height="7.0" fill="#f4d93a"/>
<rect x="565.0" y="853.0" width="5.0" height="3.6" fill="#f4d93a"/>
<rect x="572.0" y="853.0" width="5.0" height="3.6" fill="#f4d93a"/>
<rect x="565.0" y="864.0" width="5.0" height="3.6" fill="#f4d93a"/>
<rect x="572.0" y="864.0" width="5.0" height="3.6" fill="#f4d93a"/>
<rect x="565.0" y="876.0" width="5.0" height="3.6" fill="#f4d93a"/>
<rect x="572.0" y="876.0" width="5.0" height="3.6" fill="#f4d93a"/>
<rect x="565.0" y="887.0" width="5.0" height="3.6" fill="#f4d93a"/>
<rect x="572.0" y="887.0" width="5.0" height="3.6" fill="#f4d93a"/>
<rect x="565.0" y="899.0" width="5.0" height="3.6" fill="#f4d93a"/>
<rect x="572.0" y="899.0" width="5.0" height="3.6" fill="#f4d93a"/>
<rect x="565.0" y="911.0" width="5.0" height="3.6" fill="#f4d93a"/>
<rect x="572.0" y="911.0" width="5.0" height="3.6" fill="#f4d93a"/>
<rect x="565.0" y="923.0" width="5.0" height="3.6" fill="#f4d93a"/>
<rect x="572.0" y="923.0" width="5.0" height="3.6" fill="#f4d93a"/>
<rect x="546.0" y="828.0" width="7.0" height="3.4" fill="#f4d93a"/>
<rect x="546.0" y="834.0" width="7.0" height="3.4" fill="#f4d93a"/>
<rect x="546.0" y="842.0" width="7.0" height="3.4" fill="#f4d93a"/>
<rect x="546.0" y="851.0" width="7.0" height="3.4" fill="#f4d93a"/>
<rect x="548.8" y="733.8" width="26.4" height="6.4" rx="2" fill="none" stroke="#e6eee7" stroke-width="1.6"/>
<rect x="550.5" y="735.5" width="23.0" height="3.0" fill="#f4d93a"/>
<rect x="574.8" y="746.8" width="10.4" height="18.4" rx="2" fill="none" stroke="#e6eee7" stroke-width="1.6"/>
<rect x="576.5" y="748.5" width="7.0" height="3.5" fill="#f4d93a"/>
<rect x="548.8" y="760.8" width="16.4" height="10.4" rx="2" fill="none" stroke="#e6eee7" stroke-width="1.6"/>
<rect x="550.5" y="762.5" width="13.0" height="3.5" fill="#f4d93a"/>
<rect x="548.8" y="780.8" width="24.4" height="14.4" rx="2" fill="none" stroke="#e6eee7" stroke-width="1.6"/>
<rect x="550.5" y="782.5" width="21.0" height="3.5" fill="#f4d93a"/>
<rect x="576.8" y="790.8" width="14.4" height="8.4" rx="2" fill="none" stroke="#e6eee7" stroke-width="1.6"/>
<rect x="578.5" y="792.5" width="11.0" height="3.5" fill="#f4d93a"/>
<rect x="594.8" y="794.8" width="10.4" height="4.4" rx="2" fill="none" stroke="#e6eee7" stroke-width="1.6"/>
<rect x="596.5" y="796.5" width="7.0" height="1.0" fill="#f4d93a"/>
<rect x="604.8" y="744.8" width="8.4" height="18.4" rx="2" fill="none" stroke="#e6eee7" stroke-width="1.6"/>
<rect x="606.5" y="746.5" width="5.0" height="3.5" fill="#f4d93a"/>
<rect x="620.8" y="744.8" width="12.4" height="6.4" rx="2" fill="none" stroke="#e6eee7" stroke-width="1.6"/>
<rect x="622.5" y="746.5" width="9.0" height="3.0" fill="#f4d93a"/>
<rect x="638.8" y="744.8" width="10.4" height="6.4" rx="2" fill="none" stroke="#e6eee7" stroke-width="1.6"/>
<rect x="640.5" y="746.5" width="7.0" height="3.0" fill="#f4d93a"/>
<rect x="656.8" y="744.8" width="20.4" height="16.4" rx="2" fill="none" stroke="#e6eee7" stroke-width="1.6"/>
<rect x="658.5" y="746.5" width="17.0" height="3.5" fill="#f4d93a"/>
<rect x="682.8" y="750.8" width="8.4" height="16.4" rx="2" fill="none" stroke="#e6eee7" stroke-width="1.6"/>
<rect x="684.5" y="752.5" width="5.0" height="3.5" fill="#f4d93a"/>
<rect x="698.8" y="750.8" width="8.4" height="16.4" rx="2" fill="none" stroke="#e6eee7" stroke-width="1.6"/>
<rect x="700.5" y="752.5" width="5.0" height="3.5" fill="#f4d93a"/>
<rect x="658.8" y="770.8" width="20.4" height="10.4" rx="2" fill="none" stroke="#e6eee7" stroke-width="1.6"/>
<rect x="660.5" y="772.5" width="17.0" height="3.5" fill="#f4d93a"/>
<rect x="660.8" y="786.8" width="16.4" height="8.4" rx="2" fill="none" stroke="#e6eee7" stroke-width="1.6"/>
<rect x="662.5" y="788.5" width="13.0" height="3.5" fill="#f4d93a"/>
<rect x="684.8" y="776.8" width="6.4" height="16.4" rx="2" fill="none" stroke="#e6eee7" stroke-width="1.6"/>
<rect x="686.5" y="778.5" width="3.0" height="3.5" fill="#f4d93a"/>
<rect x="698.8" y="776.8" width="8.4" height="18.4" rx="2" fill="none" stroke="#e6eee7" stroke-width="1.6"/>
<rect x="700.5" y="778.5" width="5.0" height="3.5" fill="#f4d93a"/>
<rect x="760.8" y="740.8" width="14.4" height="6.4" rx="2" fill="none" stroke="#e6eee7" stroke-width="1.6"/>
<rect x="762.5" y="742.5" width="11.0" height="3.0" fill="#f4d93a"/>
<rect x="758.8" y="752.8" width="4.4" height="18.4" rx="2" fill="none" stroke="#e6eee7" stroke-width="1.6"/>
<rect x="760.5" y="754.5" width="1.0" height="3.5" fill="#f4d93a"/>
<rect x="744.8" y="740.8" width="6.4" height="6.4" rx="2" fill="none" stroke="#e6eee7" stroke-width="1.6"/>
<rect x="746.5" y="742.5" width="3.0" height="3.0" fill="#f4d93a"/>
<rect x="606.8" y="822.8" width="18.4" height="8.4" rx="2" fill="none" stroke="#e6eee7" stroke-width="1.6"/>
<rect x="608.5" y="824.5" width="15.0" height="3.5" fill="#f4d93a"/>
<rect x="612.8" y="836.8" width="10.4" height="4.4" rx="2" fill="none" stroke="#e6eee7" stroke-width="1.6"/>
<rect x="614.5" y="838.5" width="7.0" height="1.0" fill="#f4d93a"/>
<rect x="612.8" y="848.8" width="10.4" height="6.4" rx="2" fill="none" stroke="#e6eee7" stroke-width="1.6"/>
<rect x="614.5" y="850.5" width="7.0" height="3.0" fill="#f4d93a"/>
<rect x="656.8" y="824.8" width="12.4" height="4.4" rx="2" fill="none" stroke="#e6eee7" stroke-width="1.6"/>
<rect x="658.5" y="826.5" width="9.0" height="1.0" fill="#f4d93a"/>
<rect x="546.8" y="842.8" width="14.4" height="6.4" rx="2" fill="none" stroke="#e6eee7" stroke-width="1.6"/>
<rect x="548.5" y="844.5" width="11.0" height="3.0" fill="#f4d93a"/>
<rect x="546.8" y="925.8" width="6.4" height="7.4" rx="2" fill="none" stroke="#e6eee7" stroke-width="1.6"/>
<rect x="548.5" y="927.5" width="3.0" height="3.5" fill="#f4d93a"/>
<rect x="786.8" y="834.8" width="10.4" height="12.4" rx="2" fill="none" stroke="#e6eee7" stroke-width="1.6"/>
<rect x="788.5" y="836.5" width="7.0" height="3.5" fill="#f4d93a"/>
<rect x="786.8" y="856.8" width="10.4" height="10.4" rx="2" fill="none" stroke="#e6eee7" stroke-width="1.6"/>
<rect x="788.5" y="858.5" width="7.0" height="3.5" fill="#f4d93a"/>
<rect x="762.8" y="832.8" width="10.4" height="18.4" rx="2" fill="none" stroke="#e6eee7" stroke-width="1.6"/>
<rect x="764.5" y="834.5" width="7.0" height="3.5" fill="#f4d93a"/>
<rect x="828.8" y="950.8" width="14.4" height="12.4" rx="2" fill="none" stroke="#e6eee7" stroke-width="1.6"/>
<rect x="830.5" y="952.5" width="11.0" height="3.5" fill="#f4d93a"/>
<rect x="628.8" y="978.8" width="8.4" height="12.4" rx="2" fill="none" stroke="#e6eee7" stroke-width="1.6"/>
<rect x="630.5" y="980.5" width="5.0" height="3.5" fill="#f4d93a"/>
<rect x="626.8" y="996.8" width="8.4" height="6.4" rx="2" fill="none" stroke="#e6eee7" stroke-width="1.6"/>
<rect x="628.5" y="998.5" width="5.0" height="3.0" fill="#f4d93a"/>
<rect x="640.8" y="1012.8" width="8.4" height="10.4" rx="2" fill="none" stroke="#e6eee7" stroke-width="1.6"/>
<rect x="642.5" y="1014.5" width="5.0" height="3.5" fill="#f4d93a"/>
<rect x="568.8" y="954.8" width="6.4" height="22.4" rx="2" fill="none" stroke="#e6eee7" stroke-width="1.6"/>
<rect x="570.5" y="956.5" width="3.0" height="3.5" fill="#f4d93a"/>
<rect x="568.8" y="994.8" width="6.4" height="8.4" rx="2" fill="none" stroke="#e6eee7" stroke-width="1.6"/>
<rect x="570.5" y="996.5" width="3.0" height="3.5" fill="#f4d93a"/>
<rect x="568.8" y="1024.8" width="10.4" height="8.4" rx="2" fill="none" stroke="#e6eee7" stroke-width="1.6"/>
<rect x="570.5" y="1026.5" width="7.0" height="3.5" fill="#f4d93a"/>
<rect x="548.8" y="952.8" width="4.4" height="48.4" rx="2" fill="none" stroke="#e6eee7" stroke-width="1.6"/>
<rect x="550.5" y="954.5" width="1.0" height="3.5" fill="#f4d93a"/>
<rect x="690.8" y="1034.8" width="20.4" height="10.4" rx="2" fill="none" stroke="#e6eee7" stroke-width="1.6"/>
<rect x="692.5" y="1036.5" width="17.0" height="3.5" fill="#f4d93a"/>
<rect x="636.0" y="1028.0" width="14.0" height="4.0" fill="#f4d93a"/>
<rect x="565.0" y="1012.0" width="5.0" height="3.0" fill="#f4d93a"/>
<rect x="572.0" y="1012.0" width="5.0" height="3.0" fill="#f4d93a"/>
<path d="M632.0 899.5 L637.5 905.0 L632.0 910.5 L626.5 905.0Z" fill="#8b8686"/>
<path d="M918.0 1169.5 L922.8 1165.8 H1062.2 L1067.0 1169.5 L1062.2 1173.2 H922.8Z" fill="#f1f5f1"/>
<path d="M1136.0 1169.5 L1140.8 1165.8 H1176.2 L1181.0 1169.5 L1176.2 1173.2 H1140.8Z" fill="#f1f5f1"/>
<path d="M1170.0 1169.5 L1174.8 1165.8 H1177.2 L1182.0 1169.5 L1177.2 1173.2 H1174.8Z" fill="#f1f5f1"/>
<circle cx="1074" cy="1178" r="3" fill="#f4d93a"/>
<rect x="915.8" y="1186.8" width="18.4" height="36.4" rx="1.5" fill="none" stroke="#e6eee7" stroke-width="1.6"/>
<rect x="916.6" y="1187.6" width="16.8" height="7.5" fill="#f4d93a"/>
<rect x="916.6" y="1214.9" width="16.8" height="7.5" fill="#8b8686"/>
<rect x="939.8" y="1181.8" width="28.4" height="43.4" rx="1.5" fill="none" stroke="#e6eee7" stroke-width="1.6"/>
<rect x="940.6" y="1182.6" width="26.8" height="12.0" fill="#f4d93a"/>
<rect x="940.6" y="1212.4" width="26.8" height="12.0" fill="#f4d93a"/>
<rect x="974.8" y="1182.8" width="28.4" height="43.4" rx="1.5" fill="none" stroke="#e6eee7" stroke-width="1.6"/>
<rect x="975.6" y="1183.6" width="26.8" height="12.0" fill="#f4d93a"/>
<rect x="975.6" y="1213.4" width="26.8" height="12.0" fill="#f4d93a"/>
<rect x="1006.8" y="1192.8" width="36.4" height="17.4" rx="1.5" fill="none" stroke="#e6eee7" stroke-width="1.6"/>
<rect x="1007.6" y="1193.6" width="7.5" height="15.8" fill="#8b8686"/>
<rect x="1034.9" y="1193.6" width="7.5" height="15.8" fill="#f4d93a"/>
<rect x="1006.8" y="1216.8" width="36.4" height="17.4" rx="1.5" fill="none" stroke="#e6eee7" stroke-width="1.6"/>
<rect x="1007.6" y="1217.6" width="7.5" height="15.8" fill="#8b8686"/>
<rect x="1034.9" y="1217.6" width="7.5" height="15.8" fill="#f4d93a"/>
<rect x="1043.8" y="1191.8" width="58.4" height="33.4" rx="1.5" fill="none" stroke="#e6eee7" stroke-width="1.6"/>
<rect x="1044.6" y="1192.6" width="10.5" height="31.8" fill="#f4d93a"/>
<rect x="1090.9" y="1192.6" width="10.5" height="31.8" fill="#f4d93a"/>
<rect x="1026.8" y="1238.8" width="43.4" height="31.4" rx="1.5" fill="none" stroke="#e6eee7" stroke-width="1.6"/>
<rect x="1027.6" y="1239.6" width="11.5" height="29.8" fill="#f4d93a"/>
<rect x="1057.9" y="1239.6" width="11.5" height="29.8" fill="#f4d93a"/>
<rect x="939.9" y="1232.9" width="60.2" height="10.2" rx="3" fill="none" stroke="#e6eee7" stroke-width="1.8"/>
<rect x="962.0" y="1234.0" width="16.0" height="8.0" fill="#f4d93a"/>
<rect x="968.0" y="1236.0" width="4.0" height="4.0" fill="#036531"/>
<rect x="947.9" y="1253.9" width="40.2" height="21.2" rx="4" fill="none" stroke="#e4ede5" stroke-width="1.8"/>
<rect x="951.0" y="1258.0" width="34.0" height="14.0" fill="#0a5c3a"/>
<rect x="952.0" y="1259.0" width="3.6" height="2.0" fill="#d8d24a"/>
<rect x="952.0" y="1264.0" width="3.6" height="2.0" fill="#d8d24a"/>
<rect x="952.0" y="1269.0" width="3.6" height="2.0" fill="#d8d24a"/>
<rect x="958.0" y="1259.0" width="3.6" height="2.0" fill="#d8d24a"/>
<rect x="958.0" y="1264.0" width="3.6" height="2.0" fill="#d8d24a"/>
<rect x="958.0" y="1269.0" width="3.6" height="2.0" fill="#d8d24a"/>
<rect x="964.0" y="1259.0" width="3.6" height="2.0" fill="#d8d24a"/>
<rect x="964.0" y="1264.0" width="3.6" height="2.0" fill="#d8d24a"/>
<rect x="964.0" y="1269.0" width="3.6" height="2.0" fill="#d8d24a"/>
<rect x="970.0" y="1259.0" width="3.6" height="2.0" fill="#d8d24a"/>
<rect x="970.0" y="1264.0" width="3.6" height="2.0" fill="#d8d24a"/>
<rect x="970.0" y="1269.0" width="3.6" height="2.0" fill="#d8d24a"/>
<rect x="976.0" y="1259.0" width="3.6" height="2.0" fill="#d8d24a"/>
<rect x="976.0" y="1264.0" width="3.6" height="2.0" fill="#d8d24a"/>
<rect x="976.0" y="1269.0" width="3.6" height="2.0" fill="#d8d24a"/>
<rect x="982.0" y="1259.0" width="3.6" height="2.0" fill="#d8d24a"/>
<rect x="982.0" y="1264.0" width="3.6" height="2.0" fill="#d8d24a"/>
<rect x="982.0" y="1269.0" width="3.6" height="2.0" fill="#d8d24a"/>
<rect x="1008.8" y="1246.8" width="10.4" height="28.4" rx="3" fill="none" stroke="#e6eee7" stroke-width="1.6"/>
<rect x="1010.0" y="1248.0" width="8.0" height="6.0" fill="#8b8686"/>
<rect x="1010.0" y="1268.0" width="8.0" height="6.0" fill="#f4d93a"/>
<path d="M903.0 1210.5 L909.5 1217.0 L903.0 1223.5 L896.5 1217.0Z" fill="#f4d93a"/>
<rect x="849.8" y="1195.8" width="13.4" height="12.4" rx="2" fill="none" stroke="#e6eee7" stroke-width="1.6"/>
<rect x="851.5" y="1197.5" width="10.0" height="3.5" fill="#f4d93a"/>
<rect x="862.8" y="1178.8" width="6.4" height="12.4" rx="2" fill="none" stroke="#e6eee7" stroke-width="1.6"/>
<rect x="864.5" y="1180.5" width="3.0" height="3.5" fill="#f4d93a"/>
<rect x="888.8" y="1178.8" width="8.4" height="12.4" rx="2" fill="none" stroke="#e6eee7" stroke-width="1.6"/>
<rect x="890.5" y="1180.5" width="5.0" height="3.5" fill="#f4d93a"/>
<rect x="896.8" y="1192.8" width="12.4" height="12.4" rx="2" fill="none" stroke="#e6eee7" stroke-width="1.6"/>
<rect x="898.5" y="1194.5" width="9.0" height="3.5" fill="#f4d93a"/>
<rect x="875.8" y="1208.8" width="13.4" height="16.4" rx="2" fill="none" stroke="#e6eee7" stroke-width="1.6"/>
<rect x="877.5" y="1210.5" width="10.0" height="3.5" fill="#f4d93a"/>
<rect x="936.8" y="1283.8" width="10.4" height="6.4" rx="2" fill="none" stroke="#e6eee7" stroke-width="1.6"/>
<rect x="938.5" y="1285.5" width="7.0" height="3.0" fill="#f4d93a"/>
<rect x="952.8" y="1283.8" width="10.4" height="6.4" rx="2" fill="none" stroke="#e6eee7" stroke-width="1.6"/>
<rect x="954.5" y="1285.5" width="7.0" height="3.0" fill="#f4d93a"/>
<rect x="1024.8" y="1279.8" width="8.4" height="10.4" rx="2" fill="none" stroke="#e6eee7" stroke-width="1.6"/>
<rect x="1026.5" y="1281.5" width="5.0" height="3.5" fill="#f4d93a"/>
<rect x="1040.8" y="1280.8" width="18.4" height="6.4" rx="2" fill="none" stroke="#e6eee7" stroke-width="1.6"/>
<rect x="1042.5" y="1282.5" width="15.0" height="3.0" fill="#f4d93a"/>
<rect x="1094.8" y="1234.8" width="7.4" height="10.4" rx="2" fill="none" stroke="#e6eee7" stroke-width="1.6"/>
<rect x="1096.5" y="1236.5" width="4.0" height="3.5" fill="#f4d93a"/>
<rect x="1140.8" y="1268.8" width="10.4" height="14.4" rx="2" fill="none" stroke="#e6eee7" stroke-width="1.6"/>
<rect x="1142.5" y="1270.5" width="7.0" height="3.5" fill="#f4d93a"/>
<rect x="1178.8" y="1246.8" width="10.4" height="10.4" rx="2" fill="none" stroke="#e6eee7" stroke-width="1.6"/>
<rect x="1180.5" y="1248.5" width="7.0" height="3.5" fill="#f4d93a"/>
<rect x="1194.8" y="1244.8" width="10.4" height="12.4" rx="2" fill="none" stroke="#e6eee7" stroke-width="1.6"/>
<rect x="1196.5" y="1246.5" width="7.0" height="3.5" fill="#f4d93a"/>
<rect x="1198.8" y="1250.8" width="12.4" height="10.4" rx="2" fill="none" stroke="#e6eee7" stroke-width="1.6"/>
<rect x="1200.5" y="1252.5" width="9.0" height="3.5" fill="#f4d93a"/>
<rect x="1180.8" y="1266.8" width="12.4" height="16.4" rx="2" fill="none" stroke="#e6eee7" stroke-width="1.6"/>
<rect x="1182.5" y="1268.5" width="9.0" height="3.5" fill="#f4d93a"/>
<rect x="1196.8" y="1268.8" width="12.4" height="14.4" rx="2" fill="none" stroke="#e6eee7" stroke-width="1.6"/>
<rect x="1198.5" y="1270.5" width="9.0" height="3.5" fill="#f4d93a"/>
<rect x="836.0" y="1228.0" width="48.0" height="65.0" rx="1.5" fill="none" stroke="#e9f0ea" stroke-width="2"/>
<rect x="860.0" y="1228.5" width="23.0" height="12.5" fill="#8b8686"/>
<rect x="860.0" y="1278.0" width="23.0" height="13.0" fill="#8b8686"/>
<rect x="836.5" y="1251.0" width="12.5" height="6.0" fill="#f4d93a"/>
<rect x="836.5" y="1262.5" width="12.5" height="5.5" fill="#f4d93a"/>
<rect x="832.0" y="1290.0" width="14.0" height="7.0" fill="#f4f8f4"/>
<rect x="1574.0" y="817.0" width="86.0" height="84.0" rx="1.5" fill="none" stroke="#e9f0ea" stroke-width="2"/>
<rect x="1595.5" y="837.0" width="41.5" height="42.6" fill="#8b8686"/>
<rect x="1571.0" y="814.0" width="13.0" height="6.0" fill="#f4f8f4"/>
<path d="M1586 824.5 H1643" stroke="#f4d93a" stroke-width="8" stroke-dasharray="2.2 1.6" fill="none"/>
<path d="M1586 893 H1643" stroke="#f4d93a" stroke-width="9" stroke-dasharray="2.2 1.6" fill="none"/>
<path d="M1579.8 836 V885" stroke="#f4d93a" stroke-width="8" stroke-dasharray="2.2 1.8" fill="none"/>
<path d="M1652.5 836 V885" stroke="#f4d93a" stroke-width="12" stroke-dasharray="2.2 1.8" fill="none"/>
<rect x="1624.0" y="820.0" width="8.0" height="9.0" fill="#1f8a80"/>
<rect x="1582.6" y="735.0" width="16.1" height="22.4" rx="3" fill="none" stroke="#dfe9e0" stroke-width="2"/>
<rect x="1584.0" y="736.0" width="6.0" height="5.0" fill="#f4d93a"/>
<rect x="1584.0" y="751.0" width="6.0" height="5.0" fill="#f4d93a"/>
<rect x="1605.0" y="736.0" width="30.0" height="8.7" rx="2" fill="none" stroke="#f1f5f1" stroke-width="2"/>
<rect x="1575.0" y="764.8" width="23.7" height="18.2" rx="3" fill="none" stroke="#dfe9e0" stroke-width="2"/>
<rect x="1591.0" y="768.0" width="6.0" height="12.0" fill="#f4d93a"/>
<rect x="1611.0" y="756.0" width="38.6" height="28.0" fill="#eef3ee"/>
<rect x="1614.0" y="759.0" width="12.0" height="9.0" fill="#f4d93a"/>
<rect x="1634.0" y="759.0" width="12.0" height="9.0" fill="#f4d93a"/>
<rect x="1614.0" y="772.0" width="12.0" height="9.0" fill="#f4d93a"/>
<rect x="1634.0" y="772.0" width="12.0" height="9.0" fill="#f4d93a"/>
<rect x="1626.0" y="759.0" width="8.0" height="22.0" fill="#0d4a25"/>
<rect x="1614.0" y="768.0" width="32.0" height="4.0" fill="#0d4a25"/>
<rect x="1604.0" y="757.0" width="5.0" height="24.0" fill="#f1f5f1"/>
<rect x="1652.0" y="769.0" width="5.0" height="11.0" fill="#f1f5f1"/>
<rect x="1663.0" y="782.8" width="18.6" height="22.2" rx="3" fill="none" stroke="#eef3ee" stroke-width="2"/>
<rect x="1665.0" y="784.0" width="15.0" height="5.0" fill="#f4d93a"/>
<rect x="1574.0" y="791.0" width="27.8" height="18.0" fill="#efefc0"/>
<rect x="1578.0" y="794.0" width="6.0" height="9.0" fill="#036531"/>
<rect x="1590.0" y="794.0" width="6.0" height="9.0" fill="#036531"/>
<rect x="1607.9" y="796.5" width="17.2" height="6.6" rx="2" fill="none" stroke="#f1f5f1" stroke-width="1.8"/>
<rect x="1614.0" y="798.0" width="5.0" height="4.0" fill="#f4d93a"/>
<rect x="1633.4" y="801.8" width="13.3" height="9.0" rx="2" fill="none" stroke="#e6eee7" stroke-width="1.6"/>
<rect x="1635.1" y="803.5" width="9.9" height="3.5" fill="#f4d93a"/>
<rect x="1556.0" y="808.0" width="12.0" height="6.0" fill="#f0efb8"/>
<rect x="1556.0" y="817.0" width="12.0" height="6.0" fill="#f0efb8"/>
<rect x="1556.0" y="826.0" width="12.0" height="6.0" fill="#f0efb8"/>
<rect x="1556.0" y="835.0" width="12.0" height="6.0" fill="#f0efb8"/>
<rect x="1556.0" y="844.0" width="12.0" height="6.0" fill="#f0efb8"/>
<rect x="1556.0" y="853.0" width="12.0" height="6.0" fill="#f0efb8"/>
<rect x="1559.0" y="810.0" width="6.0" height="2.5" fill="#036531"/>
<rect x="1559.0" y="819.0" width="6.0" height="2.5" fill="#036531"/>
<rect x="1559.0" y="828.0" width="6.0" height="2.5" fill="#036531"/>
<rect x="1559.0" y="837.0" width="6.0" height="2.5" fill="#036531"/>
<rect x="1559.0" y="846.0" width="6.0" height="2.5" fill="#036531"/>
<rect x="1559.0" y="855.0" width="6.0" height="2.5" fill="#036531"/>
<rect x="1550.6" y="862.3" width="8.6" height="18.6" rx="3" fill="none" stroke="#e6eee7" stroke-width="1.6"/>
<rect x="1552.0" y="866.0" width="6.0" height="4.0" fill="#f4d93a"/>
<rect x="1557.0" y="895.0" width="13.0" height="5.0" fill="#f0efb8"/>
<rect x="1557.0" y="903.0" width="13.0" height="5.0" fill="#f0efb8"/>
<rect x="1557.0" y="911.0" width="13.0" height="5.0" fill="#f0efb8"/>
<rect x="1557.0" y="919.0" width="13.0" height="5.0" fill="#f0efb8"/>
<rect x="1665.3" y="813.4" width="11.9" height="7.8" rx="2" fill="none" stroke="#e6eee7" stroke-width="1.6"/>
<rect x="1667.0" y="815.1" width="8.5" height="3.5" fill="#f4d93a"/>
<rect x="1669.6" y="831.5" width="8.6" height="16.5" rx="2" fill="none" stroke="#e6eee7" stroke-width="1.6"/>
<rect x="1671.3" y="833.2" width="5.2" height="3.5" fill="#f4d93a"/>
<rect x="1669.6" y="854.8" width="8.6" height="12.4" rx="2" fill="none" stroke="#e6eee7" stroke-width="1.6"/>
<rect x="1671.3" y="856.5" width="5.2" height="3.5" fill="#f4d93a"/>
<rect x="1662.8" y="890.8" width="13.4" height="9.2" rx="2" fill="none" stroke="#e6eee7" stroke-width="1.6"/>
<rect x="1664.5" y="892.5" width="10.0" height="3.5" fill="#f4d93a"/>
<rect x="1664.8" y="874.8" width="10.4" height="8.4" rx="2" fill="none" stroke="#e6eee7" stroke-width="1.6"/>
<rect x="1666.5" y="876.5" width="7.0" height="3.5" fill="#f4d93a"/>
<rect x="1633.4" y="907.8" width="8.8" height="17.4" rx="3" fill="none" stroke="#e6eee7" stroke-width="1.6"/>
<rect x="1585.0" y="920.0" width="26.0" height="19.0" fill="#e9ecd0"/>
<rect x="1589.0" y="924.0" width="18.0" height="11.0" fill="#036531"/>
<rect x="1592.0" y="922.0" width="4.0" height="15.0" fill="#e9ecd0"/>
<rect x="1624.0" y="922.0" width="5.0" height="12.0" fill="#f1f5f1"/>
<rect x="1650.0" y="912.0" width="4.0" height="3.0" fill="#f4d93a"/>
<rect x="1660.0" y="912.0" width="6.0" height="3.0" fill="#f4d93a"/>
<rect x="1662.0" y="920.0" width="6.0" height="3.0" fill="#f4d93a"/>
<rect x="1547.6" y="934.9" width="20.2" height="9.5" fill="#f4d93a"/>
<rect x="1552.0" y="937.5" width="11.0" height="4.5" fill="#036531"/>
<rect x="1543.0" y="957.0" width="16.0" height="26.8" rx="3" fill="none" stroke="#dfe9e0" stroke-width="2"/>
<rect x="1545.0" y="959.0" width="5.0" height="5.0" fill="#f4d93a"/>
<rect x="1545.0" y="977.0" width="6.0" height="5.0" fill="#f4d93a"/>
<rect x="1674.0" y="936.0" width="11.8" height="19.0" fill="#e9e27a"/>
<rect x="1677.0" y="941.0" width="6.0" height="4.0" fill="#036531"/>
<rect x="1621.0" y="972.0" width="37.0" height="28.7" fill="#eef3ee"/>
<rect x="1624.0" y="975.0" width="10.0" height="9.0" fill="#f4d93a"/>
<rect x="1645.0" y="975.0" width="10.0" height="9.0" fill="#f4d93a"/>
<rect x="1624.0" y="989.0" width="10.0" height="9.0" fill="#f4d93a"/>
<rect x="1645.0" y="989.0" width="10.0" height="9.0" fill="#f4d93a"/>
<rect x="1634.0" y="977.0" width="11.0" height="6.0" fill="#f4d93a"/>
<rect x="1634.0" y="990.0" width="11.0" height="6.0" fill="#f4d93a"/>
<rect x="1634.0" y="983.0" width="11.0" height="7.0" fill="#0d4a25"/>
<circle cx="1666.7" cy="972" r="3" fill="#f4d93a"/><circle cx="1666.7" cy="982.7" r="3" fill="#f4d93a"/>
<rect x="1597.6" y="1030.5" width="26.4" height="9.5" fill="#e9e27a"/>
<rect x="1602.0" y="1034.0" width="18.0" height="6.0" fill="#036531"/>
<rect x="1652.8" y="1026.0" width="30.9" height="14.0" fill="#eef3ee"/>
<rect x="1656.0" y="1029.0" width="24.0" height="7.0" fill="#f4d93a"/>
<rect x="1632.8" y="1024.8" width="10.4" height="10.4" rx="2" fill="none" stroke="#e6eee7" stroke-width="1.6"/>
<rect x="1511.8" y="805.8" width="7.4" height="7.4" rx="2" fill="none" stroke="#e6eee7" stroke-width="1.6"/>
<rect x="1513.5" y="807.5" width="4.0" height="3.5" fill="#f4d93a"/>
<rect x="1511.8" y="877.8" width="7.4" height="7.4" rx="2" fill="none" stroke="#e6eee7" stroke-width="1.6"/>
<rect x="1513.5" y="879.5" width="4.0" height="3.5" fill="#f4d93a"/>
<rect x="1511.8" y="925.8" width="7.4" height="7.4" rx="2" fill="none" stroke="#e6eee7" stroke-width="1.6"/>
<rect x="1513.5" y="927.5" width="4.0" height="3.5" fill="#f4d93a"/>
<path d="M1897.8 1130.5 L1904.8 1137.5 L1897.8 1144.5 L1890.8 1137.5Z" fill="#f4d93a"/>
<rect x="1912.0" y="1134.0" width="30.0" height="12.0" fill="#eef0c8"/>
<rect x="1916.0" y="1137.0" width="4.0" height="6.0" fill="#036531"/>
<rect x="1926.0" y="1137.0" width="4.0" height="6.0" fill="#036531"/>
<rect x="1936.0" y="1137.0" width="4.0" height="6.0" fill="#036531"/>
<rect x="1893.8" y="1149.8" width="12.4" height="5.4" rx="2" fill="none" stroke="#e6eee7" stroke-width="1.6"/>
<rect x="1895.5" y="1151.5" width="9.0" height="2.0" fill="#f4d93a"/>
<rect x="1894.0" y="1160.0" width="10.0" height="3.0" fill="#f4d93a"/>
<rect x="1937.0" y="1150.0" width="5.0" height="16.0" fill="#eef0c8"/>
<path d="M1918 1150 V1168" fill="none" stroke="#034a20" stroke-width="2.08" stroke-linejoin="round"/>
<path d="M1924 1150 V1168" fill="none" stroke="#034a20" stroke-width="2.08" stroke-linejoin="round"/>
<path d="M1930 1150 V1168" fill="none" stroke="#034a20" stroke-width="2.08" stroke-linejoin="round"/>
<rect x="1886.4" y="1170.0" width="62.6" height="66.9" rx="1.5" fill="none" stroke="#e9f0ea" stroke-width="2"/>
<path d="M1901 1175.5 H1942" stroke="#f4d93a" stroke-width="8" stroke-dasharray="4 3.6" fill="none"/>
<path d="M1901 1230 H1942" stroke="#f4d93a" stroke-width="8" stroke-dasharray="4 3.6" fill="none"/>
<rect x="1887.0" y="1184.5" width="13.0" height="2.8" fill="#f4d93a"/>
<rect x="1887.0" y="1192.0" width="13.0" height="2.8" fill="#f4d93a"/>
<rect x="1887.0" y="1199.5" width="13.0" height="2.8" fill="#f4d93a"/>
<rect x="1887.0" y="1207.0" width="13.0" height="2.8" fill="#f4d93a"/>
<rect x="1887.0" y="1214.0" width="12.0" height="2.0" fill="#9ab89e"/>
<rect x="1887.0" y="1222.0" width="12.0" height="2.0" fill="#9ab89e"/>
<rect x="1903.3" y="1185.0" width="35.1" height="34.3" fill="#8b8686"/>
<rect x="1900.0" y="1242.0" width="19.5" height="8.6" rx="3" fill="none" stroke="#eef3ee" stroke-width="2"/>
<rect x="1903.0" y="1244.0" width="14.0" height="5.0" fill="#f4d93a"/>
<rect x="1907.0" y="1245.0" width="6.0" height="3.0" fill="#0d4a25"/>
<rect x="1890.0" y="1256.7" width="29.5" height="12.3" rx="1.5" fill="none" stroke="#eef3ee" stroke-width="2"/>
<rect x="1891.0" y="1258.0" width="4.0" height="10.0" fill="#8b8686"/>
<rect x="1912.0" y="1258.0" width="6.5" height="10.0" fill="#f4d93a"/>
<rect x="1927.0" y="1250.6" width="22.0" height="18.4" rx="1.5" fill="none" stroke="#eef3ee" stroke-width="2"/>
<rect x="1928.0" y="1252.0" width="6.0" height="16.0" fill="#f4d93a"/>
<rect x="1932.0" y="1242.0" width="10.0" height="4.0" fill="#eef3ee"/>
<rect x="1882.7" y="1120.0" width="59.3" height="3.0" fill="#034a20"/></svg>
<!-- banner -->
<div class="b" style="left:615.20px;top:1404.80px;width:760.80px;height:57.40px;background:#2c2c2c;"></div>
<div class="t" style="left:632.00px;top:1409.85px;font-size:42px;line-height:50.40px;color:#fdfdfd;letter-spacing:1.661px;-webkit-text-stroke:0.9px #fdfdfd;">Lower Cost To Get More Model Data</div>
<!-- models card -->
<div class="b" style="left:1415.00px;top:1038.60px;width:468.00px;height:452.40px;background:#fff;border:1.2px solid #a4a4a4;border-radius:34px;"></div>
<div class="t" style="left:1668.00px;top:1072.37px;font-size:48px;line-height:57.60px;color:#6a4de6;letter-spacing:0.653px;-webkit-text-stroke:1.3px #6a4de6;">Models</div>
<div class="b" style="left:1456.00px;top:1161.00px;width:358.00px;height:1.40px;background:#bcbcbc;"></div>
<div class="b" style="left:1456.00px;top:1205.00px;width:358.00px;height:1.40px;background:#bcbcbc;"></div>
<div class="b" style="left:1456.00px;top:1246.00px;width:358.00px;height:1.40px;background:#bcbcbc;"></div>
<div class="b" style="left:1456.00px;top:1289.00px;width:358.00px;height:1.40px;background:#bcbcbc;"></div>
<div class="b" style="left:1456.00px;top:1331.00px;width:358.00px;height:1.40px;background:#bcbcbc;"></div>
<div class="b" style="left:1456.00px;top:1376.00px;width:358.00px;height:1.40px;background:#bcbcbc;"></div>
<div class="b" style="left:1456.00px;top:1417.00px;width:358.00px;height:1.40px;background:#bcbcbc;"></div>
<div class="t" style="left:1493.00px;top:1159.24px;font-size:40px;line-height:48.00px;color:#e28222;letter-spacing:0.000px;-webkit-text-stroke:0.8px #e28222;"><span style="display:inline-block;transform:scaleX(0.9795);transform-origin:0 50%;">XZZ</span></div>
<div class="t" style="left:1632.40px;top:1374.77px;font-size:33px;line-height:39.60px;color:#2b7ea8;letter-spacing:0.000px;-webkit-text-stroke:0.9px #2b7ea8;">0</div>
<div class="t" style="left:1775.40px;top:1374.97px;font-size:33px;line-height:39.60px;color:#60d3c5;letter-spacing:0.000px;-webkit-text-stroke:0.9px #60d3c5;">0</div>
<div class="t" style="left:1584.00px;top:1422.73px;font-size:36px;line-height:43.20px;color:#414141;letter-spacing:0.000px;-webkit-text-stroke:0.7px #414141;"><span style="display:inline-block;transform:scaleX(0.9662);transform-origin:0 50%;">Other 1</span></div>
<div class="t" style="left:1725.50px;top:1422.73px;font-size:36px;line-height:43.20px;color:#414141;letter-spacing:-0.010px;-webkit-text-stroke:0.7px #414141;">Other 2</div>
<svg style="left:1480px;top:1200px" width="90" height="310" viewBox="1480 1200 90 310">
<defs>
<linearGradient id="bl" x1="0" y1="0" x2="0" y2="1"><stop offset="0" stop-color="#f8c42c"/><stop offset=".5" stop-color="#f3d230"/><stop offset="1" stop-color="#f2dc34"/></linearGradient>
<linearGradient id="br" x1="0" y1="0" x2="0" y2="1"><stop offset="0" stop-color="#e6820f"/><stop offset=".6" stop-color="#ec9620"/><stop offset="1" stop-color="#eda028"/></linearGradient>
<linearGradient id="rl" x1="0" y1="0" x2="0" y2="1"><stop offset="0" stop-color="#f6e77c" stop-opacity=".95"/><stop offset=".55" stop-color="#faefb0" stop-opacity=".7"/><stop offset="1" stop-color="#fff" stop-opacity="0"/></linearGradient>
<linearGradient id="rr" x1="0" y1="0" x2="0" y2="1"><stop offset="0" stop-color="#f2b060" stop-opacity=".9"/><stop offset=".5" stop-color="#f8dcb8" stop-opacity=".55"/><stop offset="1" stop-color="#fff" stop-opacity="0"/></linearGradient>
</defs>
<path d="M1489.4 1418 L1527.5 1433 L1527.5 1500 L1489.4 1497 Z" fill="url(#rl)"/>
<path d="M1527.5 1433 L1556.2 1413.5 L1556.2 1478 L1527.5 1490 Z" fill="url(#rr)"/>
<path d="M1489.4 1234.5 L1527.5 1243 L1527.5 1433 L1489.4 1418.5 Z" fill="url(#bl)"/>
<path d="M1527.5 1243 L1556.2 1230 L1556.2 1413.5 L1527.5 1433 Z" fill="url(#br)"/>
<path d="M1489.4 1234.5 L1521.8 1219.5 L1556.2 1230 L1527.5 1243.4 Z" fill="#f6de35"/>
<path d="M1521.8 1208.6 L1527.9 1219.2 L1521.8 1229.8 L1515.7 1219.2 Z" fill="#e88a1c"/>
</svg>
</div></div><!-- end win -->
<div class="b" style="left:37.60px;top:1153.60px;width:174.80px;height:188.40px;background:#fefefe;border:2px solid #e4e4e8;border-radius:9px;box-shadow:0 0 6px rgba(120,130,160,.18);"></div>
<div class="b" style="left:51.90px;top:1171.00px;width:145.30px;height:112.80px;background:#6948f0;border-radius:9px;"></div>
<svg style="left:80px;top:1180px" width="100" height="100" viewBox="80 1180 100 100">
<g fill="none" stroke="#f1ecff" stroke-width="2.2" stroke-linejoin="round" stroke-linecap="round">
<path d="M103 1235.6 L139 1199.4 L160 1220.4 L124 1256.6 Z"/>
<path d="M143.4 1195.8 L153.4 1186 Q156 1184 158.6 1186 L171.4 1199 Q173.6 1201.8 171.4 1204.4 L162 1213.6 Z"/>
<path d="M83.6 1274.2 L96.6 1241.6 L115.6 1264.2 Z"/>
<path d="M127.2 1201.2 L113 1187.4 Q109.6 1184.6 106 1187.4 L86.4 1205.6 Q83.6 1208.8 86.4 1212 L101.6 1226"/>
<path d="M91.6 1211.4 L100.4 1220.4 M91.6 1211.4 L96.6 1206.6 M96 1215.8 L102.6 1209.4 M100.4 1220.4 L105.4 1215.6"/>
<path d="M156.4 1233.4 L171 1247.6 Q173.6 1250.8 171 1254 L153 1272 Q149.8 1274.6 146.6 1272 L131.2 1257.6"/>
<path d="M136.8 1246.6 L146.2 1256 M136.8 1246.6 L141.4 1242 M141.4 1251.2 L147.6 1245 M146.2 1256 L151 1251.2"/>
</g></svg>
<div class="t" style="left:62.20px;top:1293.85px;font-size:29px;line-height:34.80px;color:#6a4ee0;letter-spacing:0.302px;-webkit-text-stroke:0.4px #6a4ee0;">Custom...</div>
<div class="b" style="left:221.80px;top:1325.30px;width:149.40px;height:55.20px;background:#6a48f1;border-radius:27.6px;"></div>
<div class="t" style="left:235.70px;top:1337.55px;font-size:29px;line-height:34.80px;color:#fbf8ff;letter-spacing:0.089px;-webkit-text-stroke:0.5px #fbf8ff;">Custom...</div>
<svg style="left:185px;top:1298px" width="50" height="48" viewBox="185 1298 50 48">
<path d="M191.4 1304.6 Q189.2 1303.6 190.6 1306 L207.4 1338.6 Q209.4 1341.6 211.4 1338.2 L216 1327.6 Q217 1325.6 219.2 1324.6 L227.6 1320.4 Q230.4 1318.2 227.4 1316.8 Z" fill="#6a48f1"/>
</svg>
</body></html>
